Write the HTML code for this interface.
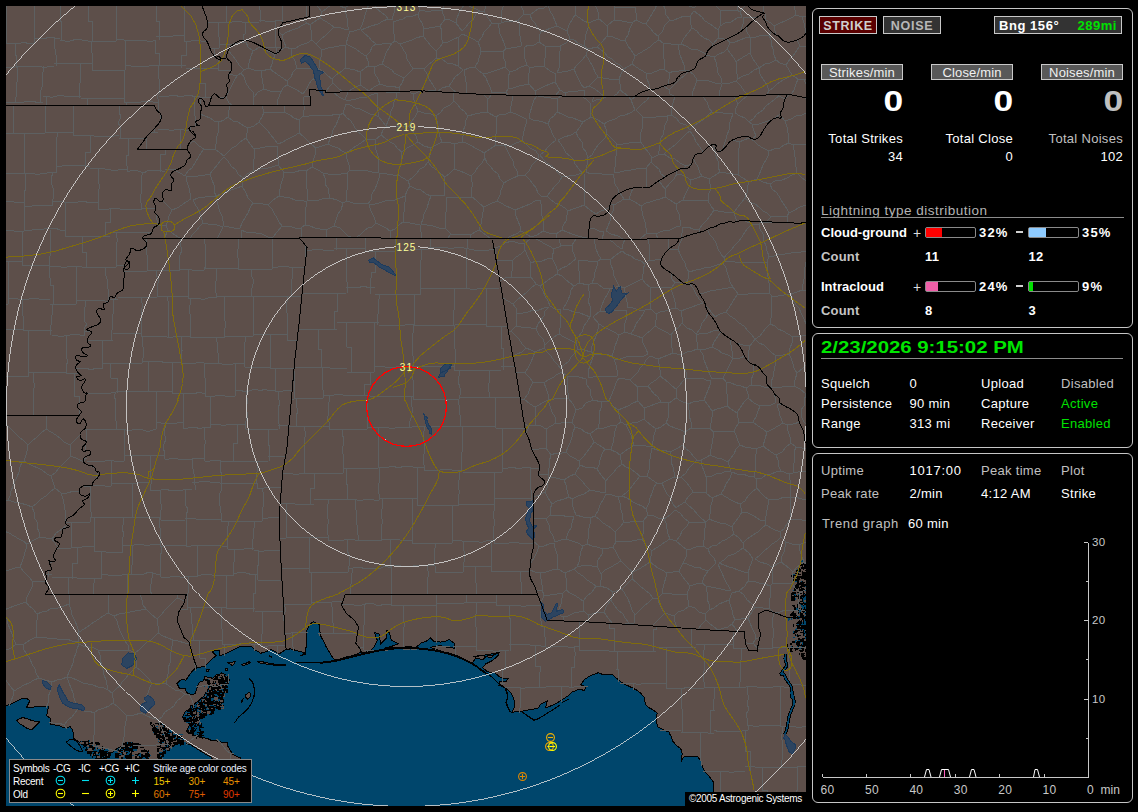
<!DOCTYPE html>
<html><head><meta charset="utf-8"><title>Lightning</title><style>
html,body{margin:0;padding:0;background:#000;}
body{width:1138px;height:812px;overflow:hidden;position:relative;font-family:"Liberation Sans",sans-serif;color:#fff;}
.a{position:absolute;white-space:nowrap;line-height:1;}
.box{position:absolute;border:1px solid #c6c6c6;border-radius:6px;box-sizing:border-box;}
.t{position:absolute;white-space:nowrap;font-size:13px;line-height:16px;height:16px;letter-spacing:0.3px;}
.r{text-align:right;}
.g{color:#c0c0c0;}
.gr{color:#00e000;}
.b{font-weight:bold;}
.btn{position:absolute;box-sizing:border-box;border:1px solid #c8c8c8;text-align:center;white-space:nowrap;}
.bar{position:absolute;box-sizing:border-box;border:1px solid #8a8a8a;border-radius:2px;width:51px;height:11px;}
.bar i{position:absolute;left:0;top:0;height:9px;display:block;}
.lg{position:absolute;white-space:nowrap;font-size:10px;line-height:12px;height:12px;letter-spacing:-0.25px;color:#fff;}
</style></head><body>
<svg class="a" style="left:6px;top:6px;" width="800" height="800" viewBox="6 6 800 800" shape-rendering="crispEdges">
<rect x="6" y="6" width="800" height="800" fill="#5d4f4a"/>
<polygon points="-5,706 3.5,706 10.5,704.3 15.8,701.6 21.1,699 26.4,698.1 29.9,700.8 28.1,704.3 26.4,707.8 30.3,707.4 35.1,706.9 40.2,706.6 45.7,706 47.5,704.8 48.3,706.9 47.7,710.6 46.6,715.7 50.1,718.3 51,724.5 58,725.4 65,728 70.3,726.6 72.9,730.6 73.8,738.5 79.1,742.1 84.4,741.2 91.4,743.8 98.4,747.3 101.1,750 105.4,751.7 112.5,752.6 115.6,749.5 119.5,747.3 123.8,744.7 126.5,742.1 133.6,743.8 140.6,747.3 144.6,749.5 147.6,751.7 149.4,757.9 151.1,764.9 161.1,763.8 161.1,757.5 166.4,749.1 174.8,744.8 184.3,742.7 190.6,744.8 199.1,750.1 207.5,755.4 211.7,757.5 213.8,763.8 241.2,763.8 240.9,761.1 240.2,757.5 237.1,756.8 232.8,754.3 231.7,752.5 229.6,749.1 227.6,745.8 227.5,742.7 224.2,742.5 219.1,741.7 216.2,740.4 211.7,740.6 207.4,738.5 203.3,737.5 200.2,737.1 196.9,736.4 192.4,734.1 189.5,733.7 186.4,731.1 188.5,727.3 189.6,724.8 187.7,721.6 184.9,719.1 182.2,717.4 183.3,715.2 185.8,711 189.5,709.4 190.6,705.8 193,705 196.3,702.6 199.1,700.5 200.6,698.8 203.7,696.2 206.2,692.2 207.5,690 198.5,725 200.6,722.2 202.7,718 204.4,715.1 206.9,713.8 211.1,711.7 213.1,708.6 214.3,707.5 218.1,707.2 221.7,707.5 219.6,703.3 220.1,701.2 222.7,699.1 222.1,695.7 223.8,692.7 224.3,689.1 226.9,687.5 225.9,685.3 226.8,683.5 228,680.1 226.9,675.9 223.4,673.6 221.7,672.7 219.4,674.8 216.4,674.8 214.5,676.7 212.2,679 210.9,677.2 208.1,677.1 204.8,676.9 203.7,680.6 199.5,682.2 197.4,686.4 195.3,693.8 191.1,694.8 186.9,692.7 184.8,688 179.5,688.5 176.9,683.2 181.6,679.5 185.8,680.1 191.1,672.7 195.3,667.9 204.8,666.4 209,662.1 212.2,658.5 216.4,655.8 214.3,653.7 212.2,652.1 215.3,650.5 219.6,650.5 219.6,655.8 226.9,653.2 235.4,649 240.7,646.3 251.2,646.3 254.4,649.5 260.7,653.2 264.9,652.1 271.2,649.5 279.7,653.7 284.9,650 290,649 289.4,648.5 298.2,651.1 305.2,652.8 300,656.1 305.3,654.4 305.7,648.7 307,643.8 306.9,639.3 306.6,634.1 307,629.8 309.7,624.5 313.2,621.8 319.3,624.5 319.6,628.9 320.1,632.9 321.1,636.8 323.9,641.7 326.4,647.3 329,651.6 331.6,656.1 334.3,659.6 339,659.2 343.9,657.9 347.9,656.4 352.7,655.8 359.8,652.6 365,652.1 369.4,651.7 373.8,647.3 377.3,640.3 375.7,636.2 374.7,632.4 379.1,634.1 379.8,639.4 380.8,643.8 386.1,638.5 387,630.6 389.6,633.3 391.4,640.3 398.4,643.8 391.4,646.4 384.4,648.2 387.9,648.2 392,647.6 396.7,647.6 401.5,647.6 405.4,647 410.6,646.9 416,647.3 421.3,642.9 426.5,641.2 430.1,637.7 433.6,641.2 440.6,642.1 445.3,641.2 449.4,639.4 454.7,643.8 454.7,648.2 447.6,647.3 440.6,645.6 434.9,646.7 430.1,647.3 435.7,649.2 440.6,650.8 444.7,652.4 449.6,653.1 453.9,654.5 458.2,656.1 462.4,658.3 467.4,660.7 472.2,663.1 475.7,657.9 482.8,659.6 486.3,656.1 490.8,655.6 495.1,654.4 500,652.6 473.5,656.9 480.5,655.1 485.9,656.6 491.1,657.8 496.4,652.5 499,654.3 496.3,657.1 492.8,660.4 485.8,663.9 482.3,667.5 487.6,671.8 494.6,672.7 498.3,675.8 501.6,678 507.8,678.9 506,681.5 499.9,681.5 499,685.4 505.1,687.7 510.4,692.1 513.9,699.1 514.8,706.1 512.2,712.3 517.1,711.5 521,711.4 528,710 533.4,709.1 538.5,707.9 540.3,704.4 547.3,700.8 545.6,707.9 552.6,705.2 556.1,703.7 559.6,701.1 563.1,699.1 568,695.8 571.9,692.1 579,689.4 584.2,690.3 586,686.8 580.7,685 584.2,679.8 587.5,677.4 591.3,675.4 598.3,672.7 603.6,674.8 608,674.1 612.4,674.5 616,677.8 619.4,680.6 623.7,683.7 628.2,685.9 633.1,688.2 637,690.3 640.7,693.3 644,697.3 645.7,704.4 648.7,707.6 652.8,709.6 657.2,713.1 656.5,717.2 656.3,721.9 658,727.2 665.1,730.7 670,732.5 669.8,734.1 671.5,737.2 672.8,741.1 675,743.8 677,746 680.3,748.2 681.8,750.7 682.1,754.4 681.7,758.1 681.2,761.4 683.8,757 686.7,756.8 691.1,756.9 694.7,756.5 697.9,757 701.4,761.4 701.9,764.4 703.1,768.4 705.8,772.5 708.4,775.4 711.2,779.3 713.7,782.5 713.5,786.3 713.1,789.2 713.9,793.3 713.7,796.5 713,820 -5,820" fill="#00466c" stroke="#000" stroke-width="1"/>
<polygon points="803.8,589 808,589 808,643 803.8,643" fill="#00466c" stroke="#000" stroke-width="1"/>
<polygon points="16.7,720.1 19.3,719 22.8,717.5 27,718.8 30.8,720.1 34.8,721.3 39.5,721.8 37.7,724 35.1,726.2 31.6,729.8 26.4,728 22.9,725.5 19.3,723.6 16.7,720.1" fill="#5d4f4a" stroke="#000" stroke-width="1"/>
<polygon points="228,662.7 233.3,661.9 235.4,661.6 233.8,664.8 232.2,665.3 229.1,663.7 228,662.7" fill="#5d4f4a" stroke="#000" stroke-width="1"/>
<polygon points="241.7,664.3 245.9,663.4 249.1,661.6 250.1,662.7 247,664.8 242.8,665.3 241.7,664.3" fill="#5d4f4a" stroke="#000" stroke-width="1"/>
<polygon points="257.5,661.6 261.7,661.1 264.9,662.7 271.2,663.4 275.4,664.5 281.8,664.3 286,665.1 281.8,665.5 275.4,665.3 269.1,664.5 262.8,663.4 258.6,662.7 257.5,661.6" fill="#5d4f4a" stroke="#000" stroke-width="1"/>
<polygon points="245.9,694.8 248.6,692.7 250.7,693.3 250.1,696.9 247.5,699.1 245.9,697.5 245.9,694.8" fill="#5d4f4a" stroke="#000" stroke-width="1"/>
<polygon points="241.5,700.6 243,699.1 242.8,701.7 241.7,702.4 241.5,700.6" fill="#5d4f4a" stroke="#000" stroke-width="1"/>
<polygon points="225.4,669 228,668.3 227.5,670.1 225.9,670.6 225.4,669" fill="#5d4f4a" stroke="#000" stroke-width="1"/>
<polygon points="205.9,670.1 209,669.5 208.5,671.6 206.4,671.4 205.9,670.1" fill="#5d4f4a" stroke="#000" stroke-width="1"/>
<polygon points="269.1,655.8 271.8,656.3 271.2,657.4 269.1,655.8" fill="#5d4f4a" stroke="#000" stroke-width="1"/>
<path d="M217 694h2v1h-2zM204 703h1v1h-1zM191 722h3v1h-3zM211 698h2v1h-2zM215 693h3v2h-3zM212 698h2v2h-2zM199 702h2v2h-2zM224 684h2v1h-2zM211 700h3v3h-3zM221 685h2v1h-2zM211 709h3v1h-3zM200 723h3v3h-3zM200 703h2v1h-2zM219 684h2v1h-2zM198 712h1v2h-1zM212 683h4v1h-4zM205 680h1v2h-1zM219 705h1v2h-1zM195 712h1v2h-1zM200 722h1v1h-1zM208 682h2v1h-2zM206 710h2v2h-2zM217 678h2v1h-2zM222 694h1v2h-1zM221 689h2v1h-2zM224 677h1v1h-1zM215 692h1v2h-1zM205 707h4v2h-4zM205 714h3v1h-3zM224 682h2v3h-2zM210 706h1v1h-1zM225 675h4v1h-4zM206 679h3v2h-3zM185 720h2v1h-2zM191 718h1v1h-1zM196 718h1v1h-1zM197 723h2v1h-2zM199 707h3v3h-3zM218 681h3v2h-3zM211 703h3v1h-3zM226 679h3v1h-3zM221 693h1v2h-1zM223 690h3v1h-3zM199 719h3v2h-3zM218 686h1v2h-1zM217 691h3v1h-3zM217 677h4v2h-4zM208 695h3v2h-3zM214 701h1v2h-1zM200 715h1v2h-1zM205 714h2v1h-2zM185 718h2v3h-2zM202 712h1v2h-1zM218 696h2v2h-2zM214 693h4v3h-4zM199 715h2v3h-2zM209 697h1v2h-1zM204 685h1v2h-1zM189 724h4v3h-4zM210 701h3v3h-3zM204 704h3v3h-3zM218 690h2v2h-2zM219 696h2v1h-2zM213 705h4v1h-4zM219 682h2v1h-2zM184 718h1v3h-1zM224 684h1v1h-1zM208 711h1v2h-1zM213 699h2v1h-2zM216 688h3v2h-3zM200 704h2v2h-2zM208 686h3v2h-3zM212 688h2v1h-2zM191 709h2v1h-2zM192 719h1v2h-1zM219 696h1v2h-1zM194 715h1v1h-1zM198 711h1v1h-1zM222 689h4v2h-4zM211 693h2v1h-2zM201 714h2v3h-2zM208 680h1v2h-1zM214 683h1v2h-1z" fill="#00466c"/><path d="M205 703h3v2h-3zM212 705h1v3h-1zM218 690h1v3h-1zM212 694h1v2h-1zM218 687h2v1h-2zM219 682h2v3h-2zM190 711h4v2h-4zM196 719h2v3h-2zM194 713h2v2h-2zM209 685h2v3h-2zM210 711h4v3h-4zM193 710h3v2h-3zM215 676h3v3h-3zM227 678h2v2h-2zM212 709h1v3h-1zM211 693h3v1h-3zM202 717h3v1h-3zM206 712h2v2h-2zM223 690h1v2h-1zM192 721h1v2h-1zM198 720h1v2h-1zM220 679h1v2h-1zM196 716h3v1h-3zM213 687h4v3h-4zM220 685h1v1h-1zM202 706h2v1h-2zM213 683h1v1h-1zM217 701h1v2h-1zM223 693h1v1h-1zM197 724h4v1h-4zM194 710h3v1h-3zM218 680h3v3h-3zM226 677h3v3h-3zM195 711h3v3h-3zM208 683h3v1h-3zM200 715h2v1h-2zM192 709h2v1h-2zM216 679h2v1h-2zM220 705h4v3h-4zM223 680h2v1h-2zM207 710h4v1h-4zM198 716h4v3h-4zM195 708h1v2h-1zM199 706h1v1h-1zM199 721h1v3h-1zM218 690h4v2h-4zM208 683h2v2h-2zM200 710h2v2h-2zM198 706h1v2h-1zM197 707h3v1h-3zM205 713h1v1h-1zM221 678h4v1h-4zM209 695h2v3h-2zM206 698h2v2h-2zM209 706h4v2h-4zM188 723h4v1h-4zM187 718h1v1h-1zM201 704h4v2h-4zM216 685h2v3h-2zM211 691h4v3h-4zM214 683h1v1h-1zM219 692h3v2h-3zM212 703h2v1h-2zM207 695h4v2h-4zM195 713h1v3h-1zM198 711h1v2h-1zM202 715h2v1h-2zM183 717h3v3h-3zM186 715h4v1h-4zM198 715h1v2h-1zM204 715h3v1h-3zM201 716h1v2h-1zM224 686h4v2h-4zM213 689h3v2h-3zM194 719h4v1h-4zM204 715h1v1h-1zM198 703h2v3h-2zM221 698h2v3h-2zM210 700h3v1h-3zM215 678h2v1h-2zM207 700h2v2h-2zM218 679h2v2h-2zM207 688h2v3h-2zM213 686h4v1h-4zM197 722h4v2h-4zM214 678h1v2h-1zM211 711h2v1h-2zM212 705h2v1h-2zM197 707h2v1h-2zM210 700h1v3h-1zM218 680h2v2h-2zM197 721h2v1h-2zM203 711h3v3h-3zM188 722h4v2h-4zM220 682h1v2h-1zM212 689h4v2h-4zM206 679h2v3h-2zM208 694h2v2h-2zM220 679h3v2h-3zM224 689h4v3h-4zM209 712h3v1h-3zM193 717h2v1h-2zM208 681h2v3h-2zM198 703h1v2h-1zM223 689h2v1h-2zM211 709h3v1h-3zM190 719h1v2h-1zM189 718h4v1h-4zM194 710h2v2h-2zM194 706h1v2h-1zM209 701h3v1h-3zM189 724h1v2h-1zM190 713h3v2h-3zM218 685h1v3h-1zM210 686h4v1h-4zM194 714h1v3h-1zM217 699h3v1h-3zM205 707h2v1h-2zM193 719h2v3h-2zM216 685h3v1h-3zM207 681h1v3h-1zM189 722h1v1h-1zM196 704h1v1h-1zM205 679h2v2h-2zM204 709h3v2h-3zM222 685h2v3h-2zM192 709h2v1h-2zM219 698h3v2h-3zM209 697h2v1h-2zM194 708h2v2h-2zM210 694h2v1h-2zM199 720h1v3h-1zM210 687h1v1h-1zM199 708h4v1h-4zM196 717h4v2h-4zM193 706h4v2h-4zM190 717h3v1h-3zM219 679h4v2h-4zM201 706h4v1h-4zM207 698h2v2h-2zM225 686h1v1h-1zM208 680h2v2h-2zM223 689h1v2h-1zM191 718h2v2h-2zM219 693h3v3h-3zM212 705h2v1h-2zM217 689h1v1h-1zM217 687h4v2h-4zM200 710h3v1h-3zM197 711h2v2h-2zM211 696h1v2h-1zM209 687h1v1h-1zM209 703h2v1h-2zM198 724h4v2h-4zM224 676h2v2h-2zM205 702h4v2h-4zM220 699h3v3h-3zM206 696h1v3h-1zM207 690h3v2h-3zM223 679h4v1h-4zM219 696h2v1h-2zM219 681h1v2h-1zM200 717h2v1h-2zM213 695h2v2h-2zM212 684h1v1h-1zM214 697h1v2h-1zM216 692h2v1h-2zM201 716h2v1h-2zM198 709h3v1h-3zM195 718h1v2h-1zM192 706h2v2h-2zM209 707h4v1h-4zM213 685h1v3h-1zM223 686h2v1h-2zM209 701h1v1h-1zM213 681h1v2h-1zM205 698h1v1h-1zM200 716h4v1h-4zM200 711h1v3h-1zM212 699h2v1h-2zM203 702h1v3h-1zM189 723h2v3h-2zM215 681h1v2h-1zM221 675h1v1h-1zM224 690h4v3h-4zM216 686h2v2h-2zM199 707h1v1h-1zM197 716h4v2h-4zM206 711h3v1h-3zM209 692h3v3h-3zM198 717h3v2h-3zM212 692h3v1h-3zM220 690h1v2h-1zM217 675h3v1h-3zM217 703h4v2h-4zM187 718h2v3h-2zM188 722h2v2h-2zM205 709h2v1h-2zM217 690h1v2h-1zM214 693h2v1h-2zM211 691h1v2h-1zM191 720h1v2h-1zM227 678h1v3h-1zM195 702h1v2h-1zM225 681h3v1h-3zM218 686h2v3h-2zM208 691h3v1h-3zM216 689h3v1h-3zM191 710h2v1h-2zM208 680h2v1h-2zM226 684h1v2h-1zM200 720h1v3h-1zM199 711h2v2h-2zM192 721h4v3h-4zM193 719h1v1h-1zM218 701h3v1h-3zM207 680h1v1h-1zM224 675h1v2h-1zM224 680h2v1h-2zM225 683h4v1h-4zM194 722h1v2h-1zM213 679h3v1h-3zM205 681h3v1h-3zM216 684h1v2h-1zM219 699h2v1h-2zM194 705h2v2h-2zM211 689h3v3h-3zM210 695h2v2h-2zM189 722h1v1h-1zM198 702h3v2h-3zM213 707h2v3h-2zM209 694h1v3h-1zM221 681h4v3h-4zM212 709h2v1h-2zM203 706h2v1h-2zM227 681h2v2h-2zM206 689h1v1h-1zM195 722h2v1h-2zM206 698h4v3h-4zM197 723h4v3h-4zM226 679h4v2h-4zM217 702h3v2h-3zM209 695h1v1h-1zM190 724h1v3h-1zM194 714h1v2h-1zM226 683h1v3h-1zM214 696h2v2h-2zM208 712h4v1h-4zM213 705h4v3h-4zM204 703h4v1h-4zM212 683h1v3h-1zM183 718h1v2h-1zM216 705h4v2h-4zM202 707h1v3h-1zM209 711h2v1h-2zM221 691h1v3h-1zM199 718h1v2h-1zM198 723h4v2h-4zM203 702h1v2h-1zM198 712h2v3h-2zM220 693h2v3h-2zM199 707h2v3h-2zM218 687h2v1h-2zM207 704h4v2h-4zM209 713h3v2h-3zM221 701h1v2h-1zM222 676h1v3h-1zM213 709h2v2h-2zM224 688h2v2h-2zM219 692h2v3h-2zM200 707h2v2h-2zM225 677h1v3h-1zM220 677h2v3h-2zM201 702h2v3h-2zM198 723h1v1h-1zM216 685h2v3h-2zM190 719h4v1h-4zM216 689h1v1h-1zM200 707h4v1h-4zM205 713h1v2h-1zM190 711h1v1h-1zM220 680h1v1h-1zM193 707h4v1h-4zM209 685h2v1h-2zM216 678h2v1h-2zM195 707h4v2h-4zM224 678h2v2h-2zM216 706h2v2h-2zM211 687h3v2h-3zM207 690h1v1h-1zM211 706h3v1h-3z" fill="#000"/><path d="M203 702h2v2h-2zM210 687h1v1h-1zM207 711h4v1h-4zM198 709h2v1h-2zM218 701h3v3h-3zM191 720h2v3h-2zM191 717h3v2h-3zM207 694h2v2h-2zM197 720h2v3h-2zM224 684h1v1h-1zM211 691h1v1h-1zM217 705h2v1h-2zM216 681h1v2h-1zM207 708h2v1h-2zM215 702h4v2h-4zM223 694h2v3h-2zM218 676h1v2h-1zM215 689h2v1h-2zM224 677h1v3h-1zM220 706h4v3h-4zM216 702h3v1h-3zM204 698h2v2h-2zM214 684h1v2h-1zM198 703h1v1h-1zM198 710h4v1h-4zM195 711h1v2h-1zM206 689h1v3h-1zM212 684h1v2h-1zM218 678h3v1h-3zM201 708h1v1h-1zM201 720h1v2h-1zM205 681h2v3h-2zM199 711h3v2h-3zM188 720h3v3h-3zM217 681h1v1h-1zM225 691h1v2h-1zM195 714h2v2h-2zM203 702h1v2h-1zM223 699h1v3h-1zM212 709h2v2h-2zM206 688h2v1h-2zM197 711h2v3h-2zM198 704h3v2h-3z" fill="#5d4f4a"/>
<path d="M159 751h3v1h-3zM161 736h1v1h-1zM162 734h4v2h-4zM161 750h4v1h-4zM172 737h4v2h-4zM158 738h1v2h-1zM169 732h1v2h-1zM159 751h3v2h-3zM182 739h4v1h-4zM170 742h4v1h-4zM166 748h2v2h-2zM159 741h4v2h-4zM166 745h4v2h-4zM154 728h1v1h-1zM158 741h1v1h-1zM178 739h1v1h-1zM153 731h2v2h-2zM165 746h2v2h-2zM182 741h1v1h-1zM161 724h2v2h-2zM166 740h1v1h-1zM159 741h1v2h-1zM165 749h1v1h-1zM169 737h2v2h-2zM165 746h2v1h-2zM163 741h1v2h-1zM160 726h2v2h-2zM156 726h2v1h-2zM160 755h1v2h-1zM180 743h4v1h-4zM162 734h4v3h-4zM173 739h1v2h-1zM169 735h1v3h-1zM161 754h3v1h-3zM163 739h4v1h-4zM168 736h3v1h-3zM173 734h4v1h-4zM160 724h2v2h-2zM170 730h2v1h-2zM179 740h1v1h-1zM157 754h1v1h-1zM166 744h1v2h-1zM183 742h3v2h-3zM168 730h1v2h-1zM163 725h1v2h-1zM156 728h2v2h-2zM175 740h1v2h-1zM178 736h4v3h-4zM179 734h4v1h-4zM169 730h3v3h-3zM168 733h1v3h-1zM169 740h2v1h-2zM178 743h1v1h-1zM159 756h3v2h-3zM155 729h2v2h-2zM164 726h1v1h-1z" fill="#00466c"/><path d="M166 745h1v2h-1zM169 745h2v2h-2zM157 757h2v1h-2zM180 741h1v2h-1zM171 745h3v2h-3zM168 744h1v2h-1zM153 729h3v3h-3zM178 739h2v1h-2zM168 729h2v1h-2zM159 733h1v3h-1zM165 728h2v2h-2zM158 757h3v2h-3zM166 744h2v1h-2zM165 743h2v3h-2zM150 722h2v2h-2zM154 728h1v3h-1zM172 735h4v1h-4zM163 724h2v2h-2zM168 744h3v3h-3zM174 735h2v2h-2zM161 746h1v2h-1zM160 727h4v2h-4zM166 737h4v3h-4zM161 729h1v1h-1zM160 740h4v2h-4zM163 745h1v3h-1zM164 734h4v3h-4zM155 730h4v3h-4zM177 735h4v2h-4zM161 749h2v1h-2zM155 728h2v3h-2zM179 741h1v1h-1zM160 728h2v3h-2zM180 743h4v2h-4zM168 737h4v1h-4zM177 739h2v2h-2zM172 735h3v1h-3zM164 736h1v1h-1zM162 729h1v1h-1zM166 733h2v1h-2zM163 745h1v2h-1zM154 725h1v2h-1zM161 753h3v2h-3zM175 744h3v1h-3zM170 742h2v2h-2zM161 739h1v3h-1zM163 728h2v3h-2zM162 755h2v2h-2zM156 731h1v3h-1zM160 725h2v2h-2zM162 732h4v2h-4zM179 736h2v2h-2zM151 725h1v1h-1zM163 739h1v1h-1zM179 735h2v3h-2zM172 737h2v2h-2zM162 735h3v2h-3zM181 741h3v2h-3zM164 726h1v3h-1zM160 732h3v2h-3zM172 734h1v1h-1zM167 727h2v1h-2zM165 733h2v1h-2zM159 748h1v1h-1zM160 743h2v2h-2zM180 744h1v2h-1zM171 741h1v2h-1zM161 730h1v2h-1zM172 738h1v3h-1zM152 724h1v3h-1zM157 754h2v2h-2zM173 742h2v2h-2zM158 723h4v2h-4zM167 737h1v1h-1zM172 745h3v1h-3zM175 744h1v1h-1zM181 740h3v2h-3zM158 735h3v3h-3zM173 736h3v1h-3zM176 741h4v1h-4zM154 732h2v3h-2zM161 756h1v1h-1zM159 753h4v2h-4zM157 755h2v2h-2zM177 736h2v2h-2zM162 732h1v2h-1zM164 730h1v1h-1zM157 756h1v1h-1zM150 723h1v2h-1zM177 742h2v2h-2zM179 742h2v1h-2zM155 727h1v2h-1zM164 729h2v2h-2zM169 732h2v1h-2zM174 741h4v2h-4zM173 740h3v3h-3zM156 735h4v3h-4zM158 755h2v3h-2zM178 739h1v1h-1zM157 746h3v1h-3zM179 740h2v1h-2zM176 743h2v1h-2zM164 749h1v1h-1zM165 741h1v2h-1zM168 748h2v2h-2zM181 738h2v1h-2zM168 740h3v3h-3zM167 747h2v3h-2zM162 753h1v3h-1zM172 737h3v1h-3zM161 724h1v1h-1zM159 736h1v3h-1zM162 746h3v3h-3zM173 742h4v2h-4zM152 730h4v1h-4zM169 739h3v2h-3zM164 739h2v3h-2zM155 722h3v2h-3zM168 729h1v1h-1zM161 749h1v2h-1zM164 747h4v2h-4zM167 730h2v3h-2zM177 739h3v3h-3zM160 745h2v3h-2zM153 724h1v1h-1zM167 749h3v2h-3zM176 738h2v2h-2zM177 735h2v1h-2zM162 746h2v2h-2zM157 750h2v2h-2zM164 752h2v1h-2zM171 745h3v1h-3zM162 736h1v1h-1zM162 736h3v3h-3zM171 741h1v3h-1zM159 742h1v1h-1zM157 749h2v1h-2zM159 739h2v1h-2zM160 731h2v2h-2zM167 737h1v1h-1zM154 726h1v2h-1zM162 749h2v1h-2zM157 751h2v1h-2zM162 751h4v3h-4zM177 739h3v2h-3zM159 733h1v1h-1zM172 732h1v2h-1zM153 727h2v2h-2zM157 748h2v2h-2zM170 741h3v2h-3zM167 734h3v3h-3zM159 735h2v1h-2zM166 735h4v1h-4zM162 753h1v2h-1zM159 751h4v1h-4zM152 728h2v2h-2zM159 731h2v2h-2zM158 736h2v3h-2zM169 736h4v3h-4zM158 736h1v2h-1zM161 745h1v3h-1zM151 724h2v2h-2zM172 733h1v1h-1zM170 742h2v1h-2zM156 734h4v1h-4zM156 728h1v1h-1zM164 727h1v2h-1zM178 741h2v2h-2zM169 740h1v3h-1zM158 735h1v1h-1zM166 743h4v1h-4zM156 729h3v1h-3zM180 735h2v2h-2zM160 736h2v2h-2zM161 726h2v3h-2zM161 746h1v2h-1zM179 743h1v1h-1zM162 736h1v1h-1zM155 731h3v1h-3zM159 757h2v1h-2zM159 757h3v2h-3zM175 742h1v3h-1zM174 739h4v1h-4zM159 742h3v1h-3zM166 730h2v2h-2zM161 754h2v1h-2z" fill="#000"/><path d="M157 743h2v1h-2zM169 747h2v1h-2zM164 742h1v3h-1zM173 741h4v1h-4zM163 731h1v1h-1zM159 740h1v2h-1zM169 729h2v1h-2zM171 742h2v1h-2zM165 737h3v2h-3zM155 721h4v2h-4zM159 750h3v2h-3zM162 749h1v3h-1zM171 745h1v2h-1zM164 741h1v1h-1zM166 748h3v2h-3zM163 744h4v1h-4zM178 735h4v1h-4zM166 741h3v2h-3zM160 725h3v2h-3zM161 744h4v3h-4zM161 731h2v2h-2zM171 747h1v2h-1zM173 738h1v2h-1zM151 724h2v1h-2z" fill="#5d4f4a"/>
<path d="M193 723h1v1h-1zM216 702h2v3h-2zM192 714h1v3h-1zM213 702h1v2h-1zM200 701h3v2h-3zM208 690h1v2h-1zM219 695h1v2h-1zM197 711h2v1h-2zM189 732h1v1h-1zM212 704h1v1h-1zM202 703h2v2h-2zM206 692h1v1h-1zM223 691h1v2h-1zM199 713h1v1h-1zM215 698h2v2h-2zM200 703h1v1h-1zM218 696h2v1h-2zM206 709h3v3h-3zM218 698h2v3h-2zM208 709h1v2h-1zM203 698h1v2h-1zM212 693h1v3h-1zM203 710h2v3h-2zM211 704h2v1h-2zM196 728h4v2h-4zM197 732h3v2h-3zM223 693h1v1h-1zM200 732h2v1h-2zM212 690h2v2h-2zM208 709h2v2h-2zM198 727h3v2h-3zM200 728h2v2h-2zM214 709h3v1h-3zM214 706h2v1h-2zM218 692h4v2h-4zM186 721h2v2h-2zM215 696h2v1h-2zM219 695h1v2h-1zM205 696h1v2h-1zM205 694h2v2h-2zM197 732h4v2h-4zM202 704h3v1h-3zM199 707h1v1h-1zM199 722h2v3h-2zM210 707h1v1h-1zM192 710h1v2h-1zM207 695h2v2h-2zM207 712h4v1h-4zM200 710h1v3h-1zM194 707h2v3h-2zM218 703h2v2h-2zM190 708h3v1h-3zM196 734h1v3h-1zM199 720h4v3h-4zM212 693h2v1h-2zM197 734h2v2h-2zM188 721h2v2h-2zM191 722h2v1h-2zM207 710h4v2h-4zM211 699h3v2h-3zM194 715h2v3h-2zM216 699h1v3h-1zM213 697h1v1h-1zM220 696h2v2h-2zM217 694h1v3h-1zM197 715h1v2h-1zM194 705h3v2h-3zM196 730h3v2h-3zM214 693h2v2h-2zM219 707h4v1h-4zM205 697h3v1h-3zM208 704h2v3h-2zM198 707h1v3h-1zM186 721h3v1h-3zM204 709h1v1h-1zM221 693h3v1h-3zM223 700h3v2h-3zM194 733h4v2h-4zM213 709h1v2h-1zM205 694h1v2h-1zM192 729h4v2h-4zM198 711h2v1h-2zM196 712h1v3h-1zM188 731h2v2h-2zM216 691h3v2h-3zM196 731h4v2h-4zM210 705h4v1h-4zM213 697h2v2h-2zM211 699h3v2h-3z" fill="#00466c"/><path d="M209 699h1v2h-1zM220 702h2v1h-2zM206 710h2v2h-2zM210 706h4v2h-4zM214 696h2v3h-2zM204 702h3v2h-3zM203 701h1v2h-1zM188 710h2v2h-2zM219 701h4v2h-4zM209 698h2v2h-2zM191 731h4v1h-4zM212 692h3v2h-3zM220 698h3v3h-3zM199 733h4v1h-4zM218 692h1v2h-1zM217 701h1v2h-1zM200 705h1v1h-1zM196 704h1v1h-1zM195 708h1v1h-1zM217 692h1v3h-1zM190 709h3v1h-3zM190 708h1v1h-1zM187 718h2v3h-2zM191 725h2v1h-2zM218 697h3v2h-3zM221 702h3v1h-3zM192 715h2v2h-2zM192 714h2v1h-2zM207 702h4v1h-4zM207 693h3v3h-3zM197 717h3v3h-3zM200 734h2v2h-2zM200 717h4v1h-4zM218 697h3v1h-3zM200 702h3v3h-3zM218 694h1v2h-1zM209 695h3v1h-3zM205 696h2v2h-2zM218 703h1v1h-1zM209 697h2v2h-2zM216 706h2v1h-2zM204 711h3v1h-3zM206 699h2v1h-2zM199 709h4v1h-4zM206 710h4v1h-4zM191 713h1v1h-1zM194 728h1v1h-1zM185 715h3v1h-3zM213 708h2v2h-2zM188 720h1v1h-1zM200 727h1v1h-1zM221 696h2v1h-2zM211 703h2v2h-2zM199 733h1v2h-1zM189 717h3v2h-3zM205 704h2v1h-2zM208 700h3v2h-3zM211 710h1v2h-1zM193 731h1v1h-1zM201 704h1v2h-1zM201 713h1v1h-1zM207 705h2v2h-2zM202 710h2v3h-2zM195 723h1v3h-1zM188 730h4v3h-4zM187 730h2v3h-2zM198 704h2v1h-2zM202 698h2v2h-2zM190 723h2v3h-2zM185 720h1v1h-1zM200 705h1v2h-1zM200 735h4v1h-4zM208 694h4v1h-4zM188 713h1v1h-1zM223 699h1v2h-1zM194 720h1v1h-1zM209 708h2v3h-2zM192 705h1v1h-1zM200 715h1v1h-1zM215 701h2v1h-2zM196 717h1v3h-1zM204 710h1v2h-1zM192 730h1v3h-1zM219 697h4v1h-4zM192 711h2v1h-2zM210 693h4v2h-4zM201 705h4v1h-4zM205 712h2v2h-2zM208 699h3v3h-3zM193 718h1v2h-1zM193 719h2v1h-2zM192 706h3v1h-3zM216 704h1v1h-1zM206 710h2v2h-2zM193 708h2v1h-2zM209 707h2v3h-2zM210 702h4v2h-4zM208 707h1v1h-1zM197 734h1v3h-1zM207 704h3v2h-3zM195 729h1v2h-1zM202 715h3v1h-3zM202 708h2v2h-2zM193 729h1v1h-1zM204 711h1v1h-1zM194 715h1v1h-1zM204 697h2v1h-2zM202 706h3v2h-3zM198 714h4v1h-4zM192 730h3v1h-3zM215 692h3v2h-3zM199 729h2v2h-2zM219 695h1v2h-1zM211 710h3v1h-3zM213 700h1v1h-1zM205 698h4v2h-4zM201 731h3v2h-3zM211 693h2v3h-2zM218 692h2v2h-2zM204 714h3v2h-3zM192 729h2v3h-2zM190 710h2v3h-2zM212 709h3v1h-3zM206 713h1v2h-1zM198 725h1v1h-1zM195 721h1v3h-1zM189 721h2v1h-2zM209 690h4v1h-4zM189 720h1v1h-1zM194 725h2v2h-2zM202 707h4v2h-4zM190 731h2v3h-2zM196 709h1v2h-1zM205 698h3v1h-3zM192 723h2v1h-2zM218 703h2v2h-2zM187 718h1v1h-1zM191 725h1v2h-1zM195 710h2v1h-2zM198 735h2v2h-2zM213 701h1v1h-1zM195 716h2v3h-2zM210 692h1v2h-1zM212 695h3v3h-3zM200 727h4v1h-4zM194 719h1v2h-1zM197 708h2v1h-2zM189 713h4v2h-4zM187 720h4v2h-4zM199 737h2v1h-2zM216 697h1v2h-1zM208 705h1v2h-1zM195 722h2v2h-2zM193 715h2v3h-2zM206 713h1v2h-1zM199 725h3v3h-3zM200 731h4v2h-4zM201 700h1v3h-1zM215 697h1v3h-1zM191 720h1v3h-1zM200 735h2v2h-2zM221 695h1v1h-1zM212 703h2v1h-2zM207 704h1v3h-1zM197 720h2v1h-2zM192 732h2v3h-2zM201 701h2v3h-2zM193 714h1v2h-1zM196 726h1v1h-1zM186 719h2v2h-2zM217 699h1v1h-1zM192 723h2v2h-2zM201 714h4v3h-4zM194 716h3v1h-3zM200 731h2v1h-2zM204 705h2v1h-2zM223 695h2v1h-2zM199 727h1v2h-1zM216 696h1v2h-1zM197 718h2v2h-2zM192 733h2v3h-2zM220 705h3v1h-3zM196 728h1v1h-1zM209 706h4v1h-4zM205 703h2v2h-2zM212 691h2v3h-2zM189 717h2v2h-2zM207 693h3v2h-3zM191 723h2v1h-2zM193 719h4v3h-4zM214 691h3v2h-3zM194 721h1v1h-1zM198 723h1v1h-1zM214 702h4v2h-4zM194 716h1v1h-1zM213 700h2v1h-2zM191 708h1v3h-1zM207 693h4v2h-4zM219 707h2v3h-2zM201 707h3v1h-3zM196 736h1v3h-1zM187 713h2v2h-2zM187 711h2v1h-2zM216 705h1v3h-1zM184 719h3v3h-3zM218 702h2v1h-2zM209 696h1v2h-1zM193 717h1v2h-1zM209 691h2v2h-2zM191 719h2v2h-2zM208 706h3v2h-3zM221 703h1v1h-1zM199 703h1v2h-1zM220 694h4v2h-4zM191 711h4v3h-4zM200 714h1v3h-1zM195 709h2v2h-2zM200 732h2v1h-2zM211 696h2v1h-2zM204 714h1v2h-1zM213 708h2v2h-2zM220 692h2v1h-2zM204 698h1v1h-1zM223 699h1v3h-1zM210 701h4v2h-4zM209 691h1v1h-1zM199 712h1v1h-1zM199 733h4v1h-4zM222 697h1v2h-1zM205 698h1v2h-1zM191 714h2v2h-2zM194 719h1v2h-1zM216 702h1v2h-1zM202 737h1v2h-1zM203 714h3v2h-3zM208 710h2v2h-2zM197 732h4v1h-4zM216 707h4v2h-4zM222 692h2v2h-2zM195 712h2v3h-2zM218 707h2v3h-2zM190 725h2v1h-2zM204 713h2v2h-2zM191 727h3v2h-3zM191 729h2v1h-2zM191 709h1v2h-1zM203 712h1v2h-1z" fill="#000"/><path d="M197 704h1v2h-1zM205 704h2v2h-2zM193 706h1v2h-1zM193 712h3v2h-3zM222 704h1v2h-1zM209 705h1v1h-1zM207 711h3v3h-3zM189 729h1v3h-1zM202 699h1v3h-1zM224 695h1v1h-1zM220 700h3v2h-3zM205 695h1v2h-1zM195 716h1v2h-1zM211 695h1v2h-1zM197 706h2v1h-2zM195 711h1v2h-1zM202 711h1v1h-1zM203 699h1v1h-1zM197 722h1v2h-1zM203 712h3v1h-3zM197 714h2v3h-2zM214 697h4v3h-4zM193 716h1v1h-1zM188 714h2v1h-2zM195 722h4v1h-4zM186 713h1v1h-1z" fill="#5d4f4a"/>
<path d="M84 741h3v1h-3zM81 741h3v2h-3zM105 748h4v3h-4zM95 754h1v2h-1zM107 753h1v2h-1zM90 743h2v2h-2zM104 750h2v1h-2zM95 746h2v1h-2zM102 748h1v3h-1zM95 745h3v2h-3zM91 746h3v2h-3zM107 754h2v2h-2zM100 750h1v3h-1zM89 750h3v2h-3zM88 740h2v2h-2zM85 748h1v3h-1zM92 751h2v2h-2zM101 758h3v2h-3zM95 746h2v1h-2zM96 756h1v2h-1zM97 757h3v2h-3zM87 747h1v3h-1zM96 755h1v3h-1zM83 744h3v1h-3zM93 756h2v2h-2zM93 751h4v1h-4zM85 746h4v1h-4zM102 746h1v2h-1zM91 749h1v1h-1zM106 755h4v1h-4zM91 743h1v2h-1zM97 744h2v2h-2zM86 749h4v2h-4zM90 748h2v1h-2zM95 748h4v1h-4zM88 752h2v2h-2zM94 754h1v1h-1zM100 756h3v3h-3zM87 750h4v2h-4zM100 748h4v1h-4zM101 757h4v1h-4z" fill="#00466c"/><path d="M98 757h2v2h-2zM100 752h4v2h-4zM90 751h1v3h-1zM98 744h1v1h-1zM104 752h3v2h-3zM87 751h2v3h-2zM83 742h4v3h-4zM90 745h2v3h-2zM91 748h2v1h-2zM96 748h2v1h-2zM100 746h2v2h-2zM95 754h1v1h-1zM107 754h2v3h-2zM87 744h2v2h-2zM100 756h3v1h-3zM94 755h2v1h-2zM93 746h1v1h-1zM83 744h3v2h-3zM91 748h4v1h-4zM99 750h2v2h-2zM106 755h4v3h-4zM103 756h1v1h-1zM103 757h4v2h-4zM87 745h3v1h-3zM105 755h2v2h-2zM89 747h2v2h-2zM107 754h4v2h-4zM102 748h1v1h-1zM100 748h1v3h-1zM95 758h3v2h-3zM95 742h4v2h-4zM93 751h4v1h-4zM86 747h1v2h-1zM96 743h3v2h-3zM85 741h4v2h-4zM93 748h1v2h-1zM93 753h2v1h-2zM85 749h4v1h-4zM95 752h1v2h-1zM98 744h1v1h-1zM83 747h1v1h-1zM87 744h1v1h-1zM103 751h2v2h-2zM101 753h1v2h-1zM89 747h2v3h-2zM84 743h2v2h-2zM96 755h1v3h-1zM97 743h3v2h-3zM89 746h4v2h-4zM90 746h4v2h-4zM106 751h1v1h-1zM90 743h1v2h-1zM89 749h1v1h-1zM84 745h2v2h-2zM84 741h2v1h-2zM102 746h1v3h-1zM90 746h2v1h-2zM104 753h3v2h-3zM106 756h1v2h-1zM85 741h2v1h-2zM87 745h3v1h-3zM104 753h1v2h-1zM94 745h1v2h-1zM100 753h2v2h-2zM97 745h2v2h-2zM91 746h3v2h-3zM83 741h1v1h-1zM92 742h1v1h-1zM93 746h2v2h-2zM94 752h1v1h-1zM92 755h3v1h-3zM100 758h4v2h-4zM102 754h1v2h-1zM80 742h2v2h-2zM83 742h3v1h-3zM88 744h1v1h-1zM97 755h2v1h-2zM96 752h3v2h-3zM103 749h2v1h-2zM96 755h1v1h-1zM100 750h3v2h-3zM85 743h4v2h-4zM93 754h2v1h-2zM81 744h3v1h-3zM85 745h2v1h-2zM88 751h4v3h-4zM106 753h2v1h-2zM82 741h4v1h-4zM90 754h1v2h-1zM85 749h3v2h-3zM90 750h3v2h-3zM96 747h1v1h-1zM88 749h4v1h-4zM88 743h2v1h-2zM92 755h1v3h-1zM100 755h2v3h-2zM93 742h1v1h-1zM107 753h4v2h-4zM93 746h4v1h-4zM102 754h3v2h-3zM88 740h1v1h-1zM85 742h3v2h-3zM92 748h1v3h-1zM85 741h2v1h-2zM107 753h2v2h-2zM94 752h1v2h-1zM85 744h3v2h-3zM97 743h2v2h-2zM91 742h3v3h-3zM80 742h3v2h-3zM92 755h3v1h-3zM99 752h1v1h-1zM90 747h2v2h-2zM93 745h2v1h-2zM103 755h4v1h-4zM96 757h3v1h-3z" fill="#000"/><path d="M90 750h3v1h-3zM86 742h2v2h-2zM96 747h1v3h-1zM103 747h1v2h-1zM94 754h1v1h-1zM102 745h3v1h-3zM98 746h4v3h-4zM80 742h4v2h-4zM103 748h1v2h-1zM97 745h2v1h-2zM95 744h1v1h-1zM96 752h2v2h-2zM97 756h3v2h-3zM87 745h2v2h-2zM93 745h3v2h-3zM90 744h4v1h-4zM107 754h1v2h-1zM87 750h3v1h-3zM92 754h1v2h-1zM88 748h4v2h-4z" fill="#5d4f4a"/>
<path d="M145 752h2v1h-2zM130 746h2v2h-2zM147 752h2v3h-2zM145 754h2v2h-2zM143 754h2v1h-2zM128 756h2v1h-2zM136 758h3v1h-3zM146 753h1v1h-1zM129 748h2v3h-2zM130 748h2v2h-2zM131 742h1v3h-1zM132 752h4v2h-4zM136 755h2v2h-2zM132 758h1v2h-1zM117 751h3v2h-3zM124 756h4v1h-4zM137 752h2v2h-2zM130 751h4v2h-4zM125 746h4v2h-4zM138 751h2v1h-2zM142 749h1v1h-1zM133 743h3v2h-3zM125 743h1v1h-1zM133 755h2v2h-2zM142 757h2v1h-2zM141 756h1v1h-1zM127 742h2v3h-2zM122 747h1v1h-1zM141 750h3v2h-3zM123 757h1v3h-1zM149 755h2v1h-2zM148 754h2v3h-2zM125 754h3v2h-3zM137 746h1v2h-1zM125 745h1v3h-1zM124 749h2v2h-2zM116 754h2v1h-2zM130 743h2v2h-2zM135 754h2v1h-2zM131 754h1v2h-1zM138 745h2v3h-2zM127 747h2v3h-2zM124 752h1v3h-1zM124 746h2v3h-2zM124 755h2v3h-2zM146 753h2v1h-2zM143 754h2v1h-2zM131 757h2v2h-2zM125 751h2v3h-2zM138 754h3v3h-3zM116 756h4v2h-4zM119 750h2v3h-2zM128 752h1v1h-1zM129 742h1v1h-1zM135 750h3v2h-3zM144 751h2v2h-2zM121 746h3v1h-3z" fill="#00466c"/><path d="M118 749h2v2h-2zM126 757h2v2h-2zM122 757h1v3h-1zM130 748h3v2h-3zM142 755h1v1h-1zM132 756h1v2h-1zM144 750h3v1h-3zM121 757h1v2h-1zM125 755h2v2h-2zM119 752h1v2h-1zM147 753h1v2h-1zM146 757h2v3h-2zM131 757h1v2h-1zM144 750h3v2h-3zM139 745h1v1h-1zM126 752h2v1h-2zM136 753h2v3h-2zM146 756h3v1h-3zM146 752h2v1h-2zM135 753h1v1h-1zM125 748h3v2h-3zM147 751h1v2h-1zM144 752h3v3h-3zM141 747h3v3h-3zM129 745h2v2h-2zM137 744h4v2h-4zM133 756h1v3h-1zM131 743h2v2h-2zM126 756h4v3h-4zM143 747h1v1h-1zM126 755h1v2h-1zM145 752h3v2h-3zM137 745h3v1h-3zM137 754h2v1h-2zM140 757h1v2h-1zM126 746h1v2h-1zM122 752h4v1h-4zM120 750h1v1h-1zM118 751h1v1h-1zM116 755h2v3h-2zM137 756h2v3h-2zM145 755h2v1h-2zM127 744h1v1h-1zM123 749h2v3h-2zM130 757h1v1h-1zM132 747h4v1h-4zM116 754h2v3h-2zM145 757h1v1h-1zM132 746h1v1h-1zM135 748h2v1h-2zM120 755h3v1h-3zM135 743h4v2h-4zM128 743h3v1h-3zM122 747h2v2h-2zM122 755h1v2h-1zM134 748h4v1h-4zM148 758h2v1h-2zM132 753h3v1h-3zM148 753h1v1h-1zM132 746h2v2h-2zM144 751h1v1h-1zM124 743h2v1h-2zM127 757h1v1h-1zM127 755h3v1h-3zM146 754h1v1h-1zM145 753h1v3h-1zM123 751h2v3h-2zM133 743h4v1h-4zM128 756h3v1h-3zM124 750h4v1h-4zM129 754h3v3h-3zM132 753h4v2h-4zM125 744h2v3h-2zM129 750h2v2h-2zM126 748h3v2h-3zM130 751h4v3h-4zM130 757h2v2h-2zM138 750h2v1h-2zM122 754h1v1h-1zM136 751h1v3h-1zM125 755h2v3h-2zM146 755h1v2h-1zM140 748h4v3h-4zM141 751h1v2h-1zM146 753h2v1h-2zM145 755h2v1h-2zM120 746h4v3h-4zM132 746h2v1h-2zM134 744h2v2h-2zM129 755h1v2h-1zM128 756h1v2h-1zM132 750h1v2h-1zM138 757h1v1h-1zM115 755h3v3h-3zM132 742h1v1h-1zM118 749h3v3h-3zM128 744h3v3h-3zM132 744h3v1h-3zM132 746h1v2h-1zM122 747h2v1h-2zM126 755h4v1h-4zM133 744h1v1h-1zM141 754h1v1h-1zM141 757h2v1h-2zM126 755h1v1h-1zM128 748h4v3h-4zM115 753h4v2h-4zM127 757h2v1h-2zM122 753h3v1h-3zM128 746h1v1h-1zM126 743h1v1h-1zM139 745h1v1h-1zM126 757h3v3h-3zM140 750h1v2h-1zM135 751h1v3h-1zM132 746h2v1h-2zM132 743h3v1h-3zM126 758h1v1h-1zM141 754h1v1h-1zM131 758h4v1h-4zM126 757h4v2h-4zM125 744h1v2h-1zM119 757h1v2h-1zM128 742h1v1h-1zM126 745h2v2h-2zM138 747h4v2h-4zM135 755h1v2h-1zM123 750h2v3h-2zM135 755h3v3h-3zM122 745h1v2h-1zM122 753h4v2h-4zM121 746h1v3h-1zM135 757h4v2h-4zM122 744h2v1h-2zM127 747h2v1h-2zM148 758h1v2h-1zM144 756h2v1h-2zM130 753h2v1h-2zM135 746h2v1h-2zM126 745h2v3h-2zM121 747h2v1h-2zM138 756h2v1h-2zM148 756h2v1h-2zM122 756h1v1h-1zM128 757h2v2h-2zM116 754h1v2h-1zM126 755h1v2h-1zM139 756h1v3h-1zM119 749h2v2h-2zM130 743h2v3h-2zM128 755h4v2h-4zM137 753h2v2h-2zM149 755h1v1h-1zM117 756h3v1h-3zM132 757h2v2h-2zM123 744h1v1h-1zM146 750h1v1h-1zM122 755h1v2h-1zM136 754h2v2h-2zM132 746h2v2h-2zM124 749h2v1h-2zM135 755h2v1h-2zM124 746h1v2h-1zM146 754h4v2h-4zM145 752h2v1h-2zM147 755h3v1h-3zM129 748h2v3h-2zM133 747h1v2h-1zM144 750h1v2h-1zM131 752h4v1h-4zM136 746h4v2h-4zM118 752h4v1h-4zM124 743h2v1h-2zM118 755h4v3h-4zM119 750h4v1h-4zM142 751h2v2h-2zM135 743h3v2h-3zM137 746h1v3h-1zM129 744h1v3h-1zM148 750h1v2h-1zM125 746h2v2h-2zM123 752h4v2h-4zM127 750h3v1h-3zM142 754h2v1h-2zM123 743h1v2h-1zM135 756h4v2h-4zM126 748h1v1h-1zM132 744h3v3h-3zM147 756h1v2h-1zM128 749h2v2h-2zM124 744h1v3h-1zM120 752h3v1h-3zM141 749h2v3h-2zM142 754h1v2h-1zM133 756h2v1h-2zM139 748h3v1h-3zM139 753h1v1h-1zM128 742h3v2h-3zM139 757h3v2h-3zM126 743h1v2h-1zM141 755h4v2h-4z" fill="#000"/><path d="M137 749h4v3h-4zM143 752h2v3h-2zM138 746h2v3h-2zM132 752h3v3h-3zM135 751h2v3h-2zM149 757h2v2h-2zM140 748h4v2h-4zM141 753h1v1h-1zM132 756h3v3h-3zM122 745h3v1h-3zM137 750h4v3h-4zM130 751h1v2h-1zM121 755h3v2h-3zM119 756h2v3h-2zM124 752h2v3h-2zM134 751h3v2h-3zM145 752h2v1h-2zM136 753h2v1h-2zM132 754h1v1h-1zM142 753h3v1h-3zM121 745h1v1h-1zM118 752h3v1h-3zM123 752h1v2h-1zM128 746h2v1h-2zM141 752h4v2h-4zM134 755h3v1h-3zM123 750h1v2h-1zM149 757h4v1h-4zM137 756h2v2h-2zM117 751h2v1h-2zM139 748h1v1h-1z" fill="#5d4f4a"/>
<path d="M793 574h2v1h-2zM805 642h3v2h-3zM801 561h2v1h-2zM804 607h2v3h-2zM802 624h1v2h-1zM799 623h2v3h-2zM800 628h1v2h-1zM801 646h1v3h-1zM805 642h2v1h-2zM797 643h1v1h-1zM800 628h2v2h-2zM802 601h2v2h-2zM793 637h2v1h-2zM798 612h3v1h-3zM793 590h1v1h-1zM806 640h3v3h-3zM798 639h3v2h-3zM794 593h2v3h-2zM799 640h2v3h-2zM802 560h2v2h-2zM801 604h2v3h-2zM791 646h2v2h-2zM801 598h2v2h-2zM801 644h2v3h-2zM793 631h1v2h-1zM792 646h1v1h-1zM803 561h1v2h-1zM795 635h4v1h-4zM804 638h2v1h-2zM797 646h2v2h-2zM805 586h2v1h-2zM801 624h1v2h-1zM796 628h1v2h-1zM798 616h2v1h-2zM802 642h4v2h-4zM799 610h2v3h-2zM805 654h2v1h-2zM803 647h1v3h-1zM796 618h4v1h-4zM802 606h2v1h-2zM800 597h3v3h-3zM795 580h4v2h-4zM802 622h3v3h-3zM790 617h3v1h-3zM789 618h1v2h-1zM801 628h1v3h-1zM797 623h4v2h-4zM798 594h1v1h-1zM805 573h1v1h-1zM792 598h4v2h-4zM802 606h2v3h-2zM799 597h2v3h-2zM803 638h1v1h-1zM791 618h1v2h-1zM797 569h2v3h-2zM800 602h3v3h-3zM790 643h4v2h-4zM804 652h1v2h-1zM801 581h4v1h-4zM799 589h3v1h-3zM795 576h4v1h-4zM796 608h1v2h-1zM795 613h1v1h-1zM802 598h3v3h-3zM795 640h2v3h-2zM802 628h4v2h-4zM795 629h2v2h-2zM800 612h1v2h-1zM806 603h3v2h-3zM802 582h2v2h-2zM802 622h2v3h-2zM797 608h3v2h-3zM805 601h1v1h-1zM801 568h3v1h-3zM804 618h4v2h-4zM802 596h3v1h-3zM798 648h3v1h-3zM788 618h1v3h-1z" fill="#00466c"/><path d="M794 607h2v1h-2zM795 625h4v1h-4zM802 654h1v3h-1zM800 563h4v2h-4zM806 637h2v1h-2zM799 653h1v2h-1zM791 575h2v2h-2zM797 625h2v2h-2zM799 650h4v1h-4zM805 635h4v2h-4zM791 617h1v1h-1zM796 632h1v1h-1zM800 651h1v1h-1zM792 605h2v1h-2zM794 609h2v2h-2zM803 645h2v1h-2zM801 584h1v3h-1zM795 573h4v1h-4zM801 591h2v1h-2zM797 612h2v2h-2zM799 598h4v3h-4zM800 582h4v3h-4zM802 655h2v2h-2zM801 577h1v2h-1zM802 654h1v3h-1zM802 636h2v1h-2zM800 600h3v2h-3zM798 595h2v1h-2zM793 641h2v2h-2zM804 565h4v3h-4zM793 611h1v1h-1zM790 647h3v2h-3zM795 643h3v3h-3zM798 568h2v1h-2zM798 639h4v1h-4zM799 589h4v2h-4zM805 651h1v2h-1zM794 618h1v1h-1zM799 639h3v1h-3zM798 597h1v2h-1zM793 605h1v2h-1zM803 584h4v2h-4zM801 584h1v2h-1zM804 641h4v2h-4zM803 572h1v2h-1zM799 584h3v1h-3zM801 655h2v2h-2zM800 593h2v1h-2zM799 569h2v3h-2zM790 649h1v1h-1zM797 580h2v1h-2zM802 638h3v2h-3zM802 565h1v1h-1zM793 615h4v2h-4zM797 583h4v1h-4zM795 608h1v2h-1zM805 640h4v1h-4zM790 614h3v2h-3zM797 570h1v2h-1zM802 567h3v1h-3zM791 613h2v2h-2zM805 650h2v2h-2zM797 604h1v2h-1zM801 585h4v2h-4zM792 612h2v3h-2zM796 575h4v3h-4zM794 643h1v2h-1zM799 623h2v2h-2zM805 591h1v2h-1zM796 644h2v2h-2zM794 586h1v1h-1zM804 642h1v3h-1zM801 608h1v2h-1zM801 625h2v3h-2zM797 634h1v3h-1zM793 579h3v2h-3zM802 571h1v1h-1zM801 623h1v1h-1zM797 578h2v1h-2zM803 611h1v1h-1zM806 618h2v2h-2zM797 625h3v2h-3zM802 566h1v3h-1zM801 565h1v1h-1zM799 622h2v2h-2zM806 610h2v2h-2zM795 585h4v3h-4zM799 597h2v2h-2zM800 576h2v1h-2zM794 632h1v2h-1zM797 617h2v2h-2zM803 648h1v3h-1zM801 628h1v3h-1zM795 573h4v1h-4zM801 567h1v2h-1zM805 574h1v1h-1zM802 567h4v2h-4zM806 592h2v1h-2zM800 614h3v3h-3zM795 587h1v1h-1zM798 596h4v2h-4zM804 603h1v2h-1zM801 620h1v3h-1zM803 622h1v2h-1zM806 644h4v1h-4zM792 641h3v1h-3zM804 633h1v1h-1zM805 584h3v2h-3zM799 574h1v3h-1zM799 587h1v2h-1zM803 639h3v2h-3zM803 614h1v2h-1zM802 618h2v2h-2zM794 647h2v2h-2zM800 582h1v1h-1zM794 605h1v2h-1zM804 629h3v1h-3zM796 641h2v1h-2zM799 578h1v2h-1zM795 635h1v1h-1zM804 578h2v2h-2zM794 631h3v1h-3zM794 589h2v2h-2zM797 606h2v1h-2zM798 607h2v2h-2zM802 576h4v3h-4zM799 602h3v1h-3zM800 612h1v1h-1zM791 595h4v3h-4zM800 640h3v2h-3zM806 589h1v1h-1zM797 592h2v1h-2zM790 643h2v2h-2zM796 595h3v2h-3zM796 584h3v1h-3zM800 576h1v2h-1zM795 588h3v1h-3zM804 641h4v2h-4zM804 617h4v2h-4zM795 630h1v3h-1zM791 617h3v1h-3zM800 615h4v3h-4zM804 564h4v2h-4zM805 626h2v2h-2zM806 625h3v2h-3zM797 648h1v1h-1zM805 584h1v2h-1zM792 592h4v2h-4zM798 646h1v3h-1zM788 647h3v3h-3zM798 638h2v1h-2zM795 649h3v1h-3zM801 595h1v1h-1zM805 619h1v2h-1zM806 640h4v2h-4zM801 603h2v2h-2zM796 641h4v3h-4zM805 595h1v1h-1zM796 645h1v2h-1zM795 579h2v2h-2zM795 649h2v1h-2zM789 648h3v1h-3zM803 644h2v1h-2zM793 616h3v3h-3zM793 617h3v2h-3zM795 610h4v1h-4zM802 626h4v2h-4zM799 602h4v2h-4zM801 653h4v3h-4zM804 646h1v2h-1zM806 564h2v3h-2zM793 613h3v1h-3zM800 628h4v1h-4zM803 567h4v2h-4zM800 603h1v1h-1zM802 645h3v2h-3zM795 634h1v1h-1zM803 643h3v1h-3zM795 649h1v2h-1zM800 632h4v1h-4zM805 594h1v2h-1zM805 570h2v1h-2zM804 577h1v3h-1zM801 651h2v1h-2zM802 574h4v3h-4zM794 608h1v2h-1zM797 605h2v1h-2zM791 647h2v1h-2zM800 644h2v2h-2zM793 613h3v3h-3zM804 641h1v3h-1zM805 592h2v3h-2zM787 644h1v3h-1zM803 657h3v3h-3zM798 644h4v2h-4zM794 586h4v3h-4zM793 575h1v3h-1zM800 595h2v1h-2zM794 632h1v2h-1zM802 628h4v1h-4zM795 577h1v2h-1zM793 575h4v1h-4zM796 623h3v1h-3zM802 595h3v2h-3zM800 613h4v3h-4zM801 577h4v1h-4zM798 583h1v1h-1zM800 598h2v2h-2zM801 568h2v1h-2zM799 621h3v3h-3zM799 565h1v1h-1zM802 571h1v2h-1zM803 619h1v3h-1zM795 631h3v1h-3zM805 643h3v3h-3zM803 602h1v1h-1zM800 586h2v2h-2zM801 565h1v1h-1zM802 610h3v2h-3zM793 624h1v3h-1zM802 657h1v2h-1zM796 570h2v2h-2zM802 572h4v3h-4zM806 622h2v2h-2zM792 642h2v1h-2zM799 570h2v2h-2zM795 646h2v2h-2zM795 577h2v1h-2zM798 635h3v1h-3zM798 574h3v1h-3zM794 631h2v1h-2zM800 565h1v1h-1zM805 648h1v2h-1zM792 596h4v1h-4zM805 609h1v3h-1zM805 613h3v1h-3zM801 588h3v2h-3zM805 644h4v1h-4zM803 591h3v3h-3zM797 579h2v3h-2zM802 581h4v2h-4zM792 646h1v1h-1zM795 648h2v1h-2zM797 582h2v3h-2zM797 621h2v2h-2zM802 649h2v1h-2zM800 602h4v2h-4zM791 593h3v2h-3zM805 616h1v3h-1zM799 625h2v1h-2zM791 598h4v3h-4zM801 568h3v1h-3zM797 627h4v2h-4zM801 647h2v2h-2zM804 607h1v3h-1zM803 569h1v2h-1zM804 591h3v2h-3zM797 635h2v2h-2zM801 627h2v2h-2zM797 607h1v1h-1zM795 644h2v1h-2zM793 633h2v1h-2zM796 630h4v1h-4zM790 649h3v3h-3zM799 620h1v2h-1zM803 640h2v3h-2zM803 625h3v1h-3zM804 603h4v2h-4zM805 631h1v2h-1z" fill="#000"/><path d="M805 630h2v1h-2zM796 616h1v2h-1zM803 604h1v1h-1zM804 591h4v2h-4zM794 645h3v2h-3zM804 600h2v2h-2zM803 581h2v1h-2zM792 595h2v1h-2zM804 654h4v1h-4zM796 620h2v2h-2zM799 599h3v2h-3zM792 649h1v2h-1zM796 611h1v1h-1zM804 639h2v2h-2zM795 624h1v2h-1zM788 595h3v2h-3zM796 641h1v1h-1zM805 593h4v1h-4zM799 595h2v1h-2zM798 607h2v1h-2zM804 615h4v1h-4zM804 648h2v1h-2zM797 595h1v1h-1zM804 652h4v1h-4zM805 580h2v3h-2zM796 575h4v1h-4zM792 643h4v3h-4zM806 646h2v1h-2zM802 636h3v2h-3zM800 644h1v1h-1zM800 602h3v1h-3zM803 613h2v2h-2zM805 634h4v2h-4zM803 570h1v2h-1z" fill="#5d4f4a"/>
<path fill="none" stroke="#5d6061" stroke-width="1" d="M496 258L495 254L495 248M495 248L501 246L505 243L512 241M513 260L507 260L501 260L496 260M500 281L505 278L511 277M513 304L508 301L503 298M508 332L511 331M531 277L524 278L517 277L511 277M511 277L512 271L512 266L513 260M526 348L522 344L519 339L516 336L511 331M511 331L516 326M512 241L518 243L524 244M513 260L516 257L521 254L525 250M513 357L517 354L522 352L526 348M517 314L516 308L513 304M513 304L517 300L522 296L527 292L531 288L536 284M536 329L531 328L526 327L521 327L516 326M516 326L516 320L517 314M525 373L516 372M517 314L523 313L528 312L533 310L539 310L544 308L549 307M520 400L524 399M529 426L524 424M535 407L530 404L524 399M524 399L528 394L530 388L533 382M525 250L524 244M524 244L530 239M531 263L528 257L525 250M533 382L529 377L525 373M525 373L528 368L531 362L533 357L535 352M535 352L531 350L526 348M526 434L529 426M536 425L529 426M540 573L535 572L530 570M530 564L534 558L537 552L539 546M536 284L531 277M531 277L530 271L531 263M531 263L536 261L542 261L547 259L552 258M532 450L539 449L546 448M546 519L539 518L533 518M533 497L539 495L545 492M539 546L533 541M533 382L539 382L544 383M536 425L535 419L535 413L535 407M535 407L539 405L544 402L548 400M535 352L544 348M545 345L543 339L539 335L536 329M536 329L538 324L541 320L544 316L545 311L549 307M540 286L536 284M536 591L542 590M546 429L541 426L536 425M554 249L549 246L545 244L540 241L536 239M548 474L538 474M539 546L544 546L549 544L554 543M550 306L548 301L545 296L543 291L540 286M540 286L543 284L548 280L553 277L557 274M542 590L542 585L541 579L540 573M540 573L546 572L552 570L558 569M541 603L544 595M544 595L542 590M561 369L558 365L554 361L551 356L548 353L544 348M544 348L545 345M548 400L548 394L546 388L544 383M544 383L548 380L554 377L556 375L562 372M544 595L550 595L557 594L563 593M548 616L544 613M545 345L549 341L554 337L559 334M552 504L548 498L545 492M545 492L547 488L548 482L549 477M551 455L546 448M546 448L547 441L546 435L546 429M555 542L553 536L550 531L549 525L546 519M546 519L550 515M546 429L551 426L556 423M549 477L548 474M548 474L549 468L549 462L551 455M548 620L548 616M556 423L555 417L552 412L550 406L548 400M548 400L554 399L561 398L568 398M548 616L553 615L558 614M564 480L556 478L549 477M561 310L555 309L550 306M574 516L568 517L561 515L557 515L550 515M550 515L550 509L552 504M551 455L556 453L562 453L566 452M552 504L557 501L564 499L569 497M558 271L555 264L552 258M552 258L554 249M554 249L561 246M558 569L557 563L557 558L557 554L555 548L554 543M555 542L561 540L566 539M572 422L567 422L561 423L556 423M574 286L570 283L566 280L562 276L557 274M557 274L558 271M558 271L562 268L567 266L572 262L576 259M565 573L558 569M563 617L558 614M558 614L559 609L561 604L562 598L563 593M561 246L559 239M576 343L570 340L564 337L559 334M559 334L560 328L560 322L560 315L561 310M572 245L567 245L561 246M561 369L564 365L569 361L571 357L574 354L578 349M567 376L562 372M563 593L566 590M590 317L585 315L580 313L574 312L569 310L563 309M563 309L566 304L568 300L570 295L571 290L574 286M564 621L563 617M563 617L568 616L574 613L579 612L584 611M569 497L567 490L566 485L564 480M564 480L570 476L575 474M566 590L566 585L566 578L565 573M565 573L574 569M583 601L579 598L574 595L570 593L566 590M583 546L578 543L572 541L566 539M566 539L568 533L571 528L572 523L574 516M579 461L574 458L570 456L566 452M566 452L568 447L570 443L572 437L573 432L575 427M567 376L572 376L579 377L586 379M568 398L568 393L567 388L567 382L567 376M576 410L573 404L568 398M572 499L569 497M576 259L573 252L572 245M572 245L576 239M575 427L572 422M572 422L574 416L576 410M576 515L574 510L572 504L572 499M572 499L578 496L584 494L590 490M574 286L579 283M596 586L592 583L587 580L583 576L578 573L574 569M574 569L577 567M590 434L585 432L581 429L575 427M590 490L586 486L583 482L579 478L575 474M575 474L580 465M578 349L576 343M576 343L578 337L582 332L584 326L587 322L590 317M590 518L583 517L576 515M576 410L582 408L586 403L593 400M577 567L579 562L580 556L581 551L583 546M577 567L581 566L587 565L592 566L597 566M578 260L583 260L588 261L592 261L598 261M579 283L579 278L579 271L578 267L578 260M591 352L584 350L578 349M580 465L579 461M579 461L583 457L587 452L590 448L594 442M588 285L579 283M597 469L592 467L585 467L580 465M584 611L583 606L583 601M583 601L587 596L592 592L596 586M583 546L587 544M588 615L584 611M593 400L591 396L590 389L587 385L586 379M603 549L597 547L592 546L587 544M587 544L588 539L588 534L589 528L590 524L590 518M588 377L588 372L590 365L592 360L594 354M617 376L611 376L606 377L600 376L593 377L588 377M588 622L588 615M588 615L592 614L599 612L604 612M590 317L590 311L590 306L588 301L590 295L589 291L588 285M588 285L592 283M605 493L600 492L595 491L590 490M590 518L595 516M594 442L590 434M590 434L598 428M594 354L591 352M591 352L592 346L594 341L596 336L598 329L599 324M610 289L603 288L598 284L592 283M592 283L594 278L595 272L597 266L598 261M602 402L593 400M599 324L593 317M593 317L600 311M612 356L606 354L600 354L594 354M605 449L599 445L594 442M601 259L598 254L596 249L595 244L594 239M615 532L611 528L608 526L603 523L600 520L595 516M595 516L598 511L600 505L603 500L606 494M600 586L596 586M606 481L601 475L597 469M597 469L599 465L600 460L602 454L605 449M601 574L597 566M597 566L598 560L602 554L603 549M598 428L599 424L600 418L599 413L601 408L602 402M617 425L610 426L604 428L598 428M598 261L601 259M619 335L614 332L608 329L604 327L599 324M613 592L607 588L600 586M600 586L601 580L601 574M600 311L602 305L604 300L607 295L610 289M600 311L604 311L610 311L616 310L620 310L626 310M610 260L601 259M601 574L605 570L611 567L616 564L621 561M602 402L609 401M603 549L609 548L613 547M613 624L608 618L604 612M604 612L607 605L611 600M605 449L611 450M605 493L605 488L606 481M622 464L617 468L613 473L609 477L606 481M606 494L612 495L618 497M622 249L617 246L613 242L608 239M618 410L613 406L609 401M609 401L611 396L614 389L616 383L619 378M619 286L616 280L614 276L613 270L611 265L610 260M610 260L616 255L622 251M610 289L619 286M620 455L616 452L611 450M611 450L613 443L614 437L615 431L617 425M629 623L625 618L623 614L618 610L614 605L611 600M611 600L613 592M614 359L612 356M612 356L614 350L615 346L617 341L619 335M613 592L622 589M621 561L618 556L616 552L613 547M613 547L616 542M617 376L617 370L616 365L614 359M614 359L620 359L626 357L631 356L638 356L644 356L648 354M616 542L615 532M615 532L620 527L624 522M616 542L621 541L626 541L632 541L637 540L642 539M617 425L621 422M621 422L619 415L618 410M618 410L623 408L628 406L633 403L638 401M624 522L622 518L622 513L620 507L620 503L618 497M618 497L622 496M630 380L625 379L619 378M624 288L619 286M625 332L619 335M622 464L620 455M620 455L625 451L630 448L634 445M633 572L629 569L625 565L621 561M626 425L621 422M645 264L641 261L635 259L631 256L626 254L622 251M622 249L623 244L625 239M640 476L636 473L631 469L626 467L622 464M646 509L642 506L637 504L633 502L627 498L622 496M622 496L626 493L630 489L633 485L636 481L640 476M635 615L632 610L630 604L628 599L625 594L622 589M622 589L627 584L632 579M643 521L637 521L630 522L624 522M627 307L627 302L626 298L625 292L624 288M624 288L630 285L636 282L642 279M631 334L625 332M625 332L624 327L626 320L627 315L626 310M625 624L629 623M634 445L632 439L631 435L628 429L626 425M626 425L632 423L638 422L644 419M645 310L639 310L633 308L627 307M629 623L634 623M638 387L634 384L630 380M630 380L634 376L638 372L640 368L644 364L646 360L650 356M642 338L637 336L631 334M631 334L634 329L636 324L639 320L643 314L645 310M653 598L650 594L645 590L640 586L636 582L632 579M632 579L633 572M633 572L639 569L644 566L650 562M634 623L635 615M652 447L646 446L640 445L634 445M653 598L649 602L644 606L639 611L635 615M644 408L638 401M638 401L637 394L638 387M648 386L638 387M640 476L647 476M650 287L646 284L642 279M642 279L643 274L643 269L645 264M648 354L646 349L643 343L642 338M642 338L646 334L651 330L655 326M652 551L648 547L645 544L642 539M642 539L643 534L643 528L643 521M643 521L648 515M656 429L651 425L647 422L644 419M644 419L644 414L644 408M644 408L650 406L655 404L661 402M645 264L649 260M645 310L651 309M648 515L646 509M646 509L649 503L650 498L652 493L654 487L657 483M657 483L652 480L647 476M647 476L649 470L649 465L650 459L651 453L652 448M661 402L658 397L654 394L651 390L648 386M648 386L651 383L656 380L660 376M649 260L649 255L649 249L649 244L648 239M664 519L658 518L654 516L648 515M662 259L655 260L649 260M667 573L662 570L658 568L654 565L650 562M650 562L651 556L652 551M658 359L650 356M650 287L656 287L661 287L666 287L671 288M651 309L650 304L650 299L651 292L650 287M656 314L651 309M652 447L653 441L654 435L656 429M652 551L656 548L661 545L665 542L670 539M652 626L656 622L660 618L665 613M670 452L663 450L657 450L652 448M658 598L653 598M671 335L666 332L660 329L655 326M655 326L656 320L656 314M666 423L661 427L656 429M656 314L660 312L665 311L671 309L676 308M657 483L662 483M665 613L662 609L659 603L658 598M658 598L662 594M660 376L660 370L659 364L658 359M658 359L663 357L668 355L673 353M676 389L672 386L668 382L664 379L660 376M661 402L669 403M676 508L673 504L670 497L667 494L664 488L662 483M662 483L668 480L674 477M687 594L682 594L678 594L672 594L666 593L662 594M662 594L663 588L664 584L666 577L667 573M670 539L668 534L667 529L666 523L664 519M664 519L670 515L675 510M674 616L665 613M685 432L681 430L675 428L670 426L666 423M666 423L668 418L668 413L668 408L669 403M667 573L673 572L679 571M668 250L668 244L669 238M669 403L676 398M674 477L674 472L673 467L671 462L671 456L670 452M670 452L676 449L683 445M676 541L670 539M673 353L672 348L671 340L671 335M671 335L674 331L678 328L682 323M675 283L672 279L671 273M676 308L675 302L674 298L672 292L671 288M671 288L675 283M681 355L673 353M677 628L675 622L674 616M674 616L678 612L684 610L689 606M681 477L674 477M689 522L684 518L680 513L675 510M675 283L681 282M676 508L680 505L685 502M687 550L682 546L676 541M676 541L680 536L682 531L687 526L689 522M681 311L676 308M688 404L681 401L676 398M676 398L676 389M676 389L679 386L683 381L686 378M690 586L686 581L682 576L679 571M679 571L683 563M682 323L682 317L681 311M681 311L686 309L692 307L697 305L703 303M686 378L686 372L684 366L682 360L681 355M681 355L687 352L692 351L697 349M693 492L690 487L686 482L681 477M681 477L686 473L689 468L692 465L697 460M696 334L692 330L687 328L682 323M697 460L694 457L690 452L686 449L683 445M683 445L683 439L685 432M708 571L702 569L699 567L694 567L687 564L683 563M683 563L686 557L687 550M706 522L702 519L698 515L693 509L689 506L685 502M685 502L688 497L693 492M685 432L691 428M711 380L706 380L702 378L696 379L691 378L686 378M687 550L691 549L698 546L703 546M689 606L688 600L687 594M687 594L690 586M691 428L691 422L689 415L689 410L688 404M688 404L693 402L699 401L704 400M705 614L699 612L695 608L689 606M705 522L699 522L695 522L689 522M690 586L696 584L702 583M703 303L699 299L696 294L693 288L690 284M710 428L703 428L697 428L691 428M706 493L700 492L693 492M696 334L700 329L702 323L706 318L708 313M697 349L697 342L696 335M696 335L702 333L708 333L713 331L719 330M700 350L697 349M697 460L701 460M698 629L702 624L706 620M712 379L710 375L708 370L706 365L704 360L703 355L700 350M712 347L706 349L700 350M706 477L704 471L702 466L701 460M701 460L707 457L710 455M706 586L702 583M702 583L704 577L708 571M708 549L703 546M703 546L704 540L704 534L705 528L705 522M712 411L708 405L704 400M704 400L706 395L708 390L710 385L711 380M706 620L705 614M705 614L709 610M706 522L709 519M706 586L711 587L716 588L721 589L725 590L731 591M709 610L709 604L707 599L707 592L706 586M718 630L714 627L709 623L706 620M712 498L706 493M706 493L706 488L706 483L706 477M706 477L712 476L716 474L722 473L726 471L731 471M708 571L712 567L716 563M716 563L714 558L710 554L708 549M708 549L712 546L717 545L722 541L725 540L730 537L734 534M709 610L714 608L719 604L724 602L729 600M732 527L726 524L720 523L714 521L709 519M709 519L710 514L710 508L712 502L712 498M713 432L710 428M710 428L711 423L712 417L712 411M728 462L722 459L717 458L710 455M710 455L711 449L712 444L713 438L713 432M733 358L728 355L722 353L718 350L712 347M712 347L714 342L718 336L721 332M727 406L721 408L717 409L712 411M712 379L717 378L723 378M712 498L721 494M713 432L718 431L723 431L729 432L734 431M731 591L729 587L726 582L724 578L722 573L720 569L718 564M718 630L724 628L728 627L732 624M748 573L744 572L738 570L733 568L729 567L724 565L719 563M719 563L724 560L728 556L734 554L739 551L743 548M740 504L735 502L731 500L726 497L721 494M721 494L724 489L726 484L730 478L732 472M726 382L723 378M723 378L725 374L728 368L730 364L733 358M726 382L731 383L736 385L741 386L746 388M727 406L727 399L727 394L726 388L726 382M737 413L731 409L727 406M731 471L728 462M728 462L731 458L734 454L736 449L740 445M735 620L733 615L732 610L730 604L729 600M729 600L732 593M733 358L732 351L731 345L730 339M734 534L732 527M732 527L735 522L739 517L742 512M732 472L737 474L743 474L748 476L754 477M732 593L739 591M738 632L732 624M732 624L735 620M745 356L740 358L733 358M740 445L738 441L736 435L734 431M734 431L739 422M743 543L739 538L734 534M735 620L741 619L748 618M739 422L738 418L737 413M737 413L740 408L744 402L748 398M753 422L747 422L739 422M755 607L751 603L747 600L744 595L739 591M739 591L745 586L748 581M756 449L751 448L745 447L740 445M742 512L740 504M740 504L745 501L748 496L752 492L757 488M765 521L760 520L754 516L748 513L742 512M743 548L743 543M743 543L747 539L753 535L758 532L762 528L766 525M753 559L749 553L743 548M748 644L745 641M748 398L748 394L746 388M746 388L751 385M760 406L754 403L748 398M756 639L755 634L752 628L750 623L748 618M748 618L752 612L755 607M753 643L748 644M770 586L765 584L759 583L753 581L748 581M748 581L748 573M748 573L750 566L753 559M770 387L764 387L758 385L751 385M751 385L751 380L753 375L753 369L754 365M758 649L753 643M753 643L756 639M767 432L763 429L758 426L753 422M753 422L756 417L758 411L760 406M756 479L754 477M754 477L755 471L755 466L755 460L756 454L756 449M772 567L767 564L760 562L755 559M755 559L759 556L764 551L768 548L772 544L777 541L781 537M755 607L763 608L770 609M757 488L756 479M756 479L762 478L766 475L771 474L776 472L781 471M756 449L763 446M756 639L760 637M769 500L764 496L760 492L757 488M760 406L765 405L771 405L775 403M776 455L771 452L767 449L763 446M763 446L765 439L767 432M766 525L765 521M765 521L766 516L767 510L768 505L769 500M780 532L773 529L766 525M767 432L773 429L778 426L783 423M790 497L784 497L779 499L774 499L769 500M773 612L770 609M770 609L769 602L770 598L770 591L770 586M770 586L773 583M773 583L772 579L773 572L772 567M772 567L781 562M773 612L780 612L785 610L791 611L797 610M792 584L786 583L779 583L773 583M775 403L775 397L774 393M781 471L778 465L778 460L776 455M776 455L782 452L786 447L791 443M783 423L780 416L779 411L777 405M777 405L781 404M781 537L780 532M780 532L784 529L787 524L790 519M789 474L781 471M781 562L785 565L789 568L793 572M781 562L782 556L784 552L785 547L786 542M786 542L781 537M787 425L783 423M786 542L792 544L799 545M791 443L790 437L788 431L787 425M787 425L793 424L800 422M790 497L790 492L790 486L790 480L789 474M789 474L793 473M790 519L790 513L790 508L790 503L790 497M808 499L802 499L795 497L790 497M808 520L802 520L795 519L790 519M796 447L791 443M800 593L796 589L792 584M792 584L792 577L793 572M793 473L793 468L794 463L795 457L794 452L796 447M808 471L802 471L798 472L793 473M793 572L797 567L804 562M796 447L802 448L808 448M797 617L797 610M808 612L798 609M798 609L798 603L799 599L800 593M804 562L802 557L800 551L799 545M799 545L806 542M800 593L808 588M808 565L804 562M806 542L808 534M307 250L312 250L317 249L323 250L329 250L334 250M334 248L339 248L344 248L350 248L354 248L360 248L365 248M365 251L370 251L375 251L380 251L386 251L390 251L396 251M396 249L401 250L407 250L412 250L417 249L423 249L428 249M428 248L433 247L438 248L443 247L448 248L454 248L458 247L464 248L469 248M469 249L474 250L479 250L484 250L489 250L494 249M336 238L337 244L336 250M365 238L365 244L365 251M396 238L395 244L396 251M430 238L430 244L430 249M467 238L467 244L467 249M302 293L308 293L313 293L318 293L324 293L329 293L334 293L340 293L346 293M346 287L352 287L357 288L364 286L369 288L375 287M375 294L380 294L385 294L390 294L395 294L400 294L405 294L411 294L416 294L421 294M421 288L426 288L432 288L438 288L444 288L449 288L454 288L460 289L466 288M466 288L470 289L477 289L484 288L487 288L494 289L499 288M346 248L346 254L346 260L346 265L346 271L346 276L347 282L347 288L347 293M375 251L375 256L375 262L375 267L375 272L371 272L371 278L370 283L370 288L371 294M421 249L421 255L421 260L420 266L421 271L420 277L420 283L420 288L420 294M466 248L466 253L466 258L466 263L466 268L466 273L466 278L466 284L466 288M500 282L500 288M298 329L304 329L310 329L315 329L321 329L326 329L332 329L337 329M337 322L343 322L348 322L353 322L358 322L363 322L369 322L373 322L379 322M379 325L384 325L389 325L394 325L400 325L405 325L409 324L414 325M414 325L420 325L425 326L430 325L435 325L440 325L444 325L450 326L455 325M455 324L460 324L465 324L470 324L476 324L481 324L486 324M486 326L491 326L497 326L502 326L508 326M337 293L337 299L337 305L337 311L334 311L334 317L334 323L334 329M379 294L379 299L378 304L378 309L378 314L377 320L377 325M414 294L415 299L414 304L414 309L414 315L414 320L414 325M455 288L454 294L454 299L454 304L454 310L453 314L453 320L453 325M486 288L486 293L487 299L486 305L487 310L486 316L487 321L486 326M294 367L299 367L305 368L312 367L318 367M318 368L323 367L330 368L336 369L340 368L347 368M347 372L352 372L359 372L362 372L367 372L374 372M374 367L379 366L385 367L390 367L396 367L401 366L407 366L413 367M413 366L418 366L423 366L428 366L434 366L438 366L444 366L449 366L454 366M454 370L459 370L464 370L469 370L475 370L480 370L485 370L490 370L496 370L501 370M501 367L509 366L515 367M318 329L318 336L318 342L318 349L321 349L321 355L321 362L321 368M347 322L346 327L346 332L347 337L346 342L347 347L351 347L351 352L352 357L351 362L352 367L351 372M374 322L374 327L374 332L374 337L374 342L374 347L374 352L374 357L374 362L374 367L374 372M413 325L414 330L412 336L412 340L412 345L412 351L413 356L413 362L413 367M454 325L454 329L455 337L454 343L455 349L455 353L455 358L455 363L454 370M501 326L501 332L501 337L501 342L501 348L503 348L503 354L503 359L503 365L503 370M291 399L294 399M294 398L300 398L306 398L311 399L317 398L323 398M323 395L329 396L334 395L337 394L343 395L348 396L353 395L359 395L364 395L370 395M370 396L375 396L381 396L386 396L391 396L397 396L402 396L408 396L413 396M413 399L418 399L424 399L428 399L434 399L439 399L443 399L449 399L454 399L459 399M459 397L464 397L469 397L474 397L479 397L484 397L489 397M489 397L494 397L499 397L505 397L510 397L515 397L520 397M294 371L294 377L294 383L294 383L294 388L294 393L294 399M323 368L322 374L323 382L322 385L324 394L323 398M370 372L370 378L370 384L364 384L365 390L364 396M413 366L413 373L412 376L414 383L413 388L414 393L413 399M459 370L459 376L458 381L460 388L460 395L459 399M489 370L489 376L490 380L488 387L489 392L489 397M289 426L296 426M296 426L302 426L307 426L312 426L318 426L324 426L329 426M329 429L334 429L339 429L345 429L351 429L356 429L361 429L367 429M367 427L372 427L378 428L384 427L389 428L395 428L400 427L406 427L412 427M412 426L417 426L422 426L427 426L433 426L437 426L443 426L448 426L453 426L458 426M458 426L464 427L469 426L475 426L480 427L486 426L491 426L496 426M496 428L502 428L508 429L514 428L519 429L525 428M296 398L296 404L298 411L296 416L296 422L296 426M329 395L329 402L328 407L329 413L327 419L330 423L329 429M367 395L367 401L367 407L367 412L367 418L367 423L367 429M412 396L411 403L412 407L412 413L411 418L409 424L410 427M458 399L459 405L459 410L460 415L460 421L461 426M496 397L495 402L496 407L495 413L495 419L495 424L496 428M282 473L288 473L293 474L299 474L304 473M304 473L310 473L316 473L321 473L326 473L332 473L337 473L343 473M343 468L349 468L355 468L360 468L366 468L372 468L378 468M378 467L382 468L389 467L392 466L399 468L404 466L409 466L413 467L418 467L424 467M424 470L429 470L435 470L440 470L446 469L452 470L457 470L463 470M463 472L468 472L474 472L479 473L485 472L490 472L496 473L502 472M502 468L508 468L513 467L518 469L522 468L528 467L533 469L540 468M304 426L305 431L305 437L304 442L304 448L304 452L304 458L304 463L304 468L304 473M343 429L342 434L344 439L343 446L342 452L344 456L343 461L343 468L343 473M378 427L378 432L378 438L378 442L378 448L378 453L378 458L378 463L378 468M424 426L424 431L423 437L424 442L424 448L424 454L423 459L424 465L424 470M463 426L462 431L462 437L462 442L462 447L462 452L461 457L462 462L461 467L461 472M502 428L502 434L502 440L502 445L502 450L502 456L502 462L502 467L502 472M280 504L286 503L292 503L298 505L302 504L307 504L314 504M314 499L320 499L324 499L330 499L336 499L341 499L346 499M346 500L352 499L357 500L363 500L368 499L374 500L379 500M379 498L384 498L390 498L395 498L400 499L406 498L411 499L417 498M417 505L422 505L428 505L433 505L438 505L443 505L448 505L454 505L459 505M459 504L464 504L470 504L476 504L482 504L488 504L494 504M494 498L499 498L504 498L509 498L515 498L520 498L526 498L531 498M531 501L533 501M314 473L314 478L314 483L314 488L310 488L310 493L310 498L310 504M346 468L346 473L346 479L346 484L347 484L347 489L347 494L347 500M379 467L379 473L379 478L379 483L378 489L379 494L379 500M417 467L417 473L417 478L417 484L417 488L417 494L417 499L417 505M459 470L459 475L459 480L458 485L459 490L459 494L458 500L459 505M494 472L494 478L494 483L494 488L494 494L494 498L494 504M531 468L530 474L530 479L530 485L531 490L531 496L531 501M280 538L286 538M286 537L291 537L297 537L302 537L307 537L312 537L317 537L322 538L328 537M328 540L334 540L338 540L344 540L350 539L355 540M355 540L360 540L366 540L371 540L376 540L382 540M382 540L388 539L394 539L400 540L406 540L412 540M412 543L417 543L422 543L427 543L432 543L437 543L442 543L447 543L452 543M452 541L458 540L462 541L467 542L473 541L479 542L483 542L489 540L494 541M494 543L498 543L504 543L509 543L514 542L519 543L523 543L529 543L534 543M286 504L286 509L286 516L286 520L286 527L286 532L286 538M328 499L328 504L327 509L327 514L328 519L328 524L327 529L328 535L328 540M355 500L355 505L356 510L356 515L356 520L357 525L357 529L358 535L358 540M382 498L382 504L382 509L381 514L382 519L382 524L381 530L381 535L381 540M412 498L412 504L412 509L413 515L412 520L412 526L412 532L412 537L413 543M452 505L452 511L452 515L452 521L452 527L452 532L452 538L452 543M494 504L494 511L493 516L494 519L494 526L493 532L494 539L494 543M281 568L286 568L292 568L298 569L303 568L309 568M309 572L314 572L320 572L326 572L330 572L336 572L342 572L348 572M348 568L353 568L360 567L365 569L370 568L373 568L379 569L385 566L391 568M391 566L396 565L401 566L406 566L413 566L417 565L423 566L429 565L435 566M435 572L440 572L446 572L452 572L457 572L463 572M463 566L469 566L474 566L480 566L485 566L491 566M491 571L497 571L502 571L507 571L513 571L519 571L524 571L530 571M309 537L309 543L309 549L309 555L309 560L309 566L310 572M348 540L347 545L347 550L349 555L349 560L349 566L348 572M391 540L390 546L391 554L390 554L390 560L390 568M435 543L435 548L434 554L434 560L435 566L435 572M463 541L463 546L464 551L464 557L464 562L463 567L463 572M491 541L491 547L491 553L491 559L491 565L491 571M283 604L289 604L294 604L300 604L306 604L311 604M311 602L317 602L322 602L327 602L332 602L337 601L343 602M311 572L311 577L311 582L311 588L311 588L311 593L312 598L311 604M352 568L352 573L351 578L351 584L350 589L350 595M391 566L391 571L391 578L391 583L391 589L391 595M427 566L428 571L428 577L427 583L427 589L427 595M475 566L476 572L475 578L476 583L476 589L477 595M521 571L520 576L521 582L522 588L521 595M285 633L291 633L298 632L303 632L308 633M318 633L325 633L331 633M331 633L336 633L342 633L347 633L352 634L358 633M284 604L286 610L283 616L284 621M331 602L332 607L332 612L332 618L333 623L333 628L333 633M293 633L292 640L293 647L293 647L293 651M319 633L319 636M124 271L129 272L135 271L141 272L147 271M147 270L152 271L158 270L164 270L169 271L175 270L180 270M180 270L186 269L192 270L198 270L204 270M204 268L210 268L216 268L221 268L226 268L232 268L238 268M238 269L243 269L250 269L255 269L261 269L267 269L272 269M272 267L278 267L283 266L289 267L294 267L300 267L305 267M147 238L146 243L146 251L147 255L147 260L147 266L147 271M180 238L180 243L182 250L180 255L179 259L179 266L180 270M204 238L205 244L206 248L205 253L205 259L206 265L204 270M238 238L238 243L238 249L237 254L238 258L238 264L238 269M272 238L272 243L272 249L273 254L272 259L272 264L272 269M305 245L305 251L305 258L305 264M109 299L118 299M118 297L123 298L129 297L135 297L140 297L146 297L152 297L157 297M157 296L162 296L167 296L172 296L178 296L183 296L188 296M188 298L194 299L199 298L203 300L210 297L216 298M216 296L221 296L226 297L231 296L236 296L242 296L247 297L252 296M252 296L257 296L262 296L267 296L272 296L277 296L282 296L288 296L292 296M292 296L302 296M115 297L115 299M157 270L156 275L159 280L157 286L157 290L158 297M188 270L188 276L188 281L188 287L188 292L188 298M216 268L216 274L216 281L215 286L216 293L216 298M252 269L251 275L253 279L253 284L251 292L252 296M292 267L292 273L292 279L291 284L291 290L291 296M87 340L92 340L98 340L103 340L108 340L113 340M113 333L119 333L124 333L130 333L135 333L141 333M141 336L147 336L152 336L156 336L162 336L167 336M167 337L173 337L179 336L184 336L190 337M190 337L196 337L202 337L208 337L213 337L219 337L225 337M225 336L230 336L236 336L242 336L247 336L253 336M253 334L259 334L264 334L270 335L275 334L281 335L287 334M287 340L292 340L297 340M113 299L113 305L113 309L113 314L112 319L112 325L112 330L111 334L111 340M141 297L142 303L142 308L141 314L141 320L142 325L141 331L141 336M167 296L168 301L168 306L168 311L168 317L168 322L168 326L168 332L168 337M190 298L190 305L189 310L190 314L190 320L190 326L190 331L190 337M225 296L224 301L224 306L224 313L224 318L225 321L225 328L224 332L225 337M253 296L253 302L253 308L253 313L253 319L253 325L253 331L253 336M287 296L287 302L286 307L287 313L287 318L287 323L287 328L287 334L287 340M76 369L82 368L86 368L91 370L96 368L102 369M102 363L107 363L112 363L117 364L122 363L128 363L132 363L138 363L142 363M142 362L147 361L155 362L160 361L165 363L170 362L176 362L182 362M182 363L187 364L193 363L196 363L202 362L206 364L212 363L216 363M216 363L222 364L228 364L233 364L239 363L245 363M245 367L251 367L257 367L264 367L270 367M270 368L276 368L282 368L288 368L294 368M102 340L103 346L102 352L103 357L102 363L102 369M142 336L142 341L143 347L143 352L143 358L142 363M182 337L181 344L182 350L181 350L181 356L181 363M216 337L217 342L217 348L218 353L218 358L219 363M245 336L245 342L244 346L245 352L244 357L244 362L244 367M270 334L270 340L270 346L270 351L270 357L270 362L270 368M85 393L90 393L95 393L100 393L105 393L111 393M111 392L116 392L122 391L126 392L132 391L138 391L143 391L148 392M148 391L154 391L160 391L166 391L172 391M172 394L177 393L183 394L188 393L194 394L199 392L205 394M205 396L210 396L215 396L220 395L225 396L230 396L235 396M235 390L241 390L244 392L249 391L255 389L261 391L264 389L270 391L275 390M275 391L280 392L286 390L292 391M111 363L110 370L111 378L117 378L117 386L117 393M148 362L148 368L149 374L148 380L148 386L148 392M172 362L172 367L173 373L172 378L172 383L172 388L172 394M205 363L204 369L204 373L205 378L206 385L205 390L206 396M235 363L235 369L235 374L235 380L235 385L235 390L235 396M275 368L275 374L275 380L275 385L275 391M85 429L90 429L95 429L100 429L106 429L111 429L116 429M116 429L120 429L126 430L132 430L137 429L140 429L146 431L150 431L156 429M156 422L161 423L167 423L172 423L177 423L183 422M183 428L188 428L195 427L200 429L204 427L210 428M210 424L216 424L221 425L226 425L231 424L236 424L242 424L246 424M246 429L252 430L257 429L263 429L268 430L273 429L278 429M278 425L284 425L289 425M116 392L114 396L116 401L115 408L116 413L115 419L117 423L116 429M156 391L157 396L156 402L156 407L156 413L156 418L156 424L156 429M183 394L183 399L183 405L184 410L183 416L183 422L183 428M210 396L210 401L210 406L210 411L210 417L210 422L210 428M246 390L246 396L248 401L246 406L247 412L247 418L245 424L246 429M278 391L278 397L280 403L278 408L279 412L278 417L279 424L280 429M84 458L87 458M87 461L93 461L98 461L103 462L107 460L114 461L118 462L124 461M124 455L129 456L134 455L140 455L144 456L149 455L154 455L160 455L165 455M165 459L169 459L175 458L181 460L185 459L190 460L194 458L200 458L205 459M205 461L210 461L216 460L221 461L226 461L232 461L237 461M237 461L242 461L247 461L253 461L258 461L263 461L268 461M268 456L274 456L280 456L286 456M87 429L86 435L86 441M86 444L85 451M84 458L84 461M124 429L124 435L124 440L124 445L124 451L124 456L124 461M165 422L165 428L164 433L166 439L164 444L163 448L165 453L164 459M205 428L204 432L205 440L205 444L204 449L204 455L205 461M237 424L237 431L237 437L237 443L233 443L233 448L233 455L233 461M268 429L268 435L268 440L268 445L269 445L269 450L269 455L269 461M84 486L90 486M91 486L98 485L105 486L111 486M111 483L118 483L122 483L128 483L134 484L138 483L145 482L150 483M150 490L155 490L161 490L166 489L171 491L178 490L183 490L187 489L192 490M192 482L199 482L203 481L210 482L215 482L220 482M220 483L225 483L231 483L236 483L241 483L246 483L251 483L257 483M257 488L264 488L269 487L276 487L282 488M111 461L112 467L111 473L111 479L111 486M150 455L151 461L150 466L150 473L151 478L151 484L150 490M192 459L192 464L193 469L194 474L194 480L195 485L195 490M220 461L220 466L220 472L221 472L221 477L221 483M257 461L257 467L257 472L256 477L257 483L257 488M66 522L72 522L78 522L84 522L90 522M90 517L96 517L101 517L106 517L112 517L116 517L122 517L127 518L132 517M132 517L138 517L144 517L149 517L155 517L161 517M161 520L168 520L174 521L180 520L185 520M185 519L190 518L196 519L200 519L206 519L211 519L216 519L221 519M221 521L226 521L231 521L236 521L241 522L247 521L252 521L258 521L262 521M262 518L268 518L274 517L280 518M90 486L91 491L90 496L90 501L90 506L91 512L91 517L90 522M132 483L132 489L132 495L132 500L132 506L132 511L132 517M161 490L160 495L160 500L161 504L161 510L160 515L161 520M185 490L185 496L185 500L186 506L188 509L186 516L187 520M221 483L222 489L220 493L219 500L220 506L220 512L222 514L221 521M262 488L263 492L263 499L264 504L262 510L263 517L262 521M57 548L64 548L71 548M71 547L77 547L82 547L89 546L94 547M94 552L100 551L106 552L112 552L117 552L123 552M123 545L129 545L134 545L139 544L144 545L150 545L154 544L160 545M160 546L165 546L170 545L176 546L181 545L186 546M186 546L191 546L196 545L202 546L207 545L212 546L217 545L222 546L228 546M228 549L233 549L238 549L244 549L249 548L254 549M254 550L259 551L264 551L270 550L275 550L280 550M71 522L71 527L71 532L71 537L71 543L71 548M94 517L94 522L94 527L94 534L95 541L94 545L94 552M123 517L124 522L122 528L124 535L122 539L122 547L123 552M160 517L159 523L160 528L160 534L160 540L160 546M186 519L186 524L186 529L186 535L186 540L186 546M228 521L228 526L227 533L227 538L227 544L228 549M254 521L254 528L253 533L253 539L252 545L252 550M45 574L52 574M52 577L59 577L65 577L71 577L77 577M77 579L83 578L89 579L96 578L101 579M101 574L108 575L113 575L118 576L122 575L128 574L133 574M133 574L139 575L144 574L149 572L156 574L161 574M161 577L166 578L170 577L178 576L182 578L188 576L193 576L197 577M197 575L201 575L207 574L212 575L218 575L224 576L228 575L234 575M234 574L240 572L246 573L253 575L258 574M258 580L264 580L271 581L275 580L282 580M52 562L52 562L50 562M48 571L48 577M77 547L77 552L77 557L77 563L72 563L72 569L72 573L72 579M101 552L101 557L101 562L101 568L102 574L101 579M133 545L132 550L133 555L132 559L132 565L131 570L131 574M161 546L162 552L160 555L161 560L160 567L160 573L160 577M197 546L197 550L197 556L197 561L198 567L197 572L197 577M234 549L234 554L235 560L233 564L233 569L234 575M258 550L258 558L258 565L257 565L257 573L257 580M181 609L188 609M188 607L193 607L199 608L204 607L209 607L215 607L221 607L226 607M226 608L232 608L238 608L244 608L250 608L255 608M255 612L261 611L266 612L272 611L278 611L284 612M68 577L68 583L68 589L68 595M94 579L94 583L93 590L94 595M127 574L127 580L127 585L128 590L127 595M152 574L152 578L151 584L150 590L152 595M188 577L188 582L188 588L188 593L187 598L187 604L188 609M226 575L226 581L226 586L226 592L226 597L226 603L226 608M255 574L255 580L255 586L255 593L253 593L253 599L253 605L253 612M188 641L190 641M190 641L195 640L201 640L206 640L212 640L217 640L222 641M222 644L228 644L234 644L239 644L244 643L251 644L256 644L262 644M262 646L268 646L273 645L280 645L286 646M190 607L191 613L191 619L192 624L192 630L193 635L193 641M222 607L221 612L222 616L221 623L222 629L223 632L222 639L222 644M262 612L263 618L262 623L262 628L262 634L261 639L261 646M200 641L199 647L199 652L200 658L205 658L206 663L205 668M224 644L224 650L224 656M254 644L254 651M277 646L277 654M166 226L158 225M172 210L167 205L163 201M164 239L168 230M168 230L166 226M166 226L168 220L169 216L172 210M168 230L175 235L181 239M172 210L177 208L182 205L186 202L191 199M185 176L180 173L174 170M185 176L188 171L192 168L195 163L198 158L201 153L204 149M191 199L190 193L189 188L187 182L186 177M186 177L192 176L198 176L205 175L210 174M189 144L194 141M191 132L190 127M190 239L192 235L197 230L200 226L203 223M203 223L201 217L200 214L198 209L195 204L193 200M216 196L210 196L205 197L198 198L193 200M204 149L199 146L194 141M200 104L201 99M219 122L214 121L210 118L205 116L200 114M223 227L217 225L213 224L208 224L203 223M204 149L209 149L215 149M216 196L214 191L214 185L212 180L210 174M210 174L213 170L218 164L220 161L224 157M224 156L220 153L215 149M215 149L216 144L216 139L218 133L218 127L219 122M224 226L223 221L222 216L220 212L218 205L217 201L216 196M216 196L221 194L226 192L231 190L237 188L242 186M217 239L220 233L223 227M228 117L224 120L219 122M224 156L228 152L232 148L236 146L240 142L246 138M243 178L238 174L236 170L231 166L228 161L224 157M240 228L234 228L229 227L224 226M248 128L244 126L238 122L233 121L228 117M228 117L229 110L230 105M240 228L242 223L245 218L248 213L250 208L253 203M241 230L246 232L251 232L256 233L262 234L268 237L273 237M242 239L241 230M253 203L248 198L246 193L242 186M242 186L243 178M243 178L247 174L253 171M254 149L250 144L246 138M246 138L247 133L248 128M248 128L254 126L259 122M253 203L257 203L263 204L268 205M253 171L253 165L254 159L254 154L254 149M278 165L272 167L268 168L262 168L258 170L253 171M254 149L260 148L265 147L271 146L278 146M278 144L274 139L271 135L268 131L263 126L259 122M259 122L262 117L264 112M264 112L262 105M284 112L279 112L274 112L270 112L264 112M282 226L279 222L277 218L274 213L272 209L268 205M268 205L273 200L279 196M282 226L277 232L273 237M278 165L278 158L277 153L278 146M284 172L278 165M278 144L283 142L288 139L294 136L299 133M307 202L301 200L295 200L290 198L284 197L279 196M279 196L280 189L281 184L283 178L284 172M301 228L295 228L289 226L282 226M284 172L289 172L295 172L302 170L306 171M299 120L294 118L290 115L284 112M284 112L285 105M299 133L299 126L299 120M299 120L303 116M316 148L312 145L308 141L303 136L299 133M301 238L301 228M301 228L305 225M303 116L304 110L305 105M340 115L335 114L330 116L324 115L320 115L313 115L309 116L303 116M326 230L320 229L315 228L310 226L305 225M305 225L306 220L305 213L306 207L307 202M307 201L308 195L307 189L306 183L307 177L306 171M306 171L312 167M330 198L325 198L319 200L312 200L307 201M323 173L318 170L312 167M312 167L313 161L315 155L316 148M316 148L322 146L328 144M330 198L329 194L328 188L325 184L325 178L323 173M323 173L328 174L334 174L341 174L347 173M326 238L326 230M326 230L334 226M346 153L342 151L338 148L332 146L328 144M328 144L330 139L332 134L333 130L336 125L338 120L340 115M343 203L337 200L330 198M333 92L339 97L345 100M353 238L348 236L344 232L340 228L334 226M334 226L336 220L338 214L341 210L343 203M340 115L343 113M347 201L343 203M366 139L362 135L357 131L354 126L351 121L346 117L343 113M343 113L346 104M345 100L348 92M379 117L375 115L370 114L364 111L360 109L355 108L350 105L346 104M346 101L351 100L356 99L362 97L367 97L371 95L377 93M350 170L349 165L347 159L346 153M346 153L352 149L356 146L361 143L366 139M368 204L363 203L357 204L353 203L347 201M347 201L346 195L347 190L347 184L348 179L347 173M347 173L350 170M379 172L372 172L368 171L362 170L355 171L350 170M355 238L360 235L364 231L368 228L372 227L376 223M375 140L366 139M368 204L371 200L372 194L375 189L377 184L379 178L380 173M376 223L374 217L371 211L369 205M369 205L375 204L379 203L385 201L390 200L395 200L400 198L405 196M379 172L378 167L378 161L378 156L376 150L375 146L375 140M375 140L381 135M390 231L386 228L382 226L376 223M377 93L377 100L377 105L378 112L379 117M379 91L386 92L391 92L397 93M386 126L382 121L379 117M398 175L393 175L387 174L380 173M402 152L398 149L394 144L390 142L385 138L381 135M381 135L383 130L386 127M386 126L388 121L390 116L391 111L393 107L394 102L396 98L397 93M386 127L393 126L398 126L403 127L409 126M391 238L390 231M390 231L395 229L399 225L403 222M397 93L402 91M408 181L403 178L398 175M398 175L399 169L401 164L401 158L402 152M402 152L407 148L413 145L418 142M420 225L415 224L410 223L403 222M403 222L403 217L404 212L404 207L405 202L405 196M405 196L407 191L410 186M410 186L408 181M408 181L412 178L416 174L420 169L424 167L428 162M413 94L408 91M418 142L416 136L412 130L409 126M409 126L412 121L415 117L418 111M431 196L426 194L421 190L416 189L410 186M418 111L416 106L414 100L413 94M413 94L421 91M431 148L424 146L418 142M436 116L431 114L424 113L418 111M421 238L421 232L420 225M445 228L439 228L433 226L427 225L421 224M421 224L423 219L424 214L427 208L429 201L431 196M445 177L441 174L437 170L432 167L428 162M428 162L430 155L431 148M431 148L436 145L442 142M431 196L437 195L445 196M442 142L440 137L439 132L438 126L437 121L436 116M436 116L441 112L444 108L450 105L454 101M442 142L448 142L454 144M445 196L444 190L444 183L445 177M445 177L450 173L454 169M451 234L445 228M445 228L445 223L445 218L446 212L446 208L446 203L446 197M472 197L466 198L462 197L457 197L451 197L446 197M451 234L448 238M470 235L464 234L458 235L451 234M454 101L453 93M468 116L465 112L460 108L458 105L454 101M471 176L465 173L460 171L454 169M454 169L454 162L454 156L455 150L454 144M454 144L462 142M484 153L481 151L475 148L472 146L466 143L462 142M462 142L463 136L463 131L465 126L466 120L468 116M468 116L475 114L480 113L487 112M470 238L470 235M470 235L479 230M472 197L471 191L472 187L472 182L471 176M471 176L475 172L478 167L482 163L485 158M484 207L480 204L476 200L472 197M491 239L487 236L482 232L479 230M479 230L481 224L482 218L483 212L484 207M488 99L483 94M484 207L490 204L497 201M485 158L484 153M484 153L490 149L496 145M504 183L500 179L498 174L494 171L491 167L487 163L485 158M496 117L487 112M487 112L487 106L488 99M488 99L492 94M496 145L495 139L496 134L496 128L496 122L496 117M496 117L501 114L506 114L510 112M505 146L496 145M515 210L511 208L506 206L501 203L497 201M497 201L500 195L501 190L504 183M504 183L509 180L513 178L518 176M518 176L517 171L514 166L513 161L510 156L508 152L505 146M522 141L516 143L512 145L505 146M521 231L516 234L511 236L506 239M510 112L516 114L520 116L526 119M510 112L511 106L512 101L512 95M521 231L520 226L518 221L516 216L515 210M515 210L520 208L525 206L530 204L535 201L540 200M518 176L525 175M531 237L525 233L521 231M539 156L536 151L530 148L526 144L522 141M522 141L523 136L524 131L526 124L526 119M542 197L538 193L536 188L533 184L529 179L525 175M525 175L529 171L532 165L537 160L539 156M548 124L543 122L539 121L533 120L529 118M529 118L530 113L532 106L534 100L537 96M543 231L537 235L531 237M557 99L551 98L544 97L538 96M562 177L559 174L556 170L552 166L547 163L543 159L540 155M540 155L545 151L548 147L551 144L556 140M543 231L543 226L543 221L542 216L541 210L541 204L540 200M542 197L547 196M556 234L549 233L543 231M568 211L565 208L560 205L555 203L550 199L547 196M547 196L551 191L555 186L559 182L562 177M556 140L553 135L550 128L548 124M548 124L550 119L554 116L557 112M557 239L556 234M556 234L562 230M557 112L557 106L557 99M557 99L561 96M583 122L578 120L573 118L568 117L562 114L557 112M582 173L579 169L575 164L574 160L570 156L566 153L564 149L561 144L558 140M558 140L564 137L571 135L576 132M587 238L582 237L578 236L572 234L567 232L562 230M562 230L563 226L566 221L567 215L568 211M562 177L569 176L576 175L582 173M568 211L573 209L579 207L584 205M588 158L586 152L583 148L582 142L578 137L576 132M576 132L580 127L583 122M581 96L586 99L590 103M583 122L591 117M584 205L585 201L584 195L585 190L584 184L585 180L584 174M596 214L590 210L584 205M613 174L608 174L602 174L596 173L591 174L586 172M586 172L587 165L588 158M588 158L592 155L594 151L598 145L601 142L605 138L607 134M591 117L590 111L590 103M591 117L598 120L604 124M592 102L594 96M606 97L601 99L596 100L592 102M596 214L601 211L604 210L610 207M607 134L606 129L604 124M604 124L609 121L615 119L620 116L625 115L630 113L635 110M617 144L612 139L607 134M618 194L618 189L615 184L614 178L613 174M614 172L615 167L615 161L616 156L616 150L617 144M614 172L620 172L624 171L631 170L636 169L641 168L646 168M617 144L623 144L629 143L634 142L641 142M631 100L629 97M635 110L633 105L631 100M631 100L635 97M643 117L636 110M650 96L646 101L643 103L639 107L636 110M652 158L649 153L644 147L641 142M641 142L640 135L642 129L642 123L643 117M643 117L649 117L656 117L662 116L667 116M646 188L646 181L646 174L646 168M646 168L651 162M665 177L661 174L659 169L655 166L651 162M651 162L652 158M652 158L658 155M658 155L659 151L660 145L660 140L663 135L664 130L665 125L667 121L667 116M658 155L664 154M686 166L680 163L675 159L670 158L664 154M664 154L667 151L671 148L676 144L679 141L682 138L686 134L690 131M667 116L671 115M690 130L686 125L680 123L676 118L671 115M671 115L672 108L673 103L675 96M684 168L686 166M686 166L692 164M690 130L694 126L698 123L704 119L708 115L712 112M703 152L700 147L696 142L694 137L690 131M703 97L700 96M712 112L709 108L707 102L703 97M733 114L727 113L723 113L718 112L712 112M718 152L723 150M723 150L724 145L726 139L727 135L729 130L729 125L731 119L733 114M738 104L734 96M749 122L745 118L740 116L735 113M735 113L736 108L738 104M738 104L742 100L747 96M752 124L749 122M749 122L754 118L757 114L763 110L766 106L770 103L775 99L779 96M756 136L754 131L752 124M752 124L759 124L765 122L771 120M752 139L756 136M774 119L780 114M777 94L779 96M779 96L785 99M342 604L347 604M347 604L354 605L359 605L362 605L369 603L374 604L378 606L385 604L391 604M391 605L396 605L400 605L406 605L411 605L416 605L421 605L426 605L431 605L436 605M436 603L442 603L448 603L453 603L458 603L464 603M464 602L471 603L475 602L479 603L485 602L489 603L496 602M496 605L501 606L506 605L511 605L516 605L521 606L526 606L532 605L537 605L542 605M391 595L391 600L391 605M436 595L436 600L436 605M466 595L466 603M496 595L496 600L496 605M358 647L364 647M364 650L374 650M384 650L388 650M403 649L410 649M411 649L417 649M429 649L436 649M436 646L443 646L450 646M453 646L459 646L464 646L470 646L476 646M476 651L482 650L488 650L493 651L497 652L502 650L509 651M509 645L514 644L519 645L525 644L530 645L535 645L541 645M541 646L546 647L552 647L558 646L563 646L568 647L574 647L579 646M579 650L585 650L591 650L597 650L603 650L609 650M609 651L614 651L619 651L625 651L630 651L635 651L640 651L646 651L650 651L656 651M656 647L661 647L666 647L671 648L676 647L681 647L686 647L691 648L696 647M696 644L701 644L707 644L712 644L717 644L722 644L728 644L733 644M733 648L741 648L748 648M758 648L763 648L767 649L773 648M773 647L779 647L785 648L790 647L796 647L802 647L808 647M364 604L364 609L364 614L364 619L364 625L363 630L363 635L363 640L364 645L363 650M403 605L403 610L403 616L404 622L404 627L403 632L403 638L404 644L403 649M436 605L436 611L436 616L436 622L436 627L436 632L436 638L436 643M436 645L436 649M476 602L476 608L476 614L475 621L476 627L477 627L476 633L476 639L476 645L477 651M509 605L510 611L509 617L511 620L510 625L510 631L510 635L510 642L510 646L511 651M541 605L541 611L540 616L541 621L541 626L545 626L544 631L545 637L545 642L545 646M579 622L579 627L579 633L579 638L579 644L579 650M609 623L609 628L614 628L614 634L614 640L614 645L614 651M656 626L656 629L654 629L653 635L653 640L653 646L654 651M691 629L692 635L691 641L691 647M733 631L733 637L733 642L733 648M773 612L773 617L772 622L773 628L773 633L773 638L772 643L773 648M498 683L505 683M505 687L511 687L514 687L520 688L525 688L531 687L535 687M535 687L541 687L546 687L552 686L557 686L564 686L569 687L574 687M574 686L581 686L588 686M620 683L626 684L631 683L636 684L641 684L645 683L650 683L654 683L660 684L666 683M666 688L672 689L676 688L681 689L688 687L692 689L699 688L704 688M704 687L709 687L714 687L720 687L725 687L731 687L736 687L741 687M741 687L746 687L752 686L757 687L762 687L767 687L773 687L778 686L784 687L789 687M789 685L796 684L801 685L808 685M367 650L367 654M455 646L455 651L455 657M505 651L505 657L505 663L505 669L502 669L503 676L502 682L502 687M535 645L535 650L536 656L535 661L535 666L540 666L540 672L539 677L539 682L540 687M574 646L575 652L575 656L574 661L574 667L571 667L572 672L571 677L571 682L571 687M617 651L617 657L618 663L617 669L618 669L618 675L618 682M666 647L666 652L666 658L666 663L666 668L666 672L666 678L666 683L666 688M704 644L704 650L703 655L704 660L704 666L704 671L703 677L704 682L704 688M741 648L741 654L741 660L740 665L740 671L740 676L740 682L739 687M789 647L789 653L788 658L789 664L789 670L789 676L789 681L789 687M660 730L665 730L671 730L676 730L681 730M681 733L686 732L692 733L697 732L703 732L708 733L714 733M714 730L719 732L725 731L732 731L736 731L742 731L748 730M748 725L753 726L759 726L764 725L770 725L774 726L780 725M780 726L785 726L791 726L796 727L802 727L808 726M521 687L520 693L520 698L520 703L520 708L519 713M561 687L561 692L561 697L561 702M633 683L633 690M681 688L681 692L682 700L681 703L682 709L683 715L682 722L683 727L682 733M714 687L714 693L714 699L713 704L714 710L710 710L710 715L710 721L710 726L710 733M748 687L747 693L749 697L747 703L749 710L746 714L747 718L748 726L748 730M780 687L780 692L780 698L780 704L780 710L781 715L780 721L780 726M703 771L708 772L714 771L719 772L724 771L729 772L734 772L739 771L745 771M745 767L750 766L755 767L761 767L766 767L771 767L777 767L782 767M782 767L787 767L792 767L797 767L803 766L808 767M701 733L700 738L700 744L701 749L700 755L701 761L701 766M745 730L745 736L745 741L745 746L745 751L750 751L750 756L751 761L750 766L750 771M782 726L783 731L781 737L782 740L783 747L782 751L783 757L781 763L782 767M720 771L720 776L720 782L720 787L720 792L719 797L719 802L719 808M762 767L762 772L762 778L762 784L762 790L767 790L768 795L768 802L767 808M797 767L797 773L797 778L797 785L797 790L796 790L796 796L796 802L796 808M229 103L226 97M226 97L229 91L232 85L234 81L237 76M244 70L239 65L236 60L232 55L228 50M229 103L232 105M237 76L229 74M233 44L239 43L246 42M237 76L241 73M254 97L253 92L249 88L246 83L244 77L241 73M241 73L244 70M244 70L248 68M253 51L248 47L246 42M248 68L254 70L261 71M248 68L249 63L251 56L253 51M253 51L260 47M253 105L254 97M254 97L258 92L264 89M275 55L270 52L265 50L260 47M264 89L263 84L262 78L261 71M261 71L270 69M281 92L275 91L270 91L264 89M287 81L283 78L278 75L274 72L270 69M270 69L272 64L273 60L275 55M275 55L281 50L286 47M277 105L278 99L281 92M282 35L278 31M281 92L283 88L287 85M286 47L284 42L282 35M282 35L287 32L292 30L298 28L301 26L307 23M291 49L286 47M287 85L287 81M287 81L291 77L293 72L297 68M303 94L297 90L293 88L287 85M297 68L295 61L292 56L291 49M291 49L296 48L301 45L307 43L312 40M319 68L314 68L308 68L302 68L297 68M307 23L302 18M303 94L306 90L308 86L311 81L315 78L316 74L319 69M303 106L304 97M310 96L304 97M310 25L307 23M312 40L311 36L311 30L310 25M310 25L314 22L320 18M312 40L316 44M322 12L319 8L315 4M322 50L316 44M316 44L321 39L326 35L329 32L334 27M319 68L319 62L321 57L322 50M332 79L328 76L324 72L319 69M334 27L330 24L325 21L320 18M320 18L322 12M345 45L339 46L334 47L328 48L322 50M322 12L327 8L332 4M326 92L329 87L333 83M333 83L332 79M332 79L336 75L342 71L345 68M343 92L338 88L333 83M349 30L344 29L338 27L334 27M334 4L340 6L345 8M345 68L346 62L345 58L345 50L345 45M349 30L347 24L347 18L346 14L345 8M345 8L350 4M360 72L355 70L350 69L345 68M366 56L361 53L356 49L352 47L346 44M346 44L348 37L350 31M347 92L354 88L360 85M350 31L354 31L360 29M360 29L362 25L364 19L365 15L367 9L369 4M360 85L360 79L360 72M360 72L365 68L368 66M369 91L365 88L360 85M376 44L372 41L369 37L365 34L361 30M361 30L366 28L371 26L378 24L383 21L388 19M368 66L368 61L366 56M366 56L370 52L372 47L376 44M374 67L368 66M369 91L374 87L380 84M380 84L378 79L375 74L374 67M382 64L374 67M388 19L386 16L381 12L377 9L374 4M392 43L386 43L382 44L376 44M380 84L386 86L392 86L399 88M404 78L400 76L394 73L392 70L387 67L382 64M382 64L384 59L386 53L389 48L392 43M388 19L392 20M392 43L395 41M392 20L394 13L395 7M395 7L393 4M395 41L394 34L393 29L393 22M418 14L413 16L408 16L403 19L399 20L393 22M395 7L397 4M400 44L395 41M400 91L399 88M399 88L402 83L404 78M413 69L410 64L407 59L406 54L403 49L400 44M400 44L406 42L412 40L416 38L423 36M404 78L409 73L413 69M424 69L418 68L413 69M424 29L422 23L419 18L418 14M418 14L420 10M420 10L419 4M420 10L425 11L431 11L436 10L442 11M436 51L431 46L427 41L423 36M423 36L424 29M436 90L433 85L429 79L427 74L424 69M424 69L428 65L432 62L436 58M424 29L429 28L435 27L440 26M428 91L436 90M458 66L453 64L447 63L442 59L436 58M436 58L436 51M436 51L440 47L443 43M437 92L442 88L449 86M443 43L441 37L442 31L440 26M440 26L445 19M445 19L442 11M442 11L445 4M443 43L448 42L454 39L459 37M456 23L450 20L445 19M457 93L453 90L449 86M449 86L452 82L455 77L460 73L463 70M462 31L456 23M456 23L457 18L459 13L462 8L465 4M463 70L458 66M458 66L459 60L458 54L458 49L458 43L459 37M459 37L462 34M462 31L465 28L469 23L473 20L476 14L480 11M478 42L473 39L467 36L462 34M467 94L466 88L466 82L465 76L464 70M464 70L469 68L475 67M480 11L476 9L471 7L466 4M483 74L478 70L475 67M475 67L478 62L479 58L481 52M481 52L480 47L478 42M478 42L482 37L484 32L488 28L492 23M480 11L484 11M503 51L498 51L491 51L486 51L481 52M492 93L490 87L488 83L486 78L483 74M483 74L488 73L494 71L500 69L505 67M492 23L488 18L484 11M484 11L487 4M506 92L498 92L492 93M498 24L492 23M506 49L504 43L502 38L500 34L499 28L498 24M498 24L501 23M501 23L501 17L502 10L504 4M518 20L512 22L507 21L501 23M505 67L505 61L503 57L503 51M503 51L506 49M505 67L510 72M508 95L506 92M506 92L508 89M506 49L511 48L517 47L521 46M508 89L508 83L508 77L510 72M508 89L513 88L519 86L524 85L529 84M510 72L516 70L521 67L527 65M521 46L521 42L520 36L519 31L520 25L518 20M518 20L524 14M524 14L523 10L520 4M527 65L525 59L524 54L524 48M524 48L528 45L534 45L539 42M530 15L524 14M530 68L527 65M535 91L529 84M529 84L528 80L529 73L530 68M541 32L537 27L535 23L532 20L530 15M548 5L544 8L538 9L534 12L530 15M530 68L538 66L545 67M535 96L535 91M555 82L550 84L545 86L541 88L535 91M545 46L539 42M539 42L539 36L541 32M541 32L546 30L551 28L557 26M556 74L550 71L545 67M545 67L544 62L545 58L546 52L545 46M560 46L556 46L550 47L545 46M557 26L555 21L553 16L550 11L548 5M560 90L555 82M555 82L556 74M555 96L560 90M567 31L561 28L557 26M557 73L559 68L559 63L559 56L560 51L560 46M557 73L562 72L568 71L574 69M565 93L560 90M560 46L566 43L570 39M566 96L565 93M565 93L571 91L578 91L584 90M570 39L567 31M567 31L569 25L572 20L575 15M584 46L578 43L574 40L570 39M576 6L574 4M584 88L581 84L578 78L576 74L574 69M574 69L577 65L583 59L586 55M589 23L584 21L580 18L575 15M575 15L576 6M576 6L585 4M585 96L584 90M588 49L584 46M584 46L585 40L586 34L588 28L589 23M589 86L584 88M598 77L595 72L593 67L589 60L586 55M586 55L588 49M597 47L588 49M589 23L593 21L599 19M605 97L600 93L595 89L589 86M589 86L593 82L598 77M599 19L598 12L595 4M624 69L620 65L616 63L612 59L608 57L605 53L600 49L597 47M597 47L602 42L607 36M598 77L603 78L609 79L613 79L619 79M607 26L603 22L599 19M625 40L620 40L613 37L607 36M607 36L607 26M607 26L614 20M620 90L617 94L612 97M615 7L613 4M633 22L627 22L622 21L614 20M614 20L614 14L615 7M615 7L621 7L628 7L635 7M620 90L620 84L619 79M619 79L621 74L624 69M628 96L624 93L620 90M624 69L632 64M635 56L631 50L628 46L625 40M625 40L628 35L630 28L633 22M628 96L636 96M646 73L641 70L636 67L632 64M632 64L635 56M636 20L633 22M636 20L636 13L635 7M635 56L640 53L645 50L650 47L654 43L659 40M646 24L642 23L636 20M658 36L654 33L650 28L646 24M646 24L649 19L652 14L655 9L657 4M650 90L649 84L647 79L646 73M646 73L652 73L659 70L664 69M659 40L658 36M670 20L665 25L662 32L658 36M663 43L659 40M670 20L666 15L665 9L663 4M663 43L671 44L678 45M664 69L664 64L664 59L663 53L663 48L663 43M669 73L664 69M668 85L669 79L669 73M669 73L674 71L679 71L685 70M690 16L684 16L679 18L674 20L670 20M685 70L684 65L682 60L680 55L679 50L678 45M678 45L681 44M706 54L702 52L696 49L691 49L686 46L681 44M681 44L684 38L688 33L692 28M689 71L685 70M694 8L685 4M692 28L690 22L690 16M690 16L694 11M692 28L697 31L699 34L704 38L709 40L713 44M718 30L713 26L710 24L705 21L702 17L698 14L694 11M694 8L698 4M712 47L713 44M713 44L718 38M720 10L714 4M718 38L718 30M718 30L720 26M728 39L724 39L718 38M720 26L720 21L720 15L720 10M720 26L725 23L731 22L737 18L742 17M737 10L732 10L726 10L720 10M737 10L737 4M740 12L737 10M742 17L740 12M740 12L743 8L747 4M741 31L743 24L743 17M758 17L752 17L748 17L743 17M22 462L16 461L10 461L4 460M4 502L8 500M27 544L23 541L19 539L14 536L9 533L4 531M4 571L9 570L15 568L20 567M4 610L9 608L14 606L20 604L26 602M16 644L14 640L12 634L10 629L8 624L7 619L4 614M4 651L11 648L16 644M14 691L11 687L7 682L4 678M28 445L24 441L19 437L16 434L12 430L8 426L4 422M8 500L14 502L20 503L27 505L32 507M8 500L10 496L11 491L13 486L15 481L17 477L19 472L20 467L22 462M9 706L11 701L13 696L14 691M14 691L19 688L24 685L29 683L34 680L39 678M23 645L16 644M33 582L29 577L24 572L20 567M20 567L22 562L24 556L26 549L27 544M24 461L22 462M39 678L36 673L35 669L32 664L30 659L27 654L24 650L23 645M23 645L27 642L32 639L36 637M51 476L47 474L42 470L38 468L33 466L29 464L24 461M24 461L26 455L27 451L28 445M37 614L33 609L29 606L26 602M26 602L27 597L29 593L32 587L33 582M27 544L34 540L40 537M28 445L32 441L36 438L41 433L46 429M40 537L39 532L37 527L37 522L34 517L34 512L32 507M32 507L37 503L41 499L46 496L50 492L55 488M33 582L40 581L46 581M78 641L72 641L67 639L63 639L57 639L52 638L47 638L41 637L36 637M36 637L37 632L36 625L37 620L37 614M37 614L42 612L47 611L52 608L58 608L64 606L69 604M52 682L45 680L39 678M52 539L46 538L40 537M70 445L64 442L61 439L56 435L51 432L46 429M46 429L46 422L47 415M46 708L48 703L48 697L50 692L51 687L52 682M64 725L59 723L53 723L49 722M55 488L53 482L51 476M51 476L56 472L59 468L63 464L67 460L71 456M52 682L57 680L62 679L67 677M58 548L55 543L52 539M52 539L56 533L62 529L67 525M61 493L55 488M66 521L65 515L65 510L64 504L63 499L61 493M61 493L67 493L74 491L79 492M67 729L64 725M64 725L68 720L72 717L75 713L78 709M67 677L69 672L71 668L73 663L74 658L76 653L77 649L79 644M108 690L104 688L98 687L93 685L88 684L83 683L77 680L72 678L67 677M78 709L76 704L74 698L73 693L71 688L69 683L67 677M69 604L71 610L72 615L75 621L77 626L79 632M69 604L69 594M71 456L70 450L70 445M70 445L75 440L80 435M84 462L78 459L71 456M79 644L78 641M78 641L79 632M78 709L84 711L89 711L94 713M98 650L94 648L89 647L83 646L79 644M79 632L84 629L90 625L94 622L99 619L103 616L108 613M95 468L91 466M117 751L112 750L105 748L99 747L94 746M94 746L93 741L94 735L94 729L94 724L94 720L94 713M94 713L98 710L104 708L109 706L113 703M96 479L98 472M98 650L104 650L109 651L113 650L119 650L125 650L129 650M108 690L107 685L106 680L104 675L103 670L102 665L100 660L100 655L98 650M114 616L108 613M108 613L108 607L108 601L108 594M112 693L108 690M113 703L113 698L112 693M112 693L116 689L120 686L122 682L126 678L129 674L133 670L136 667M127 716L123 712L118 707L113 703M129 650L128 645L125 641L122 635L120 631L118 625L117 621L114 616M114 616L119 614L125 613L130 612L135 611L141 610L146 609M119 750L122 746M122 746L123 742L124 737L124 732L125 726L126 721L127 716M125 746L122 746M127 716L134 715L141 713M135 653L129 650M168 744L163 744L156 745L150 745L144 745L139 745L133 746M136 667L136 660L135 653M135 653L139 650L143 646L147 642L151 640L155 636L158 633M152 683L148 678L145 675L141 671L136 667M146 609L143 605L142 600L140 594M158 720L152 718L147 716L141 713M141 713L143 707L144 703L146 698L148 693L150 687L152 683M157 619L151 614L146 609M152 683L159 683L166 684M156 766L163 758M158 633L158 626L157 619M157 619L161 615L165 610L169 606L173 602L177 598M168 744L166 740L164 734L162 729L160 725L158 720M185 694L181 698L177 701L174 706L170 709L165 712L162 717L158 720M173 640L168 638L163 636L158 633M185 694L180 691L175 690L171 687L166 684M166 684L167 678L168 674L168 668L170 663L170 657L171 652L172 646L173 640M172 748L168 744M190 644L185 643L178 641L173 640M185 601L177 598M177 598L177 594M189 694L185 694M186 745L190 741L194 738L198 735M194 706L192 700L189 694M195 671L195 665L194 660M196 686L202 686L207 685L212 686L218 686L223 684L228 685M201 724L198 718M231 754L226 750L224 747L220 742L216 739M228 766L230 760L231 754M229 683L228 674M231 754L234 753M4 133L13 133M13 133L19 133L24 133L29 133L35 134L40 133L45 133M45 132L51 132L57 132L62 132L67 133L73 132M73 135L78 135L84 135L89 135L94 136L99 136L104 136L109 136L114 136L119 135M119 138L124 138L129 138L135 138L140 138L146 138M13 105L13 111L13 117L13 122L13 128L13 133M45 105L45 111L45 116L45 122L45 128L45 133M73 105L74 110L73 115L73 120L74 126L73 130L73 135M119 105L119 112L121 117L118 123L120 126L120 132L120 138M160 113L160 122M4 173L11 173L18 173L24 173M24 173L31 173L35 174L40 174L47 173L51 172L57 173M57 166L62 166L68 165L74 166L79 165L85 166L90 166M90 169L96 168L102 168L105 169L111 170L118 170L123 169L128 169M128 172L132 170L138 171L144 173L149 170L154 170L159 170L165 172M165 170L172 169L177 170M24 133L24 139L24 145L24 150L24 156L24 162L24 168L24 173M57 132L57 137L56 142L57 147L56 152L56 158L56 163L56 168L57 173M90 135L90 141L90 147L90 152L86 152L85 158L85 164L86 169M128 138L128 144L128 149L128 155L127 155L126 160L127 166L127 172M165 149L165 154L160 154L160 160L160 166L160 172M4 202L9 201L14 202L20 202L25 202M25 206L32 206L36 205L42 206L47 205L53 206M53 202L59 201L64 202L68 202L73 203L78 202L84 201L89 203L94 202L98 202M98 209L104 209L109 209L115 208L120 209L125 209L131 209L136 209L142 209M142 208L149 208L156 208M25 173L25 178L25 184L25 190L24 190L24 195L24 200L24 206M53 173L51 178L52 185L53 188L53 195L53 199L52 206M98 169L99 173L98 179L99 184L99 189L98 194L99 199L98 204L98 209M142 172L142 175L141 183L142 187L141 194L140 197L141 203L142 209M4 231L9 230L14 231L20 231L24 231M24 230L28 231L36 229L40 230L44 229L49 228L55 228L60 230L65 230M65 236L70 236L75 236L80 236L85 236L90 236L95 236L100 236L105 236L110 236M110 232L116 232L121 232L126 232L131 232L137 232L142 233L147 232L152 232M24 202L25 208L24 213L24 219L24 225L24 231M65 202L65 208L65 214L65 219L65 225L65 231L65 236M110 209L110 215L110 222L105 222L105 229L105 236M156 214L157 220L158 225M4 261L10 261L16 261L22 261M22 265L28 265L33 265L39 265L45 266L50 265M50 266L56 266L61 267L67 267L72 266L77 266L82 266M82 267L88 267L94 267L100 268L105 267L111 267L116 267M116 265L125 265M22 231L22 236L22 243L22 248L22 254L22 260L22 265M50 230L50 235L50 240L50 245L50 251L50 256L49 261L49 266M82 236L82 242L82 246L82 252L86 252L86 257L86 262L86 267M116 232L117 238L117 242L116 248L116 252L116 257L116 262L116 267M148 232L148 235M4 304L8 304M8 299L13 298L18 299L23 299L29 299L34 298L39 299L44 299L50 299M50 304L55 305L60 304L66 304L71 305L76 304M76 300L82 300L88 300L93 300L99 300L105 300M105 301L109 301M8 261L8 267L8 272L8 277L8 282L8 288L8 293L8 299L8 304M50 265L49 272L50 278L50 285L53 285L53 291L54 298L53 304M76 266L76 272L76 277L76 283L76 288L76 293L76 299L76 304M105 267L105 273L107 279L107 284L108 289L108 295L108 301M4 329L10 330L16 329L23 329M23 330L29 330L34 330L42 330L45 330L52 330M52 335L58 336L64 336L70 335L74 334L80 335L85 335M85 331L90 331M23 299L22 305L22 308L23 316L23 321L23 325L23 330M52 304L52 309L52 315L51 320L51 325L50 330L50 335M85 300L86 304L84 310L85 314L84 321L87 324L84 329L85 335M4 376L10 376L16 376L22 376L29 376M29 372L34 372L40 372L45 372L50 372L56 372L61 372L66 372M66 373L72 373L78 373M29 330L28 336L29 340L28 345L29 351L28 355L28 360L28 366L28 371L29 376M66 335L66 340L66 345L66 350L66 357L68 361L66 366L67 373M74 415L80 415M33 372L33 378L34 383L34 388L33 394L33 399L34 405L33 410L33 415M74 373L74 378L74 384L74 390L74 396L79 396L79 404M79 409L79 415M4 38L6 38M6 43L12 43L18 44L24 42L29 44L34 43M34 38L39 38L44 39L49 37L55 38L60 38M60 40L65 41L70 41L77 39L82 40L88 40M88 41L93 41L99 41L104 41L110 41L116 41M116 40L122 39L126 41L131 40L137 40L141 40L147 41L150 42L156 40M156 36L162 36L167 36L173 36L178 35L184 36M184 41L191 41L195 40L201 41L207 41M6 4L6 10L6 15L7 21L6 27L6 32L6 38L6 43M34 4L34 10L34 15L35 21L34 26L34 32L34 37L34 43M60 4L60 10L60 15L60 21L61 21L61 27L61 34L61 40M88 4L88 10L88 16L88 21L92 21L92 28L92 34L92 41M116 4L116 10L116 15L116 20L116 25L116 30L116 35L116 41M156 4L156 10L156 15L156 21L159 21L159 27L159 34L159 40M184 4L184 9L184 15L184 20L184 25L184 31L184 35L184 41M4 68L10 67L15 68M15 66L20 67L26 66L32 66L37 66L42 67L47 67L54 66M54 63L59 63L65 63L70 63L75 63L81 63L86 63L92 63M92 70L97 70L103 70L108 70L114 70L120 70L125 70M125 65L131 66L137 66L142 66L149 66L155 65M155 65L160 65L165 65L170 65L176 66L181 65L186 65M186 68L191 68L196 69L201 68L207 68L213 68L218 68M218 70L225 70L232 70M15 43L15 49L15 55L16 55L16 61L16 68M54 38L54 44L55 49L56 55L56 61L56 66M92 41L91 47L92 53L92 58L92 64L92 70M125 40L125 48L125 55L125 55L125 63L125 70M155 40L155 47L155 53L159 53L159 59L159 65M186 41L186 48L186 55L181 55L181 62L181 68M218 59L218 64L218 70M4 102L10 103L18 102M18 102L24 102L28 101L33 101L38 103L43 102M43 96L50 97L53 97L61 95L64 96L70 96L76 96L81 96M81 98L86 98L92 98L98 98L102 98L108 98L113 98L118 98L124 98M124 102L130 102L135 102L141 102L147 101L153 102L159 102M159 96L164 97L169 96L175 95L180 97L184 96L191 95L194 97L200 96M200 97L206 98L212 97M219 97L225 97M18 66L17 71L17 76L17 82L16 87L16 92L16 97L15 102M43 66L43 72L42 76L43 81L42 87L41 90L40 96L41 102M81 63L80 68L81 73L80 78L80 83L79 88L79 93L79 98M124 70L124 75L124 81L124 86L124 92L124 97L124 102M159 65L158 69L158 75L160 82L159 87L160 93L157 96L159 102M200 68L200 76L200 83L205 83L205 90L205 97M151 132L158 132M158 130L164 129L169 130L174 130L179 129L184 130L190 130M46 96L46 106M87 98L87 106M126 102L126 106M158 102L158 107L158 112M154 129L154 132M195 96L194 101L194 106L194 111L195 116L195 121L195 126M147 136L146 143L147 149M180 130L180 136L180 143L180 149M668 250L678 249M689 272L686 267L685 263L682 258L680 254L678 249M678 249L680 243L683 237M686 284L688 279L689 272M689 272L696 270L701 269L707 267L711 267L717 265L723 263M699 293L704 293L710 291L716 290L722 289L728 288L733 287M715 317L712 313L709 309L705 305M724 258L721 254L718 249L716 243L713 238L710 235L707 229M715 317L720 314L726 312M733 287L730 282L729 278L727 272L726 268L723 263M767 262L761 262L756 262L751 262L745 262L740 262L735 262L730 261L724 262M724 262L724 258M724 258L727 254L732 249L735 245L739 241L742 237L745 232L748 228L752 224M755 339L751 334L748 331L744 326L739 323L735 319L730 316L726 312M726 312L729 308L732 303L735 298L738 294M733 287L738 294M750 346L743 345L736 343M738 294L744 294L748 294L753 293L758 293L763 293L769 293M752 224L745 221M748 361L748 356L749 350L750 346M750 346L755 339M752 224L759 224M776 356L771 352L768 349L764 345L759 343L755 339M755 339L760 336L763 332L766 328L770 324M769 256L767 251L766 246L764 241L763 234L760 229L759 224M759 224L761 222M780 222L773 223L767 222L761 222M769 293L769 288L769 283L768 277L767 272L767 268L767 262M767 262L769 256M772 296L769 293M807 251L801 252L797 252L791 253L785 254L780 254L774 256L769 256M793 337L788 334L783 331L778 329L775 326L770 324M770 324L771 318L771 312L772 307L771 302L772 296M771 388L771 382L773 377L774 371L775 366L775 360L776 356M771 388L778 387L782 387L788 386L794 386M772 296L778 296L784 295L791 294M776 356L783 355L789 354M797 373L794 368L793 364L791 358L789 354M789 354L790 348L792 343L793 337M808 329L806 324L804 319L801 313L799 308L796 305L793 300L791 294M791 294L797 292L802 290M793 337L798 336L802 336L808 335M806 394L800 389L794 386M794 386L795 380L797 373M808 363L803 368L797 373M808 426L804 422L801 416M801 416L801 410L804 406L804 401L806 394M802 290L808 291M802 290L803 284L804 279L804 274L805 267L806 262L806 257L807 251M604 232L599 231L595 229L589 228M602 239L604 232M623 239L618 236L611 234L606 231M606 231L608 226L610 221L611 215L613 211L614 205M614 205L610 204M614 205L619 202L624 199M624 199L620 193M624 199L629 199M641 206L635 202L629 199M629 199L631 193L633 188M640 239L647 233M647 233L646 228L645 222L643 216L642 211L641 206M641 206L646 203L650 202L656 200L660 199L665 197M656 234L647 233M658 239L656 234M656 234L660 232L666 230L670 230L676 227L680 226M665 189L662 185L659 181M676 204L670 200L665 197M665 197L665 189M665 189L670 183L674 179L677 174M677 174L676 171M680 226L680 220L679 214L677 210L676 204M676 204L683 200M691 180L686 177L682 175L677 174M681 238L682 233L682 227M699 229L693 229L688 227L682 227M708 201L702 200L695 200L690 200L683 200M683 200L685 195L688 189L690 185L691 180M691 180L697 178L702 176M702 176L700 173L698 167L695 162L693 158M700 232L699 229M699 229L703 224L707 220L710 216L714 210M702 176L709 179M714 210L711 206L708 201M708 201L708 195L710 191L710 184L709 179M709 179L714 176L720 172M720 172L718 167L718 161L716 156L715 151L713 144M714 210L718 211L724 212L729 212L734 213M738 175L733 174L726 173L720 172M739 142L733 140M737 222L734 213M734 213L737 208L741 203L745 198M749 182L743 178L738 175M738 175L738 170L738 164L738 159L738 153L739 148L739 142M749 138L744 140L739 142M771 217L767 213L763 211L759 207L755 204L749 202L745 198M745 198L747 193L747 188L749 182M749 182L757 179M769 151L763 148L758 145L754 141L749 138M770 184L763 182L757 179M757 179L759 175L761 170L763 165L766 160L768 156L769 151M766 222L771 217M769 151L774 149L780 148L784 145L789 143M789 213L787 209L783 203L780 198L777 193L772 189L770 184M770 184L775 181L782 180L787 178L792 175L797 173M771 217L776 216L782 217L787 216M785 121L781 116M784 100L790 94M789 143L788 137L788 133L787 127L785 121M785 121L791 119L796 116L802 115L808 112M787 216L787 223M787 216L789 213M793 145L789 143M806 205L800 207L795 210L789 213M797 173L796 167L795 162L795 157L794 150L793 145M793 145L799 144L807 144M808 182L802 178L797 173M808 100L805 98M807 204L808 201M669 90L664 86M670 94L669 90M669 90L673 86L677 82L680 79L684 76L689 71M674 96L670 94M697 80L694 75L689 71M692 96L693 91L695 86L697 80M721 83L715 83L709 81L703 80L697 80M714 57L706 55M721 83L721 78L718 73L717 67L716 62L714 57M727 49L724 52L719 54L714 57M719 96L720 90L722 84M722 84L730 83L736 81M730 43L727 39M736 62L734 58L731 54L727 49M727 49L730 43M750 37L745 38L740 40L735 42L730 43M738 79L737 74L736 68L736 62M736 62L740 59L745 56L750 53M749 96L744 91L741 86L736 81M736 81L738 79M759 68L754 70L749 74L743 76L738 79M750 37L747 32L746 27M750 53L750 47L750 43L750 37M769 35L762 35L756 37L750 37M750 53L753 59L756 63L759 68M769 91L767 85L763 79L760 74L759 68M759 68L765 64L770 63L776 60M767 94L769 91M769 91L774 87L777 84L783 80L787 78L792 75M776 60L774 55L773 49L771 44L771 40L769 35M769 35L772 31M786 65L780 63L776 60M792 75L789 70L786 65M786 65L790 59L793 56L797 50L800 46M791 95L794 90L796 84L798 79M798 79L792 75M800 46L797 40M798 79L804 80M808 47L800 46M808 90L806 84L804 80M804 80L808 78M208 22L214 22L220 22L226 22M226 22L232 22L238 21L242 22L248 22L253 22L259 22M259 20L265 21L270 21L276 21L282 20M226 4L226 10L226 17L226 22M259 4L260 10L260 16L260 22M282 4L282 11L282 17L282 24M306 4L306 10L306 10L306 18M210 48L219 48M219 44L226 45L234 44M263 47L270 47L275 47M275 47L282 47M219 22L218 28L218 33L219 37L219 43L219 48M245 22L246 28L245 34L243 34L243 40M275 20L275 26L276 31L275 37L275 42L275 47M214 48L215 57M276 47L276 53M763 4L764 13M765 14L766 20M766 20L771 23L774 26M776 35L774 26M774 26L780 23L785 21L791 18L796 15M796 15L795 10L794 4M796 15L802 17M806 33L805 28L804 23L802 17M802 17L808 16"/>
<polygon points="300,59.8 303.1,57.4 305.3,55.4 310.5,57.1 312.3,59.8 314.1,63.3 316.4,66.4 317.6,70.3 320.9,71.3 323.7,72.1 319.3,75.6 320,79.9 320.2,84.4 321.4,87.8 322.8,91.4 323.2,96.3 321.1,93.1 319.1,90 317.9,87.6 316.7,84.4 315.8,80.4 314.4,77.1 314.1,73.8 313.2,70.3 311.1,68.3 309.7,65 305.3,61.5 301.8,63.3" fill="#2c4460" stroke="#1d3b5d" stroke-width="1"/>
<polygon points="368.5,260.3 373.4,257.9 376.3,260.5 379.6,262.8 381.9,264.6 385.7,265.9 388.2,266.5 390.4,268.6 393.1,271.4 394.4,273.5 396.8,276.3 391.9,273.9 388.2,272.3 385.7,270.2 381.9,268.7 378.4,266.5 376.2,264.5 373.4,262.8 369.7,262.8" fill="#2c4460" stroke="#1d3b5d" stroke-width="1"/>
<polygon points="447.7,363.4 451.4,364 450.8,367.7 448.4,369.5 446.5,372.6 444.1,374.5 444.7,376.9 441.6,376.3 438.5,377.6 439.7,374.5 442.2,371.4 444.1,368.3 446.5,366.5" fill="#2c4460" stroke="#1d3b5d" stroke-width="1"/>
<polygon points="605.1,308.4 608.8,305.9 610.4,303.5 612.5,301 612,297.9 611.3,294.8 612.6,290.5 613.7,286.2 616.2,291.1 618.4,288.3 620.6,286.2 621,289.6 622.3,293.6 627.3,293.1 625.1,295.2 622.3,298.5 620.3,300.9 618.7,303.4 616.3,306.4 613.7,309.6 611.7,312 608.8,313.3 606.3,312" fill="#2c4460" stroke="#1d3b5d" stroke-width="1"/>
<polygon points="423.7,413.3 425.2,416.3 427.4,417.6 426.8,420 428.7,425 431.1,428 431.7,431.1 431.4,434.2 429.6,433.6 429.3,430.5 426.8,426.8 425.2,421.3 424.3,417" fill="#2c4460" stroke="#1d3b5d" stroke-width="1"/>
<polygon points="526.1,501.8 529.5,501.3 533.1,500.9 533,504.3 534,507 532.5,510.8 530.5,514.1 530,517.8 529.6,521.1 532.3,526.4 536.7,525.5 533.1,529.9 534.9,533.4 534.5,536.7 533.1,539.5 530.5,536.9 528.1,534.7 526.1,531.6 528.8,528.1 526.1,522.8 525.9,518.8 526.1,515.8 527.6,512.3 529.6,508.8 527,506.2" fill="#2c4460" stroke="#1d3b5d" stroke-width="1"/>
<polygon points="540.2,601.1 543.7,604.6 543.5,608.2 543.7,610.7 547.2,614.2 552.5,612.5 553.3,609.3 554.7,606.3 556,603.7 557.8,603.7 556.7,608.1 556,611.6 559.5,610.2 563,609.8 563.9,612.5 560.4,613.9 556,616 552.8,617.2 549,619.5 545.4,621.3 541.9,617.8 541.7,614.4 541.1,610.7 541.6,605.4" fill="#2c4460" stroke="#1d3b5d" stroke-width="1"/>
<polygon points="123.1,657.7 126,655 128.1,652.8 130.8,653.8 134.2,654 136.7,659 134.4,662 133,665.1 130,666.8 126.8,668.3 121.9,665.1 122.1,661.6" fill="#2c4460" stroke="#1d3b5d" stroke-width="1"/>
<polygon points="144.1,698.4 147.8,695.4 152.7,698.4 154.1,701 154.7,704.5 150.2,708.2 148.3,710.9 145.3,713.1 140.4,710.7 140.7,707.5 141.6,704.5 146.5,702" fill="#2c4460" stroke="#1d3b5d" stroke-width="1"/>
<polygon points="42.4,680.6 46.8,681.6 48.6,683.6 51.2,686 50.5,689.7 45.6,688 43.1,684.1" fill="#2c4460" stroke="#1d3b5d" stroke-width="1"/>
<polygon points="59.1,684.8 61.6,689.7 63.2,692.9 65.3,695.9 67.7,700.8 71,702.6 73.9,703.3 77.4,703.9 81.3,704.5 85,708.2 83.7,710.7 79.8,709.5 76.3,708.2 73.1,708.2 69,707 66.4,705.7 62.8,703.3 60.4,699.3 59.1,695.9 58.6,692.9 57.1,689.7" fill="#2c4460" stroke="#1d3b5d" stroke-width="1"/>
<polygon points="784.9,734.1 788.6,737.8 791,741.5 793.5,743.2 796,745.1 794.7,750.1 792.3,753.8 788.6,751.3 787.4,747.5 786.1,743.9 785.3,740.4 783.6,737.8" fill="#2c4460" stroke="#1d3b5d" stroke-width="1"/>
<polygon points="440,368.8 443.5,365.3 447,363.6 450.5,364.4 449.7,368 446.2,370.6 442.6,372 440,372" fill="#2c4460" stroke="#1d3b5d" stroke-width="1"/>
<polyline points="785.7,654 785,658.5 785.4,661.3 786.8,663.9 786.3,666.5 784.2,669 782.5,671.4 781.1,673.6 781.4,674.5 783.1,674 784.4,675.1 785.3,677.7 786.6,680.1 788.2,682.2 789.8,684.4 791.1,686.5 791.5,689.3 791.1,692.8 791.5,695.9 792.8,698.6 792.8,696.5 791.6,689.5 791.3,687.9 792,691.5 792.9,695.9 794.1,700.8 793.8,705.1 791.9,708.9 790.4,712.6 789.2,716.2 788.3,720.5 787.6,725.5 786.7,729.5 784.9,734.1" fill="none" stroke="#000" stroke-width="3.2"/><polyline points="785.7,654 785,658.5 785.4,661.3 786.8,663.9 786.3,666.5 784.2,669 782.5,671.4 781.1,673.6 781.4,674.5 783.1,674 784.4,675.1 785.3,677.7 786.6,680.1 788.2,682.2 789.8,684.4 791.1,686.5 791.5,689.3 791.1,692.8 791.5,695.9 792.8,698.6 792.8,696.5 791.6,689.5 791.3,687.9 792,691.5 792.9,695.9 794.1,700.8 793.8,705.1 791.9,708.9 790.4,712.6 789.2,716.2 788.3,720.5 787.6,725.5 786.7,729.5 784.9,734.1" fill="none" stroke="#00466c" stroke-width="1.4"/>
<g fill="none" stroke="#806c0c" stroke-width="1">
<polyline points="181,6.2 191.1,16.3 196.1,25.2 199.1,36.4 200.7,49.3 200.7,64 200.4,76.3 199.8,86.2 198.2,93.6 195.8,98.5 193,103.5 189.9,108.3 187.5,117.6 185.6,131.1 182.2,141 177.3,147.1 173.6,154.5 171.1,163.2 166.8,171.8 160.7,180.4 155.4,188.5 151.2,196.2 148.7,200 148.1,200 147.2,201.8 145.9,205.6 146.2,209.8 148.1,214.8 149.9,218.8 152.7,223.4"/>
<polyline points="200.7,71.4 210.8,67.7 216.4,64.7 220.7,61 224.1,54.8 226.6,46.2 228.1,36.4 228.7,25.2 231.8,16.6 237.3,10.5 242.2,9.8 246.5,14.8 248.7,18.4 248.7,20.9 251.2,24.6 256.1,29.6 259.8,34.5 262.3,39.4 263.8,44.4 264.4,49.2 266.2,53.2 269.3,56.4 273.2,58.5 277.7,59.7 281.2,60.3 283.6,60.3 287.9,58.8 294,55.7 299.6,53.9 304.4,53.2 310,54.5 316.2,57.5 323,61.6 330.3,66.5 338.3,72.7 347,80 355,86.5 362.3,92 368.5,97.6 373.4,103.1 379,108.1 385.1,112.3 390.7,116.3 395.6,120.1 399.6,123.5 404.2,128.1"/>
<polyline points="174.8,224.6 184.1,219 190.9,215.4 198.2,211.7 205,207.4 211.1,202.5 217.9,196.8 225.3,190.4 233.3,185.3 242,181.7 251.2,178.2 261.1,175.2 269.5,172.7 276.5,170.8 281.2,169.6 283.6,169 289.1,167.8 297.7,165.9 306.3,163.8 315,161.3 323.6,159.5 332.2,158.2 338.9,156.4 343.9,153.9 350,151.5 357.4,149 364.2,147.2 370.3,145.9 375.9,144.7 380.8,143.4 385.8,141.6 390.7,139.1 395.9,137 404.2,134.2"/>
<polyline points="473.2,6.2 472.2,20 470.7,29.5 468.2,39.4 464.6,46.4 459.6,50.8 453.5,54.1 446.1,56.6 440.2,58.8 435.9,60.7 432.6,64.7 430.1,70.8 427,78.2 423.3,86.8 419.9,94.2 416.9,100.3 413.8,105.9 410.7,110.8 409.4,115.8 410.1,120.6 409.1,124.7 405.4,129.3"/>
<polyline points="394.4,99.7 404.5,100.7 411.6,101.9 419,103.8 425.1,106.2 430.1,109.3 433.8,113.9 436.2,120 437.5,125.9 437.5,131.4 436.2,137.6 433.8,144.4 431.3,150.6 428.8,156.1 424.5,159.7 418.4,161.6 411,163.1 402.4,164.4 394.4,164.4 387,163.1 380.2,160.1 374.1,155.1 369.8,149.6 367.2,143.5 366.3,137.3 367,131.2 368.8,125 371.9,118.8 375.9,113.2 380.8,108.4 386.1,104.4 394.4,99.7"/>
<polyline points="405.4,134.2 418.4,133.3 427.6,132.7 437.5,132.1 447.3,132.4 457.2,133.6 466.4,135.1 475,137 483.6,137.6 492.3,137 501.5,136.7 511.4,136.7 518.1,138.2 521.8,141.3 526.1,143.4 531,144.7 535.4,146.5 539,149 543.2,150.8 547.7,152.1 548.7,153.9 546.1,156.4 549.1,157.6 557.7,157.6 566.3,158.5 575,160.4 583.6,160.4 592.2,158.5 600.8,155.8 609.4,152 615.6,149.6 619.2,148.4 625.4,148.4 634.1,149.6 642.1,149 649.4,146.5 654.6,144.7 659.3,142.8"/>
<polyline points="405,134.2 405,144.4 404.2,150.9 402.6,157 400.9,163.2 399,169.3 397.6,176.1 396.6,183.5 396.3,190.4 396.6,196.8 397.1,200 397.8,200 398.1,206.2 398.1,218.4 397.8,228.3 397.1,235.7 396.2,243.7 395,252.3 395,260.9 396.2,269.6 396.5,280 395.9,292.4 396.5,303.4 398.4,313.3 399.6,323.1 400.2,333 401.1,341.6 402.4,349 403.3,356.4 403.9,363.8 404.5,371.2 405.1,378.5 405.1,386.6 404.5,395.6 404.5,400 405.1,400 406.3,402.5 408.2,407.4 411.3,413.6 415.6,420.9 419.3,428.3 422.4,435.7 425.1,443.1 427.6,450.5 430.4,457.3 433.4,463.4 436.1,467.7 439.4,471.4"/>
<polyline points="405.4,134.2 412.8,142.5 418.4,148.4 424.5,154.5 430.1,160.7 435,166.8 439.6,173.6 444,181 448.9,187.1 454.4,192.1 458.1,195.9 460,198.6 461.2,200 461.8,200 464.6,203.1 469.4,209.2 473.8,215.4 477.4,221.5 480.5,226.4 483,230.2 487.9,233.2 495.3,235.7 500.9,237.5 506.4,239.4"/>
<polyline points="588.4,6.2 587,18.2 588.5,25.9 592.1,33.2 596.5,39.4 601.4,44.3 603.9,50.5 603.9,57.9 603,65.3 601.1,72.6 601.1,80.6 603,89.3 603.3,95.4 602,99.2 598.6,103.5 593.1,108.3 591.8,113.9 595,120 599,126.2 603.8,132.3 608.1,138.5 611.9,144.7 615.6,147.8 621.1,147.8"/>
<polyline points="659.3,142.8 667.6,136.3 674.7,132.3 683.3,128.7 692.5,124.3 702.4,119.5 711.6,114.2 720.2,108.7 728.8,103.4 737.5,98.5 746.1,94.2 754.7,90.5 762.7,86.5 770.1,82.2 778.1,79.1 786.7,77.2 794.6,75.1 805.3,71.4"/>
<polyline points="659.3,142.8 663.9,148.3 667,151.4 670,153.9 671.9,156.9 672.5,160.7 674,164.1 676.5,167.1 679.3,169.6 682.4,171.5 684.5,175.2 685.8,180.7 687.9,184.7 691,187.2 695,188.7 699.9,189.3 706.1,189.3 713.5,188.7 721.5,187.2 730.1,184.7 738.7,182.9 747.3,181.6 757.8,179.8 770.1,177.3 781.2,175.2 791.1,173.3 798.3,173 805.3,174.8"/>
<polyline points="594,160.1 585.7,169.3 580.1,176.1 574.6,183.5 569.4,190.4 564.5,196.8 561.7,200 561.1,200 559.9,201.8 558,205.6 555.2,208.6 551.6,211.1 547.2,214.8 542.4,219.7 537.4,224.6 532.5,229.6 530.8,230.2 528.5,231.4 521.2,236.9"/>
<polyline points="714.7,188.4 718.4,193 719.9,195.9 720.6,198.6 720.6,200 722.1,201.8 727,205.6 731.4,209.2 735,213 739.4,215.1 744.2,215.7 747.9,218.2 750.4,222.4 752.9,227.1 755.4,232 757.8,236.9 760.3,241.9 761.8,247.4 762.4,253.5 763.6,259.7 765.5,265.9 767.3,271.4 770.1,278.8"/>
<polyline points="6.2,257.1 20,256.4 30.8,255.3 43.1,253.7 55.5,251.1 67.8,247.4 80.1,243.8 92.3,240 103.4,236 113.3,231.8 122.5,228.3 131.1,225.8 139.7,224.3 148.4,223.7 154.8,223.7 161.3,224.6"/>
<polyline points="162.5,222.2 168.1,221.2 171.1,221.8 173.6,223.7 174.8,225.8 174.8,228.3 173.6,230.2 171.1,231.4 168.1,231.9 164.3,231.6 162,230.4 161.1,228.2 161.1,225.9 162.5,222.2"/>
<polyline points="163.8,231.5 165.6,241.1 166.8,248.6 168.1,257.3 169.3,266.5 170.6,276.4 171.5,285.6 172.1,294.2 172.4,302.2 172.4,309.6 173.3,318.2 175.2,328.1 177,337.9 178.9,347.8 180.7,357.6 182.6,367.5 183.2,376.1 182.5,383.5 181,390.4 178.5,396.8 177.6,400 178.2,400 177,403.1 173.9,409.2 170.6,415.4 166.8,421.5 164.1,427.7 162.2,433.8 161,440 160.4,446.2 158.8,453 156.3,460.3 154.5,466.5 153.3,471.4 152.1,475.4 150.8,478.5 149,482.8 146.5,488.3 143.8,494.2 140.7,500.3 138.2,506.5 136.3,512.6 134.8,520 133.6,528.7 132.4,536.7 131.1,544.1 130.2,552.7 129.6,562.6 129.1,571.8 128.7,580.4 128.4,588.5 128.1,592.5 127.6,593.7 126.6,601.1 126.3,609.1 126.6,617.7 127.1,625.1 127.8,631.2 128.4,635.8 129,639 130.2,642.6 132.1,647 133.6,651 134.8,654.6 135.1,659 134.5,663.8 133.9,668.5 133,675"/>
<polyline points="407.9,372.4 415.3,361.3 420.9,355.2 427,350.2 433.2,345.3 439.3,340.4 446.1,335.4 453.5,330.6 459,325 462.7,318.8 467,312.6 471.9,306.5 476.8,299.7 481.8,292.4 486.1,285 489.8,277.6 492.9,270.8 495.4,264.7 497.2,258.5 498.4,252.4 500.9,246.8 504.5,241.9 508.9,238.8 513.8,237.5 520,235.1 527.3,231.4 533.5,227.8 538.4,224 543.2,220.3 550,214.8"/>
<polyline points="521.2,236.9 526.8,244.3 530.5,250.5 534.1,257.9 537.2,264.7 539.7,270.8 541.5,277 542.8,283.1 543.8,288.1 544.4,291.8 546.6,296.1 550.4,300.9 553.4,305.2 555.9,308.9 559.5,313.3 564.5,318.2 568.1,323.1 570.6,328.1 573.4,333 576.5,337.9 578.9,342.8 580.8,347.8 582,352.1 582.9,357.6"/>
<polyline points="407.9,372.4 415.3,368.7 421.5,366.2 428.8,363.8 436.2,362.8 443.6,363.5 452.2,363.8 462.1,363.8 470.7,363.5 478.1,362.8 485.5,361.9 492.9,360.7 500.3,359.2 507.6,357.3 515.6,355.8 524.3,354.5 531.7,353.5 537.8,352.6 543.2,352 546.1,350.5 548.5,349.6 555.9,348.4 563.3,348.1 570.6,348.7 576.4,351.1 580.8,355.5 585.1,356.7 589.4,354.8 594.7,353.9 600.8,353.9 606.4,354.8 611.2,356.7 617.4,358.8 624.8,361.3 632.8,363.1 641.4,364.4 650,365.6 658.7,366.9 667.9,367.8 677.8,368.4 687.6,369.3 697.5,370.6 707.3,371.5 717.2,372.1 727,372.7 736.9,373.3 744.9,373.3 751,372.7 757.2,370.8 763.3,367.8 770.1,364.1 777.5,359.8 784.3,355.8 790.4,352.1 796.5,347.8 805.3,340.4"/>
<polyline points="404.2,372.4 397.8,379.8 393.1,384.1 388.2,387.8 383.2,391.5 378.3,395.1 374,397.8 370.4,399.2 367.9,400 366.6,400 362.9,400.3 356.8,400.9 351.2,401.8 346.3,403.1 342,405.2 338.4,408.3 334.6,412.3 331,417.2 326.7,422.2 321.8,427.1 316.8,432.1 311.9,436.9 306.9,441.9 302.1,446.8 297.8,451.8 294.1,456.7 289.7,461 284.8,464.6 279.2,467.4 273.1,469.3 270.7,470.2 267.8,471.1 258.6,473.9"/>
<polyline points="415.3,367.5 412.5,374.9 410.1,378.9 406.9,381.9 402.3,384.4 393.1,387.2"/>
<polyline points="400.5,369.9 405.4,367.5 415.3,367.5"/>
<polyline points="584.2,293.6 580.5,299.1 578.4,302.9 576.5,306.5 575,310.8 573.7,315.8 572.2,320.1 570.3,323.8 570.3,327.5 572.2,331.1 574.6,335.4 579.3,342.8"/>
<polyline points="582.9,357.6 584.8,348.4 587.5,342.8 591.9,337.9 597.1,333.2 603.2,328.9 610,324.6 617.4,320.4 624.8,316.4 632.2,312.6 640.2,308.4 648.8,303.4 656.8,298.5 664.2,293.6 671.6,289.2 679,285.6 686.4,282.5 693.8,280 701.2,276.9 708.5,273.2 715.3,268.9 721.4,264.1 725.1,260.7 726.4,258.8 730.1,256.6 736.2,254.2 742.4,251.4 748.5,248.3 755.3,245.2 762.7,242.2 770.7,238.4 779.3,234.2 787.3,230.5 794.7,227.4 800.1,225.1 805.3,222.7"/>
<polyline points="582.9,357.6 576.4,365 572.4,369.3 568.8,373 565.1,377.3 561.4,382.2 558.4,387.1 555.9,392.1 554,395.9 552.8,398.6 551.3,400 549.4,400 547.6,401.9 545.7,405.5 542.9,409.2 539.2,412.9 538.2,414.4 538.4,414.8 533.5,419.7 529.1,424.6 525.5,429.6 521.8,434.5 518.1,439.4 513.8,444.3 508.9,449.2 502.7,453.9 495.3,458.1 487.3,461.6 478.7,464.1 471.3,466.8 465.2,469.9 459,471.9 452.9,472.9 447.2,472.9 439.4,471.4"/>
<polyline points="582.9,357.6 587.5,363.1 590.6,366.9 593.8,370.5 596.5,374.8 599,379.8 601.1,384.7 603,389.6 604.5,394.1 605.7,398 606.9,400 608.2,400 610,402.1 612.5,406.5 616.2,410.8 621.1,415.1 624.8,418.8 627.3,421.8 630.4,424.3 634,426.2 636.5,428 637.8,429.9 640.2,432.9 643.9,437.2 647.6,441.2 651.2,444.9 656.8,448.6 664.2,452.4 671.6,455.4 679,457.9 687.6,460.3 697.5,462.8 707.3,464.6 717.2,465.9 727,467.4 736.9,469.3 746.7,470.8 756.6,472 765.2,474.2 772.6,477.2 779.4,480 785.5,482.5 791,484.3 796,485.6 800.1,488.1 805.3,493.6"/>
<polyline points="575.6,337.9 582.1,335.1 586.4,334.8 590.6,336.1 593.2,339.5 594.1,345 594.1,350.2 593.2,355.2 590.9,359.2 587.2,362.2 583.5,363.2 579.9,361.9 577.1,359.1 575.2,354.9 574.6,349 575.6,337.9"/>
<polyline points="739.3,255.4 741.2,261.9 744.2,265.6 749.1,268.6 754.1,271.7 759,274.8 763.6,277.2 768,279.1 772.2,282.2 776.6,286.5 781.2,290.5 786.1,294.2 791,297.9 796,301.5 800.1,304.6 805.3,308.4"/>
<polyline points="6.2,460.3 20,462.2 30.8,463.4 43.1,464.7 55.5,466.2 67.8,468.1 78.8,470.8 88.7,474.5 96,475.7 101,474.5 108.3,473.6 118.2,472.9 126.8,472.9 134.2,473.6 140.4,475.1 145.3,477.6 154,479.1 166.2,479.7 178.6,479.4 190.8,478.2 203.2,477 215.4,475.7 227.8,474.8 240.1,474.2 249.4,473.9 258.6,473.9"/>
<polyline points="258.6,473.9 254.8,481.2 252.4,487.4 249.9,494.8 246.8,501.6 243.2,507.7 240.1,513.9 237.6,520 234.6,526.2 230.8,532.3 227.2,537.9 223.4,542.8 220.4,547.1 217.9,550.9 216.4,556.4 215.8,563.8 215.2,571.2 214.5,578.5 213,585.3 210.5,591.4 208.7,592.5 208.1,593.7 205.6,601.1 203.2,608.5 200.7,615.9 198.2,622.7 195.8,628.8 193.3,634.4 190.8,639.2 189.9,644.2 190.6,649.1 191.2,652.8 192.1,656.5"/>
<polyline points="147.8,478.8 149,471.4 153.9,469"/>
<polyline points="439.4,471.4 438,478.8 435.6,484.4 432,490.5 428.2,497.3 424.6,504.7 420.2,512.7 415.3,521.3 410.4,529.3 405.4,536.7 399.9,544.1 393.8,551.4 387.6,558.2 381.5,564.4 374.7,570.6 367.3,576.7 359.3,582.2 350.6,587.1 342.6,591.5 342,591.2 338.4,593.7 333.4,595.8 327.3,597.7 321.4,599.8 315.9,602.3 311.9,605 309.4,608.2 307.8,612.2 306.8,617.1 306.2,621.4 305.7,626.9"/>
<polyline points="627.3,422.2 631,429.6 632.2,435.1 632.2,441.2 631.6,448.6 630.3,457.3 629.6,466.5 629.3,476.4 629.3,485.6 629.6,494.2 630.3,502.2 631.6,509.6 633.1,515.8 635,520.6 637.8,526.8 641.4,534.2 644.5,541.6 647,549 648.8,556.4 650.1,563.8 651.9,571.8 654.4,580.4 656.2,588.5 657.1,592.5 657.4,593.1 658.7,599.2 660.8,605.4 663.9,611.5 667.9,617.7 672.8,623.8 677.8,630 682.6,636.2 687.6,641.8 692.5,646.6 696.9,651.2 700.5,655.6 704.2,659.9 707.9,664.1 711,668.8 713.5,673.7 715.9,679.3 718.4,685.4 720.2,691.6 721.5,697.7 723.3,703.3 725.8,708.2 728.9,713.2 732.5,718 736.2,723.6 739.9,729.7 743,736.5 745.5,743.9 747,751.3 747.6,758.7 748.8,766.1 750.7,773.5 752.2,780.4 754.1,790"/>
<polyline points="638.4,430.8 633.4,436.9 632.2,444.3"/>
<polyline points="805.3,533 802.9,544.1 801.8,551.5 801.2,558.8 799.7,566.2 797.2,573.6 794.1,581 790.5,588.4 787,592.5 786.7,593.7 785.5,601.1 785.2,608.5 785.8,615.9 786.4,623.3 787,630.6 787,637.4 786.4,643.5 787.3,650.3 789.8,657.7 792.2,663.9 794.8,668.8 797.2,673.8 799.7,678.6 801.8,683.6 803.7,688.5 804.8,692.9 805.3,698.4"/>
<polyline points="6.2,661.4 12.7,659.6 18.5,657.8 25.9,655.2 33.3,652.8 40.6,650.3 48,648.2 55.4,646.3 62.8,644.8 70.2,643.5 78.2,642.6 86.8,642 95.4,641.4 104.1,640.8 113.3,640.5 123.2,640.5 133,640.5 142.9,640.5 150.9,641.4 157,643.3 163.2,646.1 169.3,649.8 174.8,652.5 179.8,654.4 184.7,655.6 189.6,656.2 195.2,655.6 201.3,653.7 207.5,651.9 213.6,650 219.8,648.5 225.9,647.2 233.3,645.7 242,643.8 250,642.9 257.3,642.9 265.8,642.6 275.2,642 281.2,641.4 283.6,640.8 287.9,639 294,635.8 299.2,632.4 303.6,628.8 307.6,626 311.2,624.1 315.9,623.5 321.4,624.2 327.9,625.4 335.3,627.3 342.7,629.1 350,631 356.2,633.1 361.1,635.6 366.7,637.1 372.8,637.7 377.8,637.4 381.4,636.2 385.1,634 388.9,631 393.1,627.9 398.1,624.8 403.6,622.3 409.7,620.5 416.5,619 423.9,617.7 431.3,617 438.7,616.7 445.5,617.8 451.6,620.3 457.8,620.9 463.9,619.7 470.1,618 476.2,615.7 482.4,615.1 488.5,616.1 494.7,616.6 500.8,616.6 507,616.3 513.2,615.7 519.4,616.3 525.5,618.2 531.7,620.8 537.8,624.1 543.2,626 546.1,626.9 548.5,628.1 555.9,630.6 564.5,633.8 574.4,637.4 583,639 590.3,638.3 598.3,638.6 607,639.9 615.6,641.1 624.2,642.3 632.8,643.2 641.4,643.9 650,645.4 658.7,647.9 666.7,650 674.1,651.9 680.9,652.8 687,652.8 693.2,654 699.3,656.5 704.9,658.6 709.8,660.5 715.9,661.4 723.3,661.4 730.1,661.7 736.2,662.3 743.6,661.7 752.3,659.9 760.3,658.4 767.6,657.1 774.4,656 783.6,654.5"/>
<polyline points="91.1,642.9 91.1,651.2 92.3,656.5 94.8,661.4 98.5,665.1 103.4,667.6 109,669.7 115.1,671.6 121.9,673.1 129.3,674.4 135.4,676.2 140.4,678.7 145.3,680.8 150.2,682.7 154.5,683.9 158.2,684.5 161.9,683.3 165.7,680.2 169.9,676.2 174.9,671.3 178.5,666.3 181,661.5 182.8,658.1 184.7,655.3"/>
<polyline points="6.2,617.1 10.8,622.6 12.6,627 13.2,631.8 13.2,637.4 12.6,643.5 12.9,649.7 14.8,659"/>
<polyline points="778.7,649.1 782.4,646.3 784.9,646.3 787.4,648.2 789.5,651.6 791.4,656.5 792,661.5 791.3,666.3 789.5,669.4 786.4,670.7 783.7,670 781.2,667.5 779.5,663.8 778.7,659 778.3,654.6 778.7,649.1"/>
</g>
<g fill="none" stroke="#000" stroke-width="1">
<polyline points="0,105.4 154.7,105.4"/>
<polyline points="154.6,105.4 155.6,108.4 156.4,109.9 157.3,111 158.3,112 159.7,112.9 160.6,114 161.1,115.3 161.3,116.9 161.1,118.6 160.6,120.4 159.7,122.2 158.5,123.9 156.9,125.7 155.3,127.4 153.7,129.2 152,130.9 150.2,132.7 148.6,134.4 147,136.1 145.6,137.8 144.3,139.5 143.6,140.3 143.7,140.3 144.4,139.5 145.8,137.8 146.5,137 146.6,137 145.9,137.9 144.6,139.7 143.3,141.4 141.9,143.2 140.3,145.4 137.3,149.3 186.5,149.3"/>
<polyline points="202.1,6.2 205,13.6 206.4,17.4 207.1,20.1 207.6,22.6 207.9,24.8 207.6,26.7 207,28.4 205.9,29.8 204.4,30.9 203.3,31.9 202.6,33 202.4,34.1 202.6,35.2 203,36.3 203.7,37.5 204.6,38.5 205.7,39.6 206.7,41.1 207.7,42.8 208.6,44.9 209.5,47.4 210.4,49.5 211.3,51.4 212.2,53 213.1,54.2 214.1,55.5 215.1,56.7 216.3,57.9 217.7,59 218.7,59.7 219.6,60 220.3,60 220.7,59.5 220.9,59.1 220.8,58.5 220.4,57.9 219.8,57.2 219.1,56.8 218.5,56.5 217.8,56.5 217.1,56.8 216.7,57.1 216.6,57.5 216.8,58.1 217.2,58.8 218.1,59.2 219.3,59.3 221.4,59 225.8,58"/>
<polyline points="309.3,6.2 309.3,16.7 282.9,22.8 279.4,27.8 278.2,30.7 278.2,33.4 279,36.2 280.6,39.3 281.5,42.1 281.9,44.8 281.6,47.2 280.7,49.4 279.7,51.1 278.6,52.3 277.4,53 276.1,53.3 274.4,53 272.5,52.4 270.2,51.3 267.5,49.8 264.9,48.3 262.3,46.9 259.6,45.5 257,44.2 254.4,43 252,42 249.7,41.2 247.5,40.5 245.3,40.2 243.1,40.2 240.9,40.5 238.7,41.2 236.6,42.1 234.6,43.3 232.8,44.8 231,46.6 229.6,48.4 228.3,50.4 227.4,52.5 226.8,54.7 226.7,56.6 227.1,58.3 228.1,59.6 229.6,60.8 230.8,62.1 231.5,63.6 231.9,65.4 231.9,67.3 231.6,69.2 231.1,70.8 230.2,72.3 229.2,73.6 228.5,75 228.3,76.4 228.5,77.9 229.2,79.4 229.4,80.7 229.2,81.8 228.6,82.7 227.4,83.4 226.8,84.2 226.6,85.2 226.8,86.3 227.4,87.7 227.7,89.2 227.6,90.9 227.1,92.9 226.2,95.1 225.2,96.8 224.1,97.9 222.9,98.4 221.6,98.4 220.3,98.1 219.1,97.4 217.9,96.4 216.8,95.1 215.8,94.3 214.8,93.9 213.9,94.1 213,94.8 212.2,95.9 211.4,97.4 210.7,99.4 210.1,101.8 209.4,103.7 208.6,105.1 207.8,106.1 206.9,106.5 206.1,106.4 205.5,105.8 204.9,104.6 204.5,102.8 203.9,101.3 203.3,100.1 202.5,99.2 201.6,98.5 200.8,98.2 200,98.3 199.3,98.8 198.7,99.8 198.3,100.6 198.3,101.5 198.7,102.4 199.3,103.3 199.9,104.1 200.5,104.9 201,105.6 201.4,106.2 201.7,107 201.7,108 201.4,109.2 201,110.5 200.7,111.9 200.6,113.5 200.6,115.1 200.9,116.9 200.6,118.3 200,119.4 198.9,120.2 197.3,120.6 196.3,121.2 195.7,121.8 195.7,122.6 196.1,123.5 196.7,124.2 197.3,124.8 198.1,125.1 199,125.4 198.9,125.6 197.8,125.8 195.7,126 192.6,126.2 190.5,126.7 189.3,127.4 189,128.5 189.6,129.8 190.4,131.1 191.4,132.3 192.6,133.4 193.9,134.6 194.6,135 194.8,134.8 194.4,133.9 193.3,132.3 192.9,131.6 193.1,131.7 193.8,132.6 195.1,134.4 195.7,135.9 195.5,137.2 194.5,138.3 192.7,139.2 191.2,140.4 189.9,141.9 188.8,143.8 187.8,146 187.5,148.1 187.7,150.1 188.5,152 189.8,153.7 190.5,155.3 190.5,156.6 189.8,157.7 188.5,158.6 187.4,159.6 186.7,160.7 186.2,161.8 186,163.2 185.5,164.4 184.6,165.4 183.4,166.4 181.8,167.3 180.2,168.2 178.6,169 176.9,169.7 175.1,170.3 173.6,171.1 172.4,172 171.5,172.9 170.8,174.1 170.6,175.1 171,176.2 171.8,177.3 173.1,178.4 173.8,179.6 173.9,180.6 173.4,181.8 172.3,182.8 171.6,184.1 171.3,185.5 171.4,187.1 171.8,188.9 171.7,190 171.1,190.6 169.8,190.5 168.1,189.9 166.5,189.7 165.2,189.9 164.1,190.6 163.2,191.7 162.7,192.9 162.5,194.3 162.6,195.9 163,197.7 163.1,199.2 162.9,200.4 162.4,201.3 161.5,201.9 160.6,202 159.6,201.6 158.6,200.6 157.4,199.1 156.5,198.3 155.6,198.2 154.8,198.8 154.1,200.1 153.8,201.4 153.9,202.7 154.4,204.1 155.3,205.3 155.9,206.7 156,208 155.7,209.3 155,210.6 154.8,211.8 155,212.9 155.7,213.9 156.8,214.8 157.7,215.8 158.5,216.9 159.1,218.1 159.5,219.4 159.7,220.7 159.6,221.9 159.2,223.1 158.5,224.2 157.7,225.1 156.8,225.8 155.8,226.4 154.8,226.9 153.8,227.6 153.1,228.7 152.5,230.2 152,231.9 151.2,233.3 150,234.3 148.4,234.9 146.5,235.1 144.9,235.5 143.8,236 143.2,236.8 142.9,237.7 143,238.5 143.5,239.4 144.2,240.3 145.3,241.2 146.1,242.2 146.6,243.3 146.7,244.5 146.4,245.8 145.7,247 144.5,248.1 142.8,249.1 140.6,250 138.7,250.5 137.2,250.6 136,250.3 135.1,249.6 134.2,249.1 133.4,248.6 132.5,248.3 131.6,248.1 131,248.3 130.5,248.8 130.3,249.8 130.3,251.1 130.1,252.2 129.8,253.3 129.3,254.3 128.7,255.2 128,256.1 127.4,257 126.7,257.9 126,258.8 125.8,259.5 126.2,260.2 127,260.7 128.3,261.2 129.1,261.7 129.3,262.4 129,263.1 128.1,264 127.2,264.9 126.4,265.7 125.5,266.6 124.6,267.5 124.2,267.6 124.1,266.9 124.5,265.5 125.3,263.3 126.2,262 127.1,261.7 128.2,262.3 129.2,263.9 129.8,265.3 129.8,266.6 129.2,267.8 128.2,268.9 127.1,269.5 126.1,269.6 125.2,269.2 124.3,268.3 123.8,268.2 123.6,268.9 123.7,270.3 124.1,272.5 124.3,274.5 124.3,276.2 124.1,277.8 123.7,279.1 123.4,280.7 123.3,282.4 123.3,284.4 123.6,286.6 123.2,288.5 122.4,290 120.9,291.2 119,292.1 117.4,293.1 116.3,294.2 115.7,295.4 115.4,296.7 114.9,297.5 114.2,297.7 113.1,297.4 111.8,296.4 110.7,296.2 110,296.7 109.5,297.8 109.3,299.5 108.7,301 107.7,302.1 106.3,302.8 104.6,303.3 103.5,304 103,305.1 103.2,306.6 104.1,308.3 104.3,309.5 103.9,309.9 102.8,309.7 101,308.8 99.6,308.5 98.3,308.7 97.4,309.4 96.8,310.8 96.7,312.2 97.1,313.7 98.1,315.4 99.6,317.1 100.5,318.8 100.9,320.3 100.6,321.8 99.7,323.1 98.6,324.1 97.3,325 95.8,325.7 94,326.1 92.3,326.7 90.7,327.3 89.1,328.1 87.5,329 86.9,329.7 87.1,330.2 88.2,330.6 90.1,330.9 91.3,331.4 91.6,332.3 91.2,333.5 89.8,335 88.8,336.5 88.1,337.9 87.6,339.3 87.3,340.6 87.5,341.8 88,342.9 89,343.9 90.3,344.8 90.9,345.6 90.8,346.2 90,346.8 88.4,347.2 86.9,347.6 85.5,347.8 84.1,347.9 82.8,347.9 81.9,348.2 81.5,348.9 81.5,349.9 81.9,351.1 82.6,352.3 83.6,353.3 84.9,354.1 86.5,354.8 87.2,355.4 87.2,355.8 86.5,356.1 84.9,356.4 83.3,356.4 81.7,356.3 80,356 78.2,355.6 76.9,355.6 76,356 75.6,356.9 75.6,358.2 76,359.3 76.7,360.2 77.9,360.8 79.4,361.3 80.1,361.8 80,362.4 79.1,363.2 77.3,364.1 76.2,365.2 75.6,366.5 75.7,368.1 76.3,369.8 77.1,371.4 78.1,372.7 79.3,373.8 80.6,374.7 81.2,375.3 81,375.8 80,376 78.2,376 77.1,376.3 76.7,377 76.9,378 77.8,379.3 78.9,380.1 80.2,380.3 81.7,380 83.5,379.1 84.7,378.8 85.3,379 85.5,379.8 85,381.1 84.5,382.2 83.8,383.3 83,384.3 82.2,385.2 81.7,386.3 81.7,387.6 82.2,389.2 83,390.9 83.9,392.2 84.8,393 85.7,393.3 86.6,393 87.1,393.1 87.2,393.4 86.9,394 86.2,394.9 85.8,395.5 85.5,395.8 85.5,395.8 85.8,395.4 85.9,395.7 85.9,396.6 85.8,398 85.5,399.9 84.9,401.4 83.9,402.4 82.6,402.9 80.8,402.9 79.4,403.2 78.3,403.7 77.5,404.6 77.1,405.6 77.1,406.8 77.7,407.8 78.7,408.9 80.3,410.1 81.2,411.2 81.4,412.2 81,413.4 79.8,414.4 78.9,415.6 78,416.8 77.2,418.1 76.6,419.4 76.4,420.6 76.6,421.7 77.2,422.7 78.3,423.6 79.3,423.8 80.2,423.4 81,422.2 81.6,420.5 82.3,419.4 83.1,418.9 83.9,419.1 84.8,420.1 85.4,421.2 85.9,422.5 86.1,424 86.1,425.8 85.7,427.3 85,428.6 83.8,429.7 82.3,430.6 81.1,431.7 80.4,433 80,434.5 80,436.3 80.5,437.8 81.5,439 83,439.9 84.9,440.6 86,441.5 86.2,442.6 85.6,443.9 84,445.4 82.9,446.8 82.3,448.1 82,449.4 82.3,450.4 82.9,451.1 83.9,451.3 85.2,451.1 87,450.5 88.4,450.3 89.5,450.7 90.3,451.5 90.7,452.8 90.6,453.9 90,454.8 88.8,455.4 87,455.9 85.6,456.5 84.5,457.4 83.7,458.5 83.3,459.8 83.3,461 83.7,462.1 84.6,463.1 85.9,464 87.3,464.7 88.9,465.2 90.5,465.6 92.3,465.9 93.6,466.4 94.6,467.3 95.2,468.5 95.5,470 95.9,471.1 96.6,471.8 97.5,472 98.5,471.7 99.3,472 99.6,472.6 99.5,473.7 99.1,475.3 98.4,476.7 97.5,477.9 96.4,478.9 95.1,479.8 94,480.8 93.3,481.9 92.8,483.1 92.6,484.4 92.1,485.3 91.2,485.7 90,485.7 88.4,485.3 86.8,485.2 85.2,485.4 83.5,485.9 81.7,486.8 80.4,487.8 79.5,489 79.1,490.4 79.1,492 79.5,493.3 80.4,494.4 81.7,495.3 83.5,495.9 85.1,496.1 86.5,495.9 87.8,495.2 88.8,494.1 89.5,493.7 89.7,493.9 89.5,494.8 88.9,496.4 88,497.6 86.9,498.6 85.6,499.3 84,499.8 83.1,500.4 82.7,501.1 83,502.1 83.9,503.1 84.2,504.2 83.8,505.2 82.9,506.1 81.4,507.1 79.9,508.2 78.3,509.7 76.8,511.4 75.2,513.3 73.7,514.9 72.1,516.1 70.6,516.9 69.1,517.4 67.8,518.1 66.8,519.1 66.1,520.3 65.7,521.9 65.7,523.2 66.3,524.3 67.3,525.2 68.9,525.8 69.5,526.4 69.3,527 68.2,527.5 66.3,527.9 64.7,528.4 63.6,528.8 63,529.1 62.7,529.5 62.5,530.2 62.3,531.4 62.1,533 61.8,534.9 61.3,536.4 60.6,537.2 59.5,537.6 58.2,537.3 57,537.4 56,537.7 55.2,538.3 54.6,539.2 54.5,540 55.1,540.8 56.2,541.5 58,542.2 59,543.1 59.3,544.2 59,545.5 57.9,547 56.8,548.6 55.8,550.2 54.9,552 54,553.7 53.6,555.3 53.6,556.8 54,558 54.9,559.1 55.2,560.1 55,560.8 54.2,561.4 53,561.9 51.8,562 50.8,561.7 50,561.2 49.3,560.3 48.9,560 48.8,560.4 49,561.3 49.4,562.8 49.9,564.3 50.5,565.7 51.1,567.1 51.7,568.4 51.7,569.5 50.9,570.2 49.4,570.7 47.2,571 45.8,571.5 45.1,572.4 45.2,573.6 46.1,575.2 46.7,576.7 46.8,578.1 46.5,579.5 45.8,580.8 45.6,582.1 46,583.4 46.8,584.7 48.1,586 48.8,587.4 48.8,588.8 47.8,590.7 44.8,594.1"/>
<polyline points="209.1,105.1 311,105.4 309.3,89.6 323.3,90.5 325.5,90.5 325.5,92.3 370.3,91.4 421.3,90.9 422.1,92.3 423,90.9 475.7,94 500,94.9 550.3,95.8 603,96.7 634.7,96.7 680,96.3 666.9,96.4 714.7,96.4 765.5,95.6 767,94.1 787.1,94.1 805.8,97.8 810,98.6"/>
<polyline points="634.7,96.7 637.2,94.7 638.9,93.6 640.6,92.7 642.7,91.8 645.1,90.9 647.5,90.2 649.8,89.7 652,89.3 654.2,89.1 656.2,88.8 657.9,88.3 659.5,87.8 660.8,87.1 662.6,86.4 664.9,85.6 667.8,84.8 671,83.9 673.6,83 675.3,82 676.3,81 676.5,79.8 676.8,78.9 677.3,78 678,77.2 678.8,76.6 679.5,75.9 680,75.3 680.4,74.7 680.7,74.1 681.8,73.4 683.7,72.7 686.4,71.8 690,70.9 692.7,69.8 694.7,68.5 695.9,67 696.2,65.2 696.7,63.7 697.3,62.4 697.9,61.3 698.7,60.4 699.6,59.6 700.7,58.8 702,58.2 703.5,57.6 704.7,56.7 705.8,55.5 706.6,54 707.1,52.1 708.2,50.3 709.7,48.6 711.6,47 714.1,45.5 717.1,43.9 720.7,42 725,40 729.8,37.7 734.1,35.5 737.9,33.4 741,31.3 743.7,29.2 746.1,27.2 748.3,25.2 750.4,23.3 752.2,21.5 754.2,19.7 756.2,18 758.9,16.1 764,12.7"/>
<polyline points="748.3,6 750,8.1 751.2,9.1 752.6,9.9 754.4,10.6 756.4,11.1 758.4,11.7 760.2,12.1 762,12.5 763.7,12.9 764.7,13.3 764.9,13.9 764.5,14.5 763.4,15.3 762.8,16.2 762.8,17.3 763.4,18.6 764.5,20.1 765.4,21.6 766.1,22.9 766.5,24.1 766.7,25.2 767.3,26.5 768.3,28 769.8,29.7 771.6,31.6 773.3,33.1 774.8,34.2 776.1,35 777.2,35.3 778.3,35.9 779.5,36.8 780.6,37.9 781.7,39.1 782.9,40.2 784.2,41.1 785.6,41.7 787.1,42 788.8,42.1 790.7,41.9 792.7,41.5 795,40.7 797,39.9 798.9,39.1 800.5,38.2 802,37.3 803.3,36.4 804.4,35.4 805.3,34.2 806.6,32.1"/>
<polyline points="0,415.2 79,415.2"/>
<polyline points="142.6,238.5 298.9,238.5 300,237.6 440,238.3 640,239.2 679.4,238.2"/>
<polyline points="298.9,237.6 303,242.2 307,247.6 303,284.2 298.9,324.8 294.8,360 290.8,406.1 286.7,450 282.6,472.5 279.9,507.7 279.4,526.7 281.3,570 283.4,602.6 285.3,640.5 286.2,650"/>
<polyline points="44.8,594.5 186.3,594.5 183.7,603.8 178.4,612.6 177.5,621.4 181,630.2 183.7,637.2 188.9,641.6 191.6,651.3 194.2,660.1 196,665.3 196.5,669.5"/>
<polyline points="787.2,94.6 785.5,97.9 784.6,99.9 784.1,101.7 783.7,103.7 783.4,105.8 783,107.7 782.5,109.3 781.8,110.6 781,111.6 780.5,112.7 780.4,113.9 780.6,115.2 781.2,116.5 781.2,117.4 780.7,118 779.6,118.1 778,117.8 776.4,117.9 774.8,118.3 773.2,119 771.7,120 770.1,121.3 768.7,122.7 767.3,124.4 766,126.2 764.7,128.2 763.4,130.3 762,132.6 760.8,134.9 759.4,136.8 757.9,138.1 756.4,138.9 754.8,139.2 753.3,139.1 751.8,138.7 750.5,138 749.1,136.9 747.6,136.2 745.9,136 744,136.1 741.9,136.7 739.8,137.3 737.7,137.9 735.5,138.7 733.5,139.4 731.5,140.5 729.8,141.8 728.3,143.4 727,145.2 725.6,146.9 724.1,148.4 722.6,149.8 721.1,151 719.7,151.7 718.5,151.8 717.5,151.4 716.7,150.5 716.2,149.6 715.9,148.6 715.9,147.7 716.2,146.7 716.2,145.9 715.9,145.3 715.4,144.7 714.6,144.4 713.7,144.3 712.6,144.5 711.4,145 710.1,145.7 708.8,146.6 707.6,147.5 706.5,148.5 705.5,149.6 704.5,150.6 703.6,151.5 702.7,152.4 702,153.1 701.1,153.7 700.2,153.9 699.2,153.9 698.1,153.7 697.1,153.8 696.2,154.2 695.3,154.9 694.6,155.9 693.9,157 693.4,158.2 693,159.5 692.7,160.8 692.2,162.2 691.6,163.7 690.7,165.2 689.7,166.7 688.5,167.8 687.2,168.5 685.7,168.7 684.2,168.4 682.6,168.4 681,168.7 679.4,169.2 677.8,170 676.2,170.8 674.6,171.6 673,172.4 671.5,173.2 669.8,174.1 667.9,175.2 666,176.3 663.9,177.7 661.9,178.9 660,180.1 658.3,181.2 656.8,182.2 655.2,183.3 653.8,184.3 652.4,185.4 651.1,186.5 649.6,187.2 648,187.6 646.3,187.5 644.5,187.2 642.4,187 640.2,187 637.8,187.2 635.1,187.5 632.5,188.1 629.9,188.8 627.2,189.7 624.6,190.7 622.1,191.8 619.9,193 617.8,194.3 616,195.6 614.4,197 613.1,198.5 612,200 611.3,201.5 610.6,203.2 610.1,204.9 609.7,206.7 609.4,208.5 608.9,210.2 608.1,211.6 607,212.9 605.7,213.9 604.2,214.8 602.7,215.4 601,215.9 599.1,216.1 597.6,216.2 596.5,216.1 595.6,215.9 595.1,215.5 594.4,215.4 593.6,215.7 592.7,216.3 591.6,217.2 590.7,218.6 590.1,220.4 589.6,222.6 589.4,225.2 589.1,227.8 588.9,230.4 588.5,233.5 587.9,239.1"/>
<polyline points="678.6,238.7 683.9,236.9 686.8,235.9 689.1,235.2 691.2,234.6 693.4,233.9 695.5,233.3 697.6,232.8 699.7,232.2 701.8,231.7 703.7,231.1 705.3,230.5 706.6,229.8 707.6,229.2 708.8,228.5 710.1,228 711.6,227.6 713.1,227.2 714.6,226.8 715.9,226.3 717.1,225.7 718.1,224.9 719.3,224.4 720.6,223.9 722.1,223.5 723.7,223.3 725.2,222.9 726.7,222.5 728,221.9 729.4,221.3 730.4,221 731.2,221 731.7,221.3 732,221.9 732.6,222.3 733.5,222.3 734.8,222.1 736.3,221.6 737.9,221.2 739.5,220.9 741.5,220.8 745,220.8 780.9,222.4 791.6,222.9 796.8,223.1 800.1,223.1 803.1,222.9 807.3,222.4"/>
<polyline points="679.4,237.9 678.4,240.9 677.4,242.6 676,244 674.1,245.5 671.6,247 669.5,248.6 667.6,250.2 666,252 664.7,253.7 663.5,255.5 662.5,257.3 661.7,259 661.1,260.8 660.8,262.4 660.8,263.8 661.1,265.1 661.7,266.1 662.8,267.3 664.2,268.5 666,269.8 668.2,271.1 670.4,272.6 672.6,274.3 674.8,276.1 677,278 679,279.7 680.7,281.2 682.3,282.3 683.6,283.2 685.2,283.8 686.9,284.1 688.9,284.2 691.1,283.9 692.9,284 694.3,284.5 695.4,285.2 696,286.4 696.7,287.6 697.3,288.9 698,290.3 698.6,291.8 699.4,293.5 700.4,295.2 701.6,297.1 702.9,299.1 704,301.1 704.9,303.2 705.6,305.4 706,307.5 706.7,309.6 707.6,311.4 708.6,313.1 710,314.7 711.2,316.2 712.4,317.8 713.5,319.3 714.6,320.8 715.6,322.4 716.5,324.1 717.3,325.8 718,327.5 718.9,329.2 720.1,330.9 721.6,332.5 723.4,334 725.3,335.5 727.5,337.1 729.9,338.6 732.6,340.2 734.9,341.8 736.8,343.4 738.5,345.1 739.8,346.9 741,348.7 742.1,350.7 743.1,352.8 744,355 745,357 746.1,358.7 747.3,360.3 748.6,361.6 750,362.8 751.6,363.8 753.2,364.6 755,365.2 756,365.5 756.2,365.5 755.6,365.2 754.4,364.5 753.8,364.2 754,364.3 755,364.8 756.8,365.7 758.3,366.7 759.6,367.9 760.7,369.3 761.6,370.9 762.5,372.3 763.5,373.5 764.5,374.5 765.6,375.4 766.4,376.4 766.7,377.6 766.6,379 766.2,380.5 766.2,382 766.8,383.6 767.8,385.1 769.4,386.7 770.8,388.2 772,389.8 773,391.3 773.9,392.8 774.8,394.1 775.8,395.2 776.9,396.1 778,396.8 778.7,397.6 779.2,398.5 779.3,399.4 779,400.6 779.2,401.6 779.8,402.6 780.7,403.5 782,404.4 783.6,405.3 785.3,406.3 787.3,407.4 789.5,408.4 791.5,409.6 793.2,410.7 794.8,411.8 796,412.9 797.1,414.1 797.8,415.5 798.3,417.1 798.6,418.9 798.9,420.6 799.5,422.4 800.2,424.1 801.1,425.9 801.9,427.5 802.5,429.1 803.1,430.5 803.5,431.8 803.9,433.3 804.1,434.9 804.2,436.8 804.2,438.7 804.4,440.4 804.9,441.7 805.7,442.9 807.7,444.4"/>
<polyline points="492.4,239.7 498,270.4 503.3,300.3 508.5,331.9 512.9,356.5 514.7,365 519.1,391.4 522.6,414.2 524.1,422.6 524.8,426.6 525.2,429 525.5,430.8 525.8,431.9 526.1,433.1 526.7,434.6 527.4,436.2 528.3,437.9 529.1,439.8 529.7,441.8 530.3,443.9 530.7,446.1 531.4,448.4 532.4,450.8 533.7,453.3 535.2,456 536.5,458.4 537.6,460.6 538.5,462.5 539.2,464.3 539.5,466.1 539.5,468.1 539.2,470.2 538.5,472.4 538.5,474.4 539.1,476.1 540.5,477.7 542.4,479 543.8,480.3 544.6,481.5 544.8,482.6 544.3,483.8 543.7,484.7 542.8,485.4 541.7,486 540.4,486.5 539.1,487.1 537.9,487.8 536.8,488.8 535.6,489.9 534.8,491.1 534.1,492.6 533.7,494.2 533.4,495.9 533.3,497.8 533.2,499.7 533.1,502.3 533.1,507 533.1,539.5 533.6,543 533.7,545.1 533.5,547 533,549 532.4,551.2 531.8,553.5 531.4,555.9 531.1,558.4 530.8,561.1 530.6,563.5 530.3,565.7 530,567.7 529.8,569.4 529.6,571.2 529.6,573 529.8,574.7 530,576.5 530.6,578.2 531.2,580 532.1,581.7 533.2,583.5 534.2,585.3 535.1,587.3 535.9,589.4 536.5,591.6 537.2,593.6 537.8,595.5 538.5,597.2 539.2,598.8 539.9,600.5 540.7,602.5 541.5,604.7 542.4,607.1 543.3,609.5 544.1,611.9 545.2,614.9 547.2,620.4"/>
<polyline points="362.6,655.4 359.9,648.6 355.8,643.2 357.1,635.1 358.5,626.9 354.4,620.2 346.3,613.4 341.4,605.3 345,595 537.5,594.6"/>
<polyline points="547.2,620.4 585.9,621.8 640,625.1 710,630 744.1,631.8 745.8,644.9 748.5,650.1 757.2,651 758.1,644.9 760.7,634.4 758.1,625.7 759,613.4 765.9,609.9 776.4,613.4 785.2,616.9 792.2,617.8 797.4,616.9 807.9,618.7"/>
<polyline points="65.9,742.1 70.3,739.4 75.6,740.3 80,745.6 82.6,751.7 77.3,750.8 72.1,747.3 65.9,742.1"/>
<polyline points="249.1,678.5 251.7,681.1 253.3,684.3 254.4,690.6 253.8,696.9 251.7,703.3 248,708.5 243.8,712.8 238.5,717 234.3,723.3"/>
<polyline points="249.3,678.7 251.9,681.3 253.5,684.5 254.6,690.8 254,697.2"/>
<polyline points="251.2,703.3 248.2,708.8 244,713"/>
<polyline points="521,711.4 526.2,714.9 530,717.3 534.1,720.2 540.3,717.5 543.5,715.7 547.3,713.1 550.9,711.1 554.4,708.8 560.5,704.7"/>
<polyline points="521.3,711.7 526.6,715.3 534.1,720.5 540.3,717.9"/>
<polyline points="562.3,702.6 569.3,698.7"/>
<polyline points="505.1,687.7 506.1,691.8 507.8,695.6 506,702.6 507.5,707 509.5,711.4 512.5,712.6"/>
<polyline points="505.5,688 508.1,695.9 506.4,703 509.9,711.7"/>
<polyline points="296.5,662.1 305.4,662.7 309.9,662.9 313,662.9 315.6,662.8 317.8,662.6 320.3,662.3 323.2,662 326.4,661.6 329.9,661.2 333.6,660.6 337.5,659.8 341.7,658.9 346.1,657.8 350.5,656.7 354.9,655.5 359.3,654.5 363.7,653.4 368.1,652.3 372.5,651.4 376.9,650.5 381.3,649.6 385.7,648.9 390.1,648.4 394.5,648 398.8,647.6 403.2,647.5 407.6,647.5 412,647.6 416.4,647.8 420.8,648.2 425.2,648.6 429.6,649.2 434,649.8 438.4,650.6 442.8,651.6 447.2,652.8 451.6,654.1 456,655.7 460.4,657.4 464.8,659.4 469.1,661.6 472.7,663.5 475.5,665.2 477.5,666.5 478.7,667.6 480.3,668.8 482.2,670.2 484.5,671.8 487.1,673.6 489.6,675.3 491.8,677.1 493.7,678.9 495.5,680.6 497.2,682.2 499,683.7 501.2,685.2 505.1,687.7"/>
<polyline points="320.3,663.3 323.2,663 326.4,662.6 329.9,662.2 333.6,661.6 337.5,660.8 341.7,659.9 346.1,658.8 350.5,657.7 354.9,656.5 359.3,655.5 363.7,654.4 368.1,653.3 372.5,652.4 376.9,651.5 381.3,650.6 385.7,649.9 390.1,649.4 394.5,649 398.8,648.6 403.2,648.5 407.6,648.5 412,648.6 416.4,648.8 420.8,649.2 425.2,649.6 429.6,650.2 434,650.8 438.4,651.6 442.8,652.6 447.2,653.8 451.6,655.1 456,656.7 460.4,658.4 464.8,660.4 469.1,662.6 472.7,664.5 475.5,666.2 477.5,667.5 478.7,668.6 480.3,669.8 482.2,671.2 484.5,672.8 487.1,674.6"/>
</g>
<g fill="none" stroke="#dedede" stroke-width="0.8">
<path d="M414.5 367.31A40 40 0 1 1 398.5 367.31"/>
<path d="M417.5 246.88A160 160 0 1 1 395.5 246.88"/>
<path d="M417.5 126.72A280 280 0 1 1 395.5 126.72"/>
<path d="M417.5 6.65A400 400 0 1 1 395.5 6.65"/>
<circle cx="406.5" cy="406.5" r="520"/>
</g>
<circle cx="406.5" cy="406.5" r="39.9" fill="none" stroke="#ff0000" stroke-width="1.25"/>
<g fill="none" stroke-width="1.1" shape-rendering="auto"><g stroke="#f0b000"><circle cx="550.5" cy="737.5" r="3.9"/><path d="M548.0 737.5H553.0"/></g><g stroke="#f0a800"><circle cx="549.5" cy="746.5" r="3.9"/><path d="M547.0 746.5H552.0"/></g><g stroke="#ffff00"><circle cx="552.5" cy="746.5" r="3.9"/><path d="M550.0 746.5H555.0"/></g><g stroke="#e08800"><circle cx="522.5" cy="776.5" r="3.9"/><path d="M520.0 776.5H525.0M522.5 774.0V779.0"/></g></g>
<g font-family="Liberation Sans, sans-serif" font-size="10" fill="#ffff96" text-anchor="middle" letter-spacing="1.1">
<text x="406.5" y="371">31</text>
<text x="406.5" y="251">125</text>
<text x="406.5" y="131">219</text>
<text x="406.5" y="11">313</text>
</g>
</svg>
<div class="a" style="left:9px;top:759px;width:243px;height:44px;box-sizing:border-box;border:1px solid #8a8a8a;background:#000;"></div>
<div class="lg" style="left:13px;top:762.5px;color:#fff;">Symbols</div>
<div class="lg" style="left:53px;top:762.5px;color:#fff;">-CG</div>
<div class="lg" style="left:78px;top:762.5px;color:#fff;">-IC</div>
<div class="lg" style="left:99px;top:762.5px;color:#fff;">+CG</div>
<div class="lg" style="left:124.5px;top:762.5px;color:#fff;">+IC</div>
<div class="lg" style="left:153px;top:762.5px;color:#e8eefc;">Strike age color codes</div>
<div class="lg" style="left:13px;top:775.5px;color:#fff;">Recent</div>
<div class="lg" style="left:13px;top:788.5px;color:#fff;">Old</div>
<div class="lg" style="left:153.5px;top:775.8px;color:#f0c800;letter-spacing:0px;">15+</div>
<div class="lg" style="left:188.5px;top:775.8px;color:#e8a000;letter-spacing:0px;">30+</div>
<div class="lg" style="left:223px;top:775.8px;color:#e89000;letter-spacing:0px;">45+</div>
<div class="lg" style="left:153.5px;top:788.8px;color:#e07800;letter-spacing:0px;">60+</div>
<div class="lg" style="left:188.5px;top:788.8px;color:#e05c00;letter-spacing:0px;">75+</div>
<div class="lg" style="left:223px;top:788.8px;color:#e03800;letter-spacing:0px;">90+</div>
<svg class="a" style="left:9px;top:759px;" width="243" height="44" viewBox="9 759 243 44" fill="none" stroke-width="1.1"><g stroke="#00e0f0"><circle cx="60.5" cy="780.5" r="4.3"/><path d="M58 780.5H63"/><path d="M82 780.5H89"/><circle cx="110.5" cy="780.5" r="4.3"/><path d="M108 780.5H113M110.5 778.0V783.0"/><path d="M132 780.5H139M135.5 777.0V784.0"/></g><g stroke="#ffff00"><circle cx="60.5" cy="793.5" r="4.3"/><path d="M58 793.5H63"/><path d="M82 793.5H89"/><circle cx="110.5" cy="793.5" r="4.3"/><path d="M108 793.5H113M110.5 791.0V796.0"/><path d="M132 793.5H139M135.5 790.0V797.0"/></g></svg>
<div class="a" style="left:685px;top:792px;width:121px;height:14px;background:#000;"></div>
<div class="lg" style="left:689px;top:793.2px;letter-spacing:-0.3px;">&copy;2005 Astrogenic Systems</div>
<div class="box" style="left:812px;top:8px;width:321px;height:320px;"></div>
<div class="box" style="left:812px;top:333px;width:321px;height:115px;"></div>
<div class="box" style="left:812px;top:453px;width:321px;height:350px;"></div>
<div class="btn b" style="left:819px;top:16px;width:58px;height:18px;background:#5a0000;color:#d0d0d0;font-size:12.5px;line-height:18.5px;letter-spacing:0.6px;">STRIKE</div>
<div class="btn b" style="left:883px;top:16px;width:58px;height:18px;background:#333;color:#b8b8b8;font-size:12.5px;line-height:18.5px;letter-spacing:0.75px;">NOISE</div>
<div class="btn b" style="left:994px;top:16px;width:128px;height:18px;background:#333;font-size:13px;line-height:17.5px;letter-spacing:0.55px;text-align:left;"><span style="position:absolute;left:4px;top:0">Bng 156&deg;</span><span style="position:absolute;right:4px;top:0;color:#00e000">289mi</span></div>
<div class="btn" style="left:821px;top:64px;width:82px;height:16px;background:#585858;color:#f0f0f0;font-size:13px;line-height:15px;letter-spacing:0.15px;">Strikes/min</div>
<div class="btn" style="left:931px;top:64px;width:82px;height:16px;background:#585858;color:#f0f0f0;font-size:13px;line-height:15px;letter-spacing:0.15px;">Close/min</div>
<div class="btn" style="left:1041px;top:64px;width:82px;height:16px;background:#585858;color:#f0f0f0;font-size:13px;line-height:15px;letter-spacing:0.15px;">Noises/min</div>
<div class="a b r" style="right:235px;top:87px;font-size:29px;line-height:28px;color:#fff;transform:scaleX(1.22);transform-origin:right center;">0</div>
<div class="a b r" style="right:124.5px;top:87px;font-size:29px;line-height:28px;color:#fff;transform:scaleX(1.22);transform-origin:right center;">0</div>
<div class="a b r" style="right:15px;top:87px;font-size:29px;line-height:28px;color:#c0c0c0;transform:scaleX(1.22);transform-origin:right center;">0</div>
<div class="t r " style="right:235px;top:131.0px;">Total Strikes</div>
<div class="t r " style="right:235px;top:148.9px;">34</div>
<div class="t r " style="right:125px;top:131.0px;">Total Close</div>
<div class="t r " style="right:125px;top:148.9px;">0</div>
<div class="t r g" style="right:15px;top:131.0px;">Total Noises</div>
<div class="t r " style="right:15px;top:148.9px;">102</div>
<div class="t g" style="left:821px;top:203.0px;font-size:13.5px;letter-spacing:0.5px;color:#b4b4b4;">Lightning type distribution</div>
<div class="a" style="left:821px;top:217px;width:303px;height:1px;background:#8c8c8c;"></div>
<div class="t b" style="left:821px;top:224.9px;letter-spacing:0px;">Cloud-ground</div>
<div class="t " style="left:913px;top:224.9px;font-size:14px;color:#ddd;letter-spacing:0;">+</div>
<div class="bar" style="left:925px;top:227px;"><i style="width:16px;background:#ff0000"></i></div>
<div class="t b" style="left:979px;top:224.9px;letter-spacing:1.2px;">32%</div>
<div class="a" style="left:1016px;top:231px;width:7px;height:2px;background:#d0d0d0;"></div>
<div class="bar" style="left:1028px;top:227px;"><i style="width:17px;background:#8ecbff"></i></div>
<div class="t b" style="left:1082px;top:224.9px;letter-spacing:1.2px;">35%</div>
<div class="t b" style="left:821px;top:248.8px;color:#c4c4c4;letter-spacing:0.2px;">Count</div>
<div class="t b" style="left:925px;top:248.8px;">11</div>
<div class="t b" style="left:1028.5px;top:248.8px;">12</div>
<div class="t b" style="left:821px;top:278.6px;letter-spacing:0px;">Intracloud</div>
<div class="t " style="left:913px;top:278.6px;font-size:14px;color:#ddd;letter-spacing:0;">+</div>
<div class="bar" style="left:925px;top:281px;"><i style="width:12px;background:#ee5fa7"></i></div>
<div class="t b" style="left:979px;top:278.6px;letter-spacing:1.2px;">24%</div>
<div class="a" style="left:1016px;top:285px;width:7px;height:2px;background:#d0d0d0;"></div>
<div class="bar" style="left:1028px;top:281px;"><i style="width:4px;background:#00e000"></i></div>
<div class="t b" style="left:1082px;top:278.6px;letter-spacing:1.2px;">9%</div>
<div class="t b" style="left:821px;top:302.5px;color:#c4c4c4;letter-spacing:0.2px;">Count</div>
<div class="t b" style="left:925px;top:302.5px;">8</div>
<div class="t b" style="left:1028.5px;top:302.5px;">3</div>
<div class="a b" style="left:821px;top:339.2px;font-size:16px;line-height:18px;color:#00e600;transform:scaleX(1.273);transform-origin:left center;">2/23/2026 9:15:02 PM</div>
<div class="a" style="left:821px;top:358px;width:302px;height:1px;background:#8c8c8c;"></div>
<div class="t " style="left:821px;top:375.6px;">Squelch</div>
<div class="t " style="left:909.5px;top:375.6px;">0</div>
<div class="t " style="left:981px;top:375.6px;">Upload</div>
<div class="t g" style="left:1061px;top:375.6px;">Disabled</div>
<div class="t " style="left:821px;top:395.7px;">Persistence</div>
<div class="t " style="left:909.5px;top:395.7px;">90 min</div>
<div class="t " style="left:981px;top:395.7px;">Capture</div>
<div class="t gr" style="left:1061px;top:395.7px;">Active</div>
<div class="t " style="left:821px;top:415.8px;">Range</div>
<div class="t " style="left:909.5px;top:415.8px;">313 mi</div>
<div class="t " style="left:981px;top:415.8px;">Receiver</div>
<div class="t gr" style="left:1061px;top:415.8px;">Enabled</div>
<div class="t g" style="left:821px;top:462.9px;">Uptime</div>
<div class="t " style="left:909.5px;top:462.9px;letter-spacing:0.75px;">1017:00</div>
<div class="t g" style="left:981px;top:462.9px;">Peak time</div>
<div class="t g" style="left:1061px;top:462.9px;">Plot</div>
<div class="t g" style="left:821px;top:485.7px;">Peak rate</div>
<div class="t " style="left:909.5px;top:485.7px;">2/min</div>
<div class="t " style="left:981px;top:485.7px;">4:12 AM</div>
<div class="t " style="left:1061px;top:485.7px;">Strike</div>
<div class="t g" style="left:822px;top:515.6px;letter-spacing:0.6px;">Trend graph</div>
<div class="t " style="left:908px;top:515.6px;">60 min</div>
<svg class="a" style="left:812px;top:453px;" width="321" height="350" viewBox="812 453 321 350" shape-rendering="crispEdges"><g stroke="#c8c8c8" stroke-width="1" fill="none"><path d="M822.5 777.5H1088.5V542.5"/><path d="M1088.5 777V774"/><path d="M1044.5 777V774"/><path d="M999.5 777V774"/><path d="M955.5 777V774"/><path d="M910.5 777V774"/><path d="M866.5 777V774"/><path d="M822.5 777V774"/><path d="M1088 738.5H1086.0"/><path d="M1088 699.5H1084.0"/><path d="M1088 659.5H1086.0"/><path d="M1088 620.5H1084.0"/><path d="M1088 581.5H1086.0"/><path d="M1088 542.5H1084.0"/></g><g stroke="#fff" stroke-width="1" fill="none" shape-rendering="auto"><path d="M924.5 777L926.5 769.5H929L931 777"/><path d="M939.5 777L941.5 769.5H948.5L950.5 777"/><path d="M969.5 777L971.5 769.5H974L976 777"/><path d="M1033.5 777L1035 769.5H1037.5L1039.5 777"/></g><path d="M944.5 770V777" stroke="#ff60c0" stroke-width="1"/></svg>
<div class="t g" style="left:1087.0px;top:781.5px;font-size:12px;letter-spacing:0.3px;color:#c8c8c8;">0</div>
<div class="t g" style="left:1042.6px;top:781.5px;font-size:12px;letter-spacing:0.3px;color:#c8c8c8;">10</div>
<div class="t g" style="left:998.2px;top:781.5px;font-size:12px;letter-spacing:0.3px;color:#c8c8c8;">20</div>
<div class="t g" style="left:953.8px;top:781.5px;font-size:12px;letter-spacing:0.3px;color:#c8c8c8;">30</div>
<div class="t g" style="left:909.4px;top:781.5px;font-size:12px;letter-spacing:0.3px;color:#c8c8c8;">40</div>
<div class="t g" style="left:865.0px;top:781.5px;font-size:12px;letter-spacing:0.3px;color:#c8c8c8;">50</div>
<div class="t g" style="left:820.6px;top:781.5px;font-size:12px;letter-spacing:0.3px;color:#c8c8c8;">60</div>
<div class="t g" style="left:1100.5px;top:781.5px;font-size:12px;letter-spacing:0.1px;color:#c8c8c8;">min</div>
<div class="t g" style="left:1092px;top:690.7px;font-size:11.5px;letter-spacing:0.3px;color:#c8c8c8;">10</div>
<div class="t g" style="left:1092px;top:612.3px;font-size:11.5px;letter-spacing:0.3px;color:#c8c8c8;">20</div>
<div class="t g" style="left:1092px;top:534.0px;font-size:11.5px;letter-spacing:0.3px;color:#c8c8c8;">30</div>
</body></html>
